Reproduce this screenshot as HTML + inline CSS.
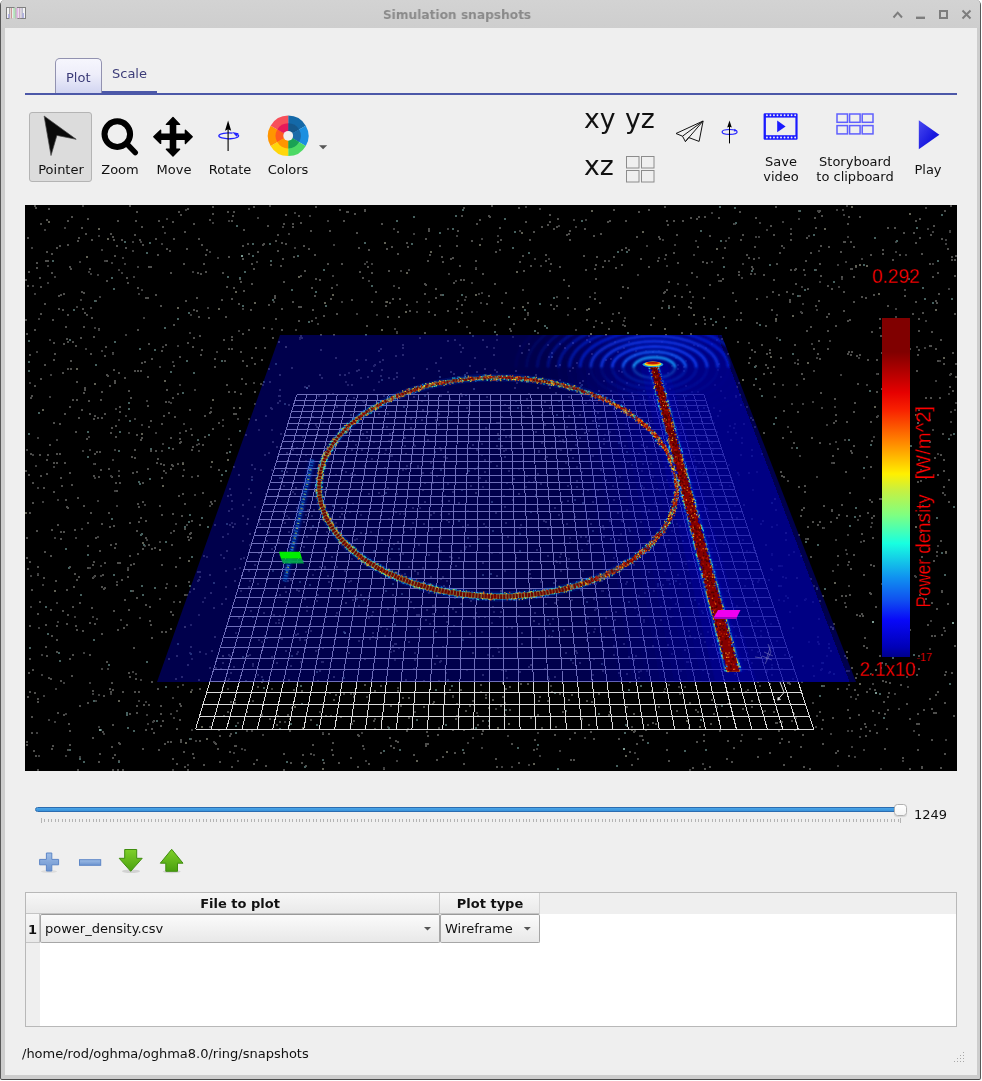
<!DOCTYPE html>
<html lang="en">
<head>
<meta charset="utf-8">
<title>Simulation snapshots</title>
<style>
html,body{margin:0;padding:0;background:#fff;}
body{width:982px;height:1081px;position:relative;overflow:hidden;font-family:"DejaVu Sans","Liberation Sans",sans-serif;font-size:13px;color:#111;}
.abs{position:absolute;}
#win{position:absolute;left:0;top:0;width:981px;height:1080px;background:#cdcdcd;border-radius:5px 5px 2px 2px;box-sizing:border-box;border:1px solid #585858;border-top:0;border-bottom-color:#4a4a4a;}
#titlebar{position:absolute;left:1px;top:0;width:979px;height:28px;background:linear-gradient(#d3d3d3,#cecece);border-radius:4px 4px 0 0;}
#title{will-change:transform;position:absolute;left:0;top:0;width:914px;text-align:center;font-weight:bold;font-size:13px;color:#8a8a8a;line-height:28px;transform:scaleX(0.9375);transform-origin:457px 0;top:1px !important;}
#content{position:absolute;left:5px;top:28px;width:972px;height:1047px;background:#efefef;}
.lbl{position:absolute;white-space:nowrap;line-height:16px;text-align:center;transform:translateX(-50%);will-change:transform;}
.tb{position:absolute;white-space:nowrap;line-height:16px;will-change:transform;}
svg{position:absolute;overflow:visible;}
</style>
</head>
<body>
<div id="win"></div>
<div id="titlebar"></div>
<div id="title">Simulation snapshots</div>
<!-- app icon -->
<svg style="left:6px;top:7px" width="21" height="13" viewBox="0 0 21 13">
<rect x="0.5" y="0.5" width="19" height="11" fill="#ececec" stroke="#808080" stroke-width="1"/>
<rect x="3.4" y="11" width="8" height="1.2" fill="#d0d0d0"/>
<rect x="8.5" y="0" width="2.5" height="1.1" fill="#c8c8c8"/>
<rect x="1.2" y="1" width="1.6" height="10" fill="#f6f6f6"/><rect x="17.2" y="1" width="1.6" height="10" fill="#f6f6f6"/>
<rect x="3" y="1" width="1.1" height="10" fill="#a8a8a8"/><rect x="2.2" y="7" width="1.3" height="4" fill="#a8a8e8"/>
<rect x="4.8" y="1" width="1.1" height="10.5" fill="#c89090"/><rect x="7.4" y="1" width="1.4" height="10" fill="#a4e0ac"/>
<rect x="9.4" y="1" width="1.1" height="10.5" fill="#9c9c9c"/><rect x="10.8" y="1" width="1.4" height="10" fill="#e8b4ea"/>
<rect x="13.2" y="1" width="1.1" height="10.5" fill="#c4a0c0"/><rect x="15.6" y="1" width="1.1" height="10" fill="#a8a8c0"/>
<rect x="16.6" y="6" width="1.2" height="5" fill="#a4a4e0"/>
</svg>
<!-- window buttons -->
<svg style="left:0;top:0" width="982" height="28" viewBox="0 0 982 28" fill="none" stroke="#7d7d7d" stroke-width="2">
<path d="M893.5 17.5 L897.7 12.7 L902 17.5" stroke-width="2"/>
<path d="M916 17.8 H925" stroke-width="2.4"/>
<rect x="940" y="11" width="7" height="7"/>
<path d="M962.5 10.5 L970.5 18.5 M970.5 10.5 L962.5 18.5"/>
</svg>
<div id="content"></div>

<!-- tabs -->
<div class="abs" style="left:25px;top:93px;width:932px;height:2px;background:#4c58a8;"></div>
<div class="abs" style="left:102px;top:91px;width:55px;height:3px;background:#4c58a8;"></div>
<div class="abs" style="left:55px;top:58px;width:47px;height:35px;box-sizing:border-box;border:1px solid #9292b0;border-bottom:0;border-radius:5px 5px 0 0;background:linear-gradient(#f6f6fd 0%,#eeeefa 45%,#d2d5f1 100%);"></div>
<div class="tb" style="left:66px;top:70px;color:#3c3c78;">Plot</div>
<div class="tb" style="left:112px;top:66px;color:#3c3c78;">Scale</div>

<!-- toolbar left -->
<div class="abs" style="left:29px;top:112px;width:63px;height:70px;box-sizing:border-box;border:1px solid #b4b4b4;border-radius:3px;background:#dcdcdc;"></div>
<div class="lbl" style="left:60.5px;top:162px;">Pointer</div>
<div class="lbl" style="left:120px;top:162px;">Zoom</div>
<div class="lbl" style="left:173.5px;top:162px;">Move</div>
<div class="lbl" style="left:229.5px;top:162px;">Rotate</div>
<div class="lbl" style="left:288.2px;top:162px;">Colors</div>
<svg style="left:0;top:100px" width="982" height="100" viewBox="0 100 982 100">
<!-- pointer -->
<defs>
<linearGradient id="pg" x1="0" y1="0" x2="1" y2="0"><stop offset="0" stop-color="#000"/><stop offset="1" stop-color="#222"/></linearGradient>
<linearGradient id="playg" x1="0" y1="0" x2="1" y2="1"><stop offset="0" stop-color="#4a4af0"/><stop offset="0.6" stop-color="#1a1ae0"/><stop offset="1" stop-color="#1010c8"/></linearGradient>
</defs>
<path d="M44.1 116 L76.2 139.3 L56.9 135.4 L51 155.6 Z" fill="#0a0a0a" stroke="#4a4a4a" stroke-width="0.7" stroke-linejoin="round"/>
<!-- zoom -->
<circle cx="117.3" cy="134.1" r="12.8" fill="none" stroke="#000" stroke-width="6"/>
<path d="M126.5 143.5 L135.3 152.6" stroke="#000" stroke-width="5.4" stroke-linecap="round"/>
<!-- move -->
<path d="M173 117.6 L179.6 124.4 H175.6 V134.2 H185.4 V130.2 L192.2 136.8 L185.4 143.4 V139.4 H175.6 V149.2 H179.6 L173 156 L166.4 149.2 H170.4 V139.4 H160.6 V143.4 L153.8 136.8 L160.6 130.2 V134.2 H170.4 V124.4 H166.4 Z" fill="#000" stroke="#000" stroke-width="1.4" stroke-linejoin="round"/>
<!-- rotate -->
<path d="M232.5 133.2 A9.9 2.9 0 1 0 237.6 134.6" fill="none" stroke="#2222ff" stroke-width="1.3"/>
<path d="M232.2 132 L238.6 133.2 L236.6 136.8 Z" fill="#2222ff"/>
<path d="M228.1 150.9 V127" stroke="#000" stroke-width="1.1"/>
<path d="M228.1 120.5 L231.2 130.8 L228.1 129.2 L225 130.8 Z" fill="#000"/>
<!-- colors -->
<g transform="translate(288.2 135.8)">
<path d="M0 0 L0 -20.3 A20.3 20.3 0 0 1 17.58 -10.15 Z" fill="#1469a8"/>
<path d="M0 0 L17.58 -10.15 A20.3 20.3 0 0 1 17.58 10.15 Z" fill="#1a8fe0"/>
<path d="M0 0 L17.58 10.15 A20.3 20.3 0 0 1 0 20.3 Z" fill="#4cd964"/>
<path d="M0 0 L0 20.3 A20.3 20.3 0 0 1 -17.58 10.15 Z" fill="#ffd60a"/>
<path d="M0 0 L-17.58 10.15 A20.3 20.3 0 0 1 -17.58 -10.15 Z" fill="#ff9500"/>
<path d="M0 0 L-17.58 -10.15 A20.3 20.3 0 0 1 0 -20.3 Z" fill="#f7505a"/>
<path d="M0 0 L0 -12.6 A12.6 12.6 0 0 1 10.91 -6.30 Z" fill="#15588c"/>
<path d="M0 0 L10.91 -6.30 A12.6 12.6 0 0 1 10.91 6.30 Z" fill="#1b6ba8"/>
<path d="M0 0 L10.91 6.30 A12.6 12.6 0 0 1 0 12.6 Z" fill="#1aa154"/>
<path d="M0 0 L0 12.6 A12.6 12.6 0 0 1 -10.91 6.30 Z" fill="#ff9500"/>
<path d="M0 0 L-10.91 6.30 A12.6 12.6 0 0 1 -10.91 -6.30 Z" fill="#ff5a1f"/>
<path d="M0 0 L-10.91 -6.30 A12.6 12.6 0 0 1 0 -12.6 Z" fill="#e6195a"/>
<circle r="4.9" fill="#efefef"/>
</g>
<path d="M319 145.2 H327.2 L323.1 149.2 Z" fill="#555"/>
<!-- paper plane -->
<g fill="none" stroke="#111" stroke-width="1" stroke-linejoin="round">
<path d="M703.1 121 L676 133.5 L682.5 136.2 Z"/>
<path d="M682.5 136.2 L685.4 141.6 L703.1 121"/>
<path d="M685.4 141.6 L688.6 137.5"/>
<path d="M688.6 137.5 L699.1 141.4 L703.1 121"/>
</g>
<!-- rotate small -->
<ellipse cx="729.6" cy="131.9" rx="7.5" ry="2.4" fill="none" stroke="#2222ff" stroke-width="1.2"/>
<path d="M734.5 128.8 L737.3 131 L733.8 131.6 Z" fill="#2222ff"/>
<path d="M729.5 143.4 V125" stroke="#000" stroke-width="1"/>
<path d="M729.5 120.4 L731.8 127.6 L729.5 126.7 L727.2 127.6 Z" fill="#000"/>
<!-- 4 squares -->
<g fill="none" stroke="#8c8c8c" stroke-width="1">
<rect x="626.5" y="156.5" width="12.5" height="11.5"/><rect x="641.5" y="156.5" width="12.5" height="11.5"/>
<rect x="626.5" y="170.5" width="12.5" height="11.5"/><rect x="641.5" y="170.5" width="12.5" height="11.5"/>
</g>
<!-- save video -->
<g>
<rect x="763.6" y="113.2" width="34" height="26.5" rx="1.2" fill="#1a1aff"/>
<rect x="765.9" y="117.6" width="29.5" height="17.6" fill="#efefef"/>
<g fill="#efefef"><circle cx="766.90" cy="115.3" r="0.95"/><circle cx="766.90" cy="137.5" r="0.95"/><circle cx="770.43" cy="115.3" r="0.95"/><circle cx="770.43" cy="137.5" r="0.95"/><circle cx="773.96" cy="115.3" r="0.95"/><circle cx="773.96" cy="137.5" r="0.95"/><circle cx="777.49" cy="115.3" r="0.95"/><circle cx="777.49" cy="137.5" r="0.95"/><circle cx="781.02" cy="115.3" r="0.95"/><circle cx="781.02" cy="137.5" r="0.95"/><circle cx="784.55" cy="115.3" r="0.95"/><circle cx="784.55" cy="137.5" r="0.95"/><circle cx="788.08" cy="115.3" r="0.95"/><circle cx="788.08" cy="137.5" r="0.95"/><circle cx="791.61" cy="115.3" r="0.95"/><circle cx="791.61" cy="137.5" r="0.95"/><circle cx="795.14" cy="115.3" r="0.95"/><circle cx="795.14" cy="137.5" r="0.95"/></g>
<path d="M777.2 120.6 L785.6 126.4 L777.2 132.2 Z" fill="#1a1aff"/>
</g>
<!-- storyboard -->
<g fill="none" stroke="#5050ff" stroke-width="1.5" opacity="0.9">
<rect x="837" y="114" width="10.5" height="8.3"/><rect x="849.6" y="114" width="10.5" height="8.3"/><rect x="862.2" y="114" width="10.8" height="8.3"/>
<rect x="837" y="125.6" width="10.5" height="8.3"/><rect x="849.6" y="125.6" width="10.5" height="8.3"/><rect x="862.2" y="125.6" width="10.8" height="8.3"/>
</g>
<!-- play -->
<path d="M918.8 120.2 L939.4 134.7 L918.8 149.3 Z" fill="url(#playg)"/>
</svg>
<div class="tb" style="left:583.5px;top:103.5px;font-size:26.67px;line-height:30px;">xy</div>
<div class="tb" style="left:625px;top:103.5px;font-size:26.67px;line-height:30px;">yz</div>
<div class="tb" style="left:583.5px;top:150.6px;font-size:26.67px;line-height:30px;">xz</div>
<div class="lbl" style="left:781px;top:154px;line-height:15px;">Save<br>video</div>
<div class="lbl" style="left:854.7px;top:154px;line-height:15px;">Storyboard<br>to clipboard</div>
<div class="lbl" style="left:928px;top:162px;">Play</div>

<!-- plot area -->
<svg style="left:25px;top:205px;overflow:hidden" width="932" height="566" viewBox="25 205 932 566">
<defs>
<linearGradient id="jet" x1="0" y1="0" x2="0" y2="1">
<stop offset="0" stop-color="#800000"/><stop offset="0.11" stop-color="#8a0000"/><stop offset="0.125" stop-color="#ff0000" stop-opacity="1"/>
</linearGradient>
</defs>
<rect x="25" y="205" width="932" height="566" fill="#000"/>
<path d="M356 360h2M429 255h2M99 754h2M121 580h2M621 265h2M544 425h2M63 294h2M469 634h2M96 452h2M117 770h2M459 266h2M871 332h2M253 269h2M615 612h2M75 432h2M72 342h2M321 635h2M172 759h2M145 521h2M598 391h2M130 398h2M406 305h2M585 270h2M602 267h2M658 416h2M533 750h2M462 527h2M501 670h2M395 512h2M279 390h2M740 455h2M108 513h2M562 712h2M921 557h2M771 665h2M319 280h2M145 730h2M453 374h2M800 556h2M180 706h2M456 246h2M709 285h2M807 527h2M373 564h2M633 714h2M618 673h2M95 301h2M301 691h2M738 272h2M87 523h2M687 662h2M316 601h2M933 561h2M48 678h2M388 378h2M650 325h2M530 266h2M248 500h2M157 459h2M432 606h2M917 714h2M107 376h2M484 617h2M587 490h2M929 346h2M863 646h2M909 769h2M310 631h2M392 595h2M261 360h2M109 386h2M179 443h2M699 444h2M37 702h2M876 392h2M294 494h2M29 355h2M454 753h2M403 532h2M153 733h2M657 261h2M492 607h2M432 614h2M428 312h2M518 616h2M88 401h2M93 419h2M476 372h2M137 554h2M640 259h2M129 206h2M605 360h2M574 309h2M397 232h2M97 418h2M653 591h2M177 464h2M380 578h2M510 331h2M143 705h2M502 697h2M520 525h2M112 353h2M129 556h2M783 477h2M515 371h2M553 229h2M235 746h2M395 356h2M731 762h2M52 746h2M330 299h2M737 473h2M555 581h2M955 377h2M389 434h2M570 760h2M822 720h2M362 434h2M652 405h2M850 451h2M862 616h2M782 438h2M229 736h2M529 570h2M773 235h2M53 492h2M508 471h2M223 558h2M482 563h2M398 288h2M250 310h2M257 687h2M226 551h2M234 700h2M664 207h2M515 558h2M843 292h2M879 328h2M422 410h2M514 388h2M469 546h2M113 611h2M499 617h2M786 292h2M767 368h2M199 336h2M53 360h2M629 682h2M850 355h2M651 691h2M698 564h2M184 767h2M586 340h2M46 220h2M843 311h2M564 348h2M469 405h2M870 422h2M53 463h2M242 505h2M538 452h2M807 539h2M290 763h2M454 340h2M87 568h2M944 675h2M703 735h2M455 719h2M158 750h2M180 742h2M547 225h2M918 656h2M820 393h2M648 210h2M819 359h2M201 350h2M509 329h2M594 269h2M358 736h2M568 700h2M828 314h2M929 264h2M279 401h2M308 249h2M815 306h2M544 669h2M600 234h2M803 270h2M478 539h2M652 723h2M645 730h2M229 489h2M488 726h2M571 695h2M544 459h2M740 741h2M922 471h2M597 413h2M885 664h2M165 632h2M149 607h2M477 529h2M99 452h2M463 280h2M242 516h2M827 331h2M943 364h2M758 580h2M171 465h2M929 346h2M503 430h2M789 302h2M432 704h2M191 435h2M190 647h2M552 619h2M372 637h2M225 571h2M351 300h2M764 580h2M44 552h2M592 675h2M476 224h2M418 545h2M554 508h2M549 271h2M140 440h2M922 313h2M111 477h2M303 246h2M952 391h2M301 338h2M864 638h2M894 470h2M440 358h2M574 733h2M609 712h2M742 540h2M116 491h2M83 393h2M460 280h2M300 223h2M674 296h2M845 472h2M110 433h2M93 476h2M908 330h2M489 217h2M372 633h2M299 338h2M69 745h2M751 450h2M137 371h2M293 257h2M210 412h2M344 518h2M568 416h2M321 662h2M537 388h2M302 561h2M847 224h2M281 243h2M40 224h2M775 723h2M589 400h2M551 692h2M276 663h2M133 648h2M697 712h2M584 608h2M543 521h2M729 426h2M260 556h2M228 349h2M439 561h2M80 338h2M39 278h2M665 467h2M466 373h2M81 292h2M706 596h2M916 724h2M711 494h2M638 454h2M734 506h2M71 676h2M214 367h2M300 662h2M28 475h2M397 542h2M585 537h2M275 241h2M928 522h2M248 571h2M212 207h2M368 596h2M110 692h2M310 720h2M696 411h2M279 722h2M819 211h2M118 476h2M861 297h2M172 615h2M625 248h2M428 229h2M331 517h2M669 444h2M111 747h2M898 364h2M698 604h2M807 539h2M762 712h2M178 496h2M766 354h2M69 731h2M667 645h2M776 723h2M167 742h2M795 722h2M607 222h2M871 441h2M112 237h2M67 342h2M677 575h2M132 591h2M880 668h2M596 257h2M667 225h2M666 750h2M722 456h2M526 476h2M28 673h2M841 277h2M791 721h2M944 754h2M119 744h2M92 691h2M283 282h2M891 477h2M265 416h2M261 677h2M530 597h2M103 696h2M725 500h2M810 253h2M656 409h2M104 356h2M364 466h2M692 517h2M661 342h2M37 699h2M87 703h2M300 307h2M733 428h2M716 707h2M322 734h2M317 681h2M502 683h2M810 327h2M940 768h2M229 525h2M112 690h2M42 502h2M494 284h2M864 724h2M485 481h2M421 420h2M240 282h2M620 298h2M170 742h2M293 574h2M160 726h2M311 321h2M745 579h2M261 715h2M944 703h2M428 231h2M187 209h2M528 667h2M440 515h2M769 350h2M451 558h2M410 529h2M148 545h2M26 538h2M793 552h2M884 613h2M147 406h2M755 218h2M948 502h2M284 587h2M91 608h2M424 284h2M394 644h2M798 487h2M899 255h2M312 310h2M77 498h2M675 358h2M280 478h2M471 729h2M348 400h2M816 588h2M828 644h2M930 235h2M856 615h2M921 768h2M233 288h2M75 626h2M486 347h2M684 499h2M522 256h2M588 336h2M199 689h2M449 557h2M313 510h2M286 472h2M440 450h2M333 700h2M595 609h2M147 377h2M683 371h2M101 418h2M537 715h2M588 431h2M488 546h2M802 666h2M462 348h2M585 403h2M274 298h2M203 556h2M594 299h2M351 450h2M402 470h2M853 412h2M933 226h2M792 628h2M417 629h2M788 742h2M240 591h2M301 552h2M795 269h2M535 490h2M613 574h2M153 721h2M566 427h2M119 483h2M943 460h2M418 615h2M686 662h2M467 525h2M894 228h2M155 239h2M460 690h2M626 707h2M25 280h2M425 746h2M900 685h2M484 460h2M826 317h2M254 364h2M180 740h2M723 317h2M870 674h2M112 770h2M820 246h2M26 334h2M263 244h2M685 517h2M156 463h2M565 653h2M740 320h2M126 278h2M332 743h2M621 402h2M422 473h2M253 207h2M35 756h2M333 677h2M310 529h2M685 454h2M511 744h2M265 766h2M277 235h2M446 520h2M81 228h2M223 716h2M931 636h2M108 469h2M258 640h2M404 438h2M529 240h2M737 552h2M760 636h2M396 611h2M227 212h2M841 505h2M781 722h2M94 416h2M532 411h2M344 404h2M261 682h2M251 477h2M803 508h2M136 713h2M649 397h2M942 434h2M521 633h2M706 263h2M634 355h2M427 261h2M243 230h2M635 351h2M450 259h2M751 267h2M213 608h2M485 527h2M775 321h2M106 375h2M362 401h2M214 743h2M789 684h2M57 525h2M705 593h2M884 588h2M364 659h2M198 317h2M27 286h2M311 288h2M384 636h2M931 332h2M599 418h2M414 571h2M812 522h2M866 648h2M114 256h2M747 690h2M225 587h2M579 663h2M222 537h2M397 691h2M56 626h2M278 620h2M66 590h2M60 681h2M89 269h2M288 405h2M790 270h2M945 553h2M396 484h2M368 250h2M293 530h2M307 510h2M28 272h2M49 445h2M134 692h2M757 682h2M819 601h2M833 463h2M465 711h2M160 714h2M212 214h2M846 516h2M867 360h2M646 447h2M360 533h2M496 576h2M827 286h2M549 408h2M426 369h2M278 623h2M91 240h2M518 763h2M358 370h2M461 313h2M98 477h2M664 292h2M238 304h2M456 716h2M751 663h2M202 445h2M161 632h2M496 446h2M790 757h2M892 330h2M823 506h2M325 492h2M605 480h2M406 466h2M780 472h2M228 655h2M278 396h2M276 447h2M182 494h2M930 398h2M359 272h2M430 463h2M276 725h2M563 442h2M690 308h2M694 681h2M62 310h2M29 692h2M929 442h2M885 665h2M407 247h2M922 506h2M263 328h2M76 400h2M639 404h2M101 587h2M549 388h2M484 472h2M818 212h2M133 564h2M247 244h2M402 554h2M169 251h2M233 467h2M64 414h2M859 217h2M863 541h2M443 586h2M214 525h2M104 414h2M57 713h2M586 701h2M89 623h2M128 610h2M704 769h2M183 752h2M118 373h2M432 483h2M444 496h2M708 520h2M452 258h2M344 571h2M449 632h2M43 578h2M684 407h2M425 620h2M233 212h2M469 366h2M458 322h2M865 298h2M440 579h2M496 372h2M158 221h2M77 770h2M170 612h2M116 585h2M779 722h2M200 355h2M381 496h2M190 739h2M200 274h2M136 598h2M527 408h2M333 335h2M882 250h2M519 528h2M79 603h2M113 370h2M680 433h2M660 620h2M654 406h2M874 690h2M212 429h2M67 615h2M555 366h2M417 573h2M151 359h2M277 403h2M67 245h2M708 537h2M145 605h2M638 672h2M588 519h2M689 636h2M340 461h2M460 604h2M699 582h2M482 721h2M473 389h2M48 209h2M658 707h2M501 446h2M482 675h2M881 389h2M854 690h2M434 315h2M93 337h2M392 646h2M399 299h2M846 658h2M541 728h2M697 247h2M66 339h2M109 527h2M821 729h2M106 261h2M795 722h2M941 592h2M693 345h2M51 273h2M653 318h2M223 340h2M931 709h2M319 375h2M727 432h2M92 565h2M650 464h2M187 537h2M943 487h2M951 673h2M172 466h2M539 697h2M238 475h2M655 724h2M268 532h2M406 243h2M228 392h2M438 371h2M676 490h2M720 541h2M941 591h2M197 476h2M142 749h2M74 574h2M918 669h2M593 739h2M618 313h2M283 754h2M669 609h2M780 586h2M296 590h2M402 355h2M393 544h2M807 289h2M477 441h2M205 255h2M328 734h2M284 523h2M679 526h2M775 207h2M790 240h2M251 358h2M322 648h2M452 730h2M397 254h2M160 706h2M257 252h2M47 261h2M27 569h2M336 314h2M560 571h2M571 435h2M448 514h2M628 342h2M234 581h2M663 692h2M187 343h2M39 455h2M749 358h2M486 304h2M90 354h2M917 482h2M436 476h2M36 263h2M685 564h2M633 660h2M641 736h2M776 710h2M279 375h2M950 206h2M70 269h2M569 231h2M440 396h2M268 369h2M84 313h2M37 770h2M697 407h2M170 629h2M229 736h2M647 725h2M688 631h2M857 384h2M545 522h2M90 513h2M665 255h2M935 695h2M757 757h2M31 590h2M889 653h2M788 682h2M107 669h2M204 437h2M132 473h2M262 245h2M151 549h2M937 475h2M753 259h2M297 652h2M727 741h2M296 508h2M682 428h2M112 725h2M40 379h2M291 447h2M886 413h2M188 540h2M221 604h2M361 450h2M413 755h2M505 689h2M884 749h2M739 212h2M903 233h2M472 445h2M609 521h2M833 423h2M425 285h2M603 381h2M173 239h2M52 320h2M134 371h2M378 351h2M742 235h2M56 248h2M166 249h2M738 275h2M779 253h2M92 578h2M229 752h2M937 273h2M925 599h2M134 458h2M235 414h2M139 240h2M60 295h2M869 500h2M513 308h2M160 306h2M835 415h2M326 532h2M369 639h2M292 227h2M384 468h2M314 255h2M757 582h2M353 721h2M512 500h2M658 237h2M832 628h2M56 652h2M556 306h2M380 686h2M746 255h2M575 427h2M756 299h2M613 500h2M199 652h2M26 742h2M231 501h2M805 261h2M29 562h2M527 303h2M528 394h2M531 561h2M876 733h2M291 368h2M315 425h2M741 443h2M535 375h2M137 288h2M527 313h2M668 540h2M389 303h2M435 610h2M938 294h2M457 231h2M405 417h2M335 475h2M463 764h2M538 381h2M413 445h2M496 335h2M569 240h2M381 540h2M559 365h2M913 667h2M702 537h2M198 680h2M474 469h2M618 442h2M154 548h2M498 449h2M544 402h2M298 514h2M797 364h2M765 365h2M278 540h2M642 740h2M381 370h2M266 541h2M218 470h2M771 310h2M193 310h2M225 599h2M179 357h2M838 515h2M775 510h2M470 486h2M225 317h2M678 315h2M312 417h2M931 603h2M500 240h2M37 614h2M899 653h2M735 433h2M537 509h2M499 228h2M170 469h2M643 620h2M30 454h2M954 646h2M742 637h2M891 440h2M708 440h2M720 391h2M681 333h2M489 648h2M345 472h2M668 306h2M941 635h2M273 615h2M755 366h2M281 639h2M519 672h2M45 625h2M555 393h2M940 541h2M821 216h2M423 707h2M954 314h2M64 463h2M581 429h2M189 410h2M556 562h2M128 673h2M579 415h2M759 693h2M549 222h2M679 584h2M559 557h2M445 673h2M240 394h2M426 732h2M806 331h2M771 570h2M677 263h2M283 486h2M416 615h2M87 219h2M101 634h2M455 566h2M619 477h2M136 435h2M335 616h2M564 430h2M845 607h2M498 423h2M193 338h2M820 276h2M854 403h2M505 437h2M859 355h2M386 629h2M504 507h2M803 767h2M690 334h2M823 686h2M388 441h2M298 591h2M728 465h2M461 396h2M518 208h2M849 493h2M391 456h2M695 515h2M353 697h2M521 644h2M663 293h2M700 577h2M181 516h2M899 600h2M83 293h2M872 538h2M827 349h2M568 559h2M673 221h2M698 217h2M239 279h2M696 506h2M281 309h2M617 352h2M899 445h2M215 668h2M379 362h2M238 618h2M835 753h2M196 298h2M709 767h2M831 510h2M227 712h2M734 424h2M568 286h2M784 655h2M712 325h2M593 327h2M295 635h2M264 348h2M509 710h2M595 265h2M520 684h2M952 353h2M742 709h2M277 716h2M193 758h2M638 212h2M189 534h2M504 715h2M706 509h2M885 682h2M408 642h2M453 283h2M209 575h2M676 235h2M46 252h2M723 544h2M853 302h2M547 701h2M521 353h2M59 424h2M760 631h2M665 335h2M371 302h2M907 580h2M374 691h2M822 744h2M592 421h2M315 651h2M375 638h2M282 259h2M871 502h2M324 569h2M872 711h2M438 547h2M540 484h2M918 724h2M378 414h2M695 710h2M835 326h2M363 402h2M349 512h2M155 295h2M828 247h2M433 621h2M583 256h2M433 513h2M136 212h2M72 400h2M866 692h2M648 267h2M832 718h2M581 591h2M656 356h2M666 290h2M242 246h2M708 674h2M665 384h2M128 391h2M915 243h2M456 309h2M696 219h2M402 348h2M830 522h2M600 470h2M908 515h2M214 637h2M60 532h2M45 647h2M604 261h2M534 740h2M65 327h2M817 637h2M614 620h2M482 274h2M39 602h2M633 365h2M511 628h2M586 310h2M109 689h2M242 361h2M666 221h2M462 210h2M34 330h2M904 296h2M248 330h2M157 689h2M43 488h2M761 454h2M486 397h2M76 580h2M817 354h2M772 292h2M325 716h2M496 466h2M78 238h2M36 268h2M40 287h2M423 524h2M344 375h2M906 704h2M648 267h2M348 582h2M613 655h2M506 376h2M173 325h2M396 373h2M669 633h2M513 600h2M821 669h2M303 547h2M324 492h2M87 546h2M915 221h2M876 360h2M640 522h2M623 644h2M934 458h2M410 602h2M726 591h2M641 445h2M851 668h2M315 207h2M354 475h2M299 638h2M186 249h2M320 350h2M856 356h2M305 766h2M726 717h2M380 753h2M112 758h2M591 702h2M841 596h2M230 445h2M341 264h2M718 610h2M501 417h2M285 215h2M835 600h2M495 759h2M114 755h2M850 569h2M815 270h2M263 613h2M618 739h2M943 471h2M931 740h2M353 694h2M543 412h2M218 423h2M221 300h2M210 502h2M396 573h2M437 735h2M902 358h2M277 251h2M530 589h2M912 314h2M405 680h2M831 289h2M184 529h2M636 237h2M378 493h2M556 227h2M121 240h2M234 703h2M625 424h2M292 492h2M461 305h2M482 340h2M285 244h2M371 411h2M210 593h2M110 234h2M77 241h2M595 584h2M916 675h2M523 271h2M908 612h2M147 298h2M288 532h2M603 444h2M681 297h2M710 724h2M427 393h2M484 369h2M404 446h2M763 433h2M201 245h2M287 566h2M85 234h2M882 254h2M289 731h2M751 701h2M82 309h2M173 531h2M798 211h2M228 511h2M628 657h2M801 313h2M507 537h2M405 469h2M424 333h2M408 698h2M413 378h2M476 450h2M851 352h2M718 218h2M504 405h2M843 242h2M185 431h2M104 588h2M935 349h2M821 663h2M124 600h2M887 228h2M668 282h2M488 553h2M355 445h2M513 324h2M668 580h2M171 545h2M251 264h2M209 668h2M591 354h2M474 358h2M297 634h2M446 458h2M184 232h2M302 509h2M367 377h2M291 708h2M136 531h2M492 700h2M141 363h2M550 264h2M671 422h2M598 694h2M880 499h2M147 469h2M797 412h2M398 648h2M292 450h2M268 305h2M424 502h2M450 372h2M83 506h2M172 222h2M477 725h2M374 729h2M168 659h2M26 745h2M318 396h2M393 651h2M66 624h2M248 489h2M610 391h2M166 390h2M559 441h2M753 385h2M226 287h2M873 295h2M935 713h2M804 486h2M204 416h2M165 402h2M621 521h2M232 216h2M92 738h2M442 262h2M555 561h2M368 494h2M887 710h2M117 221h2M444 694h2M161 478h2M279 396h2M601 581h2M62 373h2M744 586h2M613 210h2M389 738h2M481 734h2M98 329h2M390 456h2M861 534h2M822 596h2M615 268h2M323 316h2M773 712h2M482 731h2M51 749h2M848 756h2M162 227h2M274 296h2M254 392h2M196 311h2M344 462h2M593 236h2M44 304h2M740 405h2M292 224h2M882 681h2M560 450h2M744 660h2M130 565h2M915 302h2M759 389h2M71 485h2M151 682h2M530 718h2M804 492h2M137 330h2M149 621h2M930 346h2M579 438h2M906 438h2M175 679h2M789 612h2M193 224h2M675 604h2M735 636h2M636 744h2M62 611h2M78 577h2M371 616h2M271 549h2M757 652h2M888 534h2M859 616h2M892 260h2M357 735h2M175 567h2M280 638h2M704 217h2M398 317h2M568 397h2M95 538h2M468 411h2M541 227h2M255 348h2M455 612h2M820 670h2M673 253h2M853 247h2M60 478h2M719 485h2M668 761h2M850 242h2M661 308h2M281 330h2M557 219h2M469 448h2M65 500h2M140 518h2M380 376h2M148 267h2M633 732h2M948 480h2M111 683h2M629 752h2M176 656h2M151 729h2M159 506h2M441 501h2M305 455h2M778 295h2M783 765h2M319 671h2M649 432h2M690 601h2M231 767h2M752 581h2M496 767h2M335 695h2M505 523h2M56 454h2M366 432h2M218 730h2M584 598h2M624 611h2M37 567h2M191 450h2M356 539h2M528 482h2M316 427h2M327 264h2M815 228h2M187 770h2M93 562h2M475 269h2M554 603h2M879 656h2M387 317h2M558 436h2M718 364h2M451 551h2M709 566h2M168 413h2M656 489h2M865 736h2M122 692h2M300 336h2M447 311h2M29 626h2M809 769h2M624 326h2M534 613h2M610 359h2M452 492h2M918 319h2M413 669h2M734 674h2M319 567h2M324 567h2M425 744h2M593 599h2M688 535h2M31 717h2M414 660h2M332 394h2M574 517h2M847 354h2M471 592h2M620 443h2M115 544h2M356 454h2M358 415h2M461 216h2M51 254h2M287 715h2M332 755h2M817 525h2M576 653h2M554 735h2M769 646h2M423 681h2M391 247h2M633 565h2M488 216h2M717 275h2M562 440h2M126 625h2M408 718h2M435 363h2M925 398h2M456 704h2M436 656h2M810 557h2M733 748h2M789 300h2M199 577h2M350 581h2M101 524h2M549 385h2M138 507h2M731 557h2M865 727h2M934 636h2M671 366h2M561 502h2M860 729h2M237 723h2M939 398h2M447 392h2M86 315h2M386 249h2M733 627h2M35 208h2M339 210h2M336 613h2M887 306h2M625 221h2M709 236h2M226 385h2M534 478h2M917 750h2M551 353h2M613 409h2M445 330h2M173 366h2M555 727h2M134 235h2M127 283h2M199 741h2M527 684h2M652 646h2M850 269h2M690 218h2M725 536h2M172 449h2M387 488h2M198 239h2M298 307h2M904 270h2M382 402h2M485 600h2M45 261h2M250 611h2M621 250h2M475 261h2M660 450h2M280 434h2M70 369h2M626 383h2M347 212h2M945 672h2M335 634h2M642 464h2M933 713h2M94 454h2M718 605h2M716 432h2M448 522h2M433 702h2M47 455h2M114 383h2M199 572h2M413 397h2M32 503h2M430 577h2M142 549h2M571 600h2M368 618h2M691 273h2M151 638h2M870 565h2M592 456h2M421 401h2M503 496h2M377 448h2M471 241h2M310 231h2M374 365h2M272 338h2M119 407h2M301 763h2M880 336h2M593 659h2M503 451h2M188 582h2M386 427h2M764 620h2M410 419h2M329 693h2M541 415h2M257 669h2M716 340h2M748 473h2M635 656h2M626 582h2M572 458h2M438 728h2M242 334h2M918 331h2M719 731h2M118 761h2M897 482h2M778 600h2M54 354h2M343 221h2M424 294h2M736 387h2M819 443h2M353 398h2M703 317h2M94 576h2M849 718h2M801 510h2M222 273h2M760 524h2M115 437h2M320 335h2M861 614h2M314 570h2M438 681h2M818 341h2M308 386h2M55 581h2M720 565h2M943 628h2M50 679h2M279 616h2M385 306h2M211 504h2M142 483h2M648 430h2M754 247h2M439 246h2M648 371h2M466 408h2M800 516h2M184 595h2M781 246h2M590 524h2M669 389h2M603 439h2M608 715h2M758 739h2M285 651h2M711 563h2M25 320h2M879 499h2M947 249h2M921 254h2M275 319h2M63 532h2M240 559h2M792 294h2M452 609h2M790 432h2M312 745h2M117 563h2M459 659h2M373 721h2M781 669h2M545 261h2M717 416h2M463 730h2M891 336h2M526 399h2M69 473h2M203 765h2M192 447h2M581 472h2M280 266h2M197 572h2M380 627h2M119 412h2M676 524h2M165 345h2M727 704h2M711 700h2M268 453h2M31 733h2M733 661h2M161 565h2M739 512h2M161 351h2M626 452h2M366 326h2M586 640h2M803 379h2M718 364h2M638 678h2M884 621h2M876 417h2M142 502h2M37 575h2M523 417h2M69 267h2M942 493h2M336 407h2M138 522h2M483 321h2M190 538h2M480 685h2M607 577h2M321 378h2M595 279h2M71 217h2M504 703h2M110 545h2M781 476h2M136 706h2M469 706h2M219 762h2M354 214h2M392 299h2M684 498h2M667 463h2M693 457h2M105 347h2M790 234h2M50 610h2M884 354h2M328 582h2M215 744h2M891 378h2M129 523h2M785 540h2M413 394h2M687 570h2M352 441h2M402 345h2M589 584h2M882 465h2M270 265h2M67 315h2M605 618h2M951 257h2M246 712h2M458 717h2M773 367h2M331 288h2M170 438h2M192 347h2M478 617h2M116 246h2M896 656h2M515 401h2M248 587h2M27 238h2M886 729h2M460 352h2M315 279h2M702 262h2M551 637h2M936 552h2M89 655h2M34 386h2M950 374h2M412 508h2M29 659h2M848 562h2M606 406h2M505 293h2M580 537h2M554 677h2M463 753h2M955 364h2M435 289h2M855 267h2M765 545h2M648 510h2M603 637h2M402 698h2M697 346h2M331 557h2M568 234h2M893 399h2M252 664h2M732 293h2M175 586h2M593 632h2M393 748h2M271 657h2M430 473h2M141 438h2M209 413h2M586 320h2M251 465h2M690 303h2M217 749h2M711 463h2M751 707h2M257 675h2M256 760h2M611 321h2M778 731h2M627 288h2M896 623h2M720 281h2M844 656h2M162 721h2M588 725h2M756 323h2M666 733h2M129 677h2M875 607h2M582 381h2M221 692h2M818 301h2M165 588h2M819 264h2M439 448h2M73 587h2M67 221h2M743 424h2M495 513h2M148 344h2M461 295h2M661 412h2M601 323h2M770 569h2M197 581h2M788 555h2M848 217h2M870 467h2M150 451h2M406 731h2M779 743h2M390 706h2M69 567h2M127 570h2M587 541h2M847 321h2M59 454h2M285 568h2M222 663h2M46 656h2M141 227h2M524 319h2M100 470h2M214 359h2M592 502h2M919 595h2M881 353h2M627 462h2M576 481h2M479 220h2M50 556h2M179 704h2M538 701h2M919 238h2M844 242h2M101 392h2M660 607h2M888 693h2M187 665h2M427 440h2M918 735h2M102 575h2M362 746h2M246 524h2M940 340h2M628 250h2M241 379h2M863 575h2M769 684h2M364 685h2M422 568h2M346 212h2M368 701h2M366 438h2M46 460h2M495 252h2M671 355h2M769 353h2M304 599h2M304 271h2M537 474h2M390 746h2M623 348h2M740 240h2M599 303h2M918 410h2M817 642h2M673 307h2M396 494h2M837 449h2M918 350h2M722 279h2M336 555h2M782 577h2M546 457h2M383 769h2M757 621h2M367 267h2M746 551h2M712 536h2M929 699h2M540 582h2M940 455h2M853 446h2M382 360h2M163 416h2M32 670h2M439 662h2M430 515h2M197 273h2M172 514h2M762 521h2M283 770h2M699 554h2M100 400h2M622 287h2M623 389h2M336 567h2M504 571h2M818 644h2M763 275h2M883 702h2M351 385h2M307 469h2M584 229h2M801 374h2M666 480h2M267 226h2M248 254h2M434 664h2M230 495h2M909 719h2M688 307h2M226 453h2M776 264h2M157 255h2M106 281h2M853 555h2M761 345h2M30 398h2M302 755h2M682 221h2M680 536h2M53 423h2M354 540h2M913 233h2M689 703h2M440 551h2M203 264h2M909 630h2M840 252h2M114 548h2M819 712h2M637 615h2M288 680h2M919 219h2M51 530h2M602 526h2M82 631h2M653 543h2M185 301h2M44 365h2M240 352h2M567 298h2M391 576h2M458 558h2M576 363h2M698 544h2M260 470h2M857 695h2M806 238h2M819 522h2M692 768h2M748 670h2M597 490h2M395 741h2M567 486h2M160 464h2M34 693h2M127 577h2M179 439h2M435 298h2M53 343h2M150 267h2M581 719h2M234 392h2M290 580h2M780 358h2M949 387h2M916 371h2M566 235h2M384 454h2M477 716h2M243 558h2M947 604h2M496 423h2M356 233h2M135 221h2M92 617h2M715 565h2M86 439h2M602 591h2M444 590h2M697 435h2M56 463h2M46 474h2M751 650h2M272 442h2M387 414h2M358 641h2M683 491h2M330 716h2M246 366h2M513 479h2M794 345h2M867 513h2M314 296h2M364 210h2M522 461h2M190 533h2M724 669h2M242 259h2M929 420h2M896 575h2M72 655h2M211 651h2M909 349h2M329 231h2M849 320h2M180 215h2M161 515h2M179 720h2M778 566h2M124 378h2M500 612h2M117 630h2M372 612h2M928 549h2M941 239h2M624 446h2M231 221h2M63 344h2M541 443h2M613 646h2M740 313h2M770 226h2M74 530h2M91 318h2M148 705h2M164 744h2M463 208h2M208 435h2M726 759h2M176 764h2M537 321h2M567 568h2M884 714h2M104 563h2M245 435h2M773 280h2M304 387h2M40 476h2M300 276h2M69 407h2M545 255h2M442 577h2M298 216h2M358 248h2M693 670h2M582 494h2M586 544h2M731 626h2M920 481h2M433 638h2M350 758h2M454 598h2M179 602h2M804 600h2M927 625h2M848 352h2M944 211h2M269 719h2M285 592h2M271 409h2M704 324h2M113 240h2M955 256h2M440 538h2M726 659h2M587 529h2M491 206h2M509 687h2M547 556h2M631 765h2M414 446h2M869 593h2M388 271h2M427 744h2M297 535h2M98 762h2M705 434h2M652 477h2M293 690h2M903 562h2M559 694h2M609 432h2M170 273h2M800 747h2M397 742h2M234 746h2M198 580h2M269 382h2M181 677h2M206 250h2M354 596h2M395 644h2M150 625h2M182 463h2M409 311h2M398 571h2M703 741h2M558 515h2M488 296h2M306 611h2M322 662h2M736 320h2M485 695h2M773 384h2M802 735h2M178 212h2M721 339h2M400 706h2M558 449h2M662 585h2M560 554h2M845 596h2M283 224h2M594 411h2M25 471h2M84 388h2M338 763h2M306 537h2M286 453h2M296 654h2M118 743h2M676 711h2M904 296h2M231 337h2M458 503h2M657 586h2M69 659h2M409 581h2M67 508h2M442 647h2M688 468h2M385 450h2M419 338h2M658 402h2M897 587h2M89 414h2M362 278h2M106 662h2M413 608h2M563 630h2M533 232h2M135 679h2M498 652h2M449 690h2M205 272h2M475 613h2M528 344h2M549 215h2M711 443h2M783 411h2M436 760h2M66 507h2M592 544h2M812 602h2M813 676h2M145 298h2M251 284h2M609 221h2M129 714h2M115 426h2M602 671h2M81 410h2M753 549h2M519 262h2M588 633h2M888 349h2M441 257h2M917 355h2M353 548h2M219 736h2M31 396h2M576 487h2M557 474h2M113 526h2M417 467h2M704 511h2M594 610h2M548 636h2M722 258h2M339 517h2M279 595h2M846 652h2M902 758h2M288 518h2M231 340h2M78 418h2M574 588h2M500 706h2M751 350h2M399 555h2M230 673h2M748 258h2M771 527h2M33 751h2M94 624h2M603 537h2M61 486h2M249 655h2M323 411h2M752 420h2M846 671h2M440 661h2M233 414h2M84 390h2M469 333h2M75 346h2M908 279h2M858 715h2M209 220h2M763 374h2M535 432h2M715 507h2M846 422h2M572 368h2M174 417h2M553 309h2M501 303h2M231 299h2M76 630h2M254 469h2M748 659h2M727 640h2M183 264h2M737 342h2M67 369h2M881 663h2M325 444h2M920 532h2M748 363h2M341 470h2M357 767h2M886 425h2M180 442h2M425 239h2M360 595h2M184 504h2M253 764h2M735 301h2M227 681h2M177 394h2M465 547h2M720 617h2M142 245h2M873 566h2M150 421h2M696 742h2M563 280h2M322 707h2M381 224h2M793 714h2M935 301h2M230 702h2M311 516h2M637 759h2M799 296h2M231 349h2M506 483h2M811 438h2M617 513h2M58 309h2M26 558h2M224 361h2M697 513h2M76 382h2M366 564h2M485 698h2M278 543h2M785 578h2M208 318h2M831 511h2M853 277h2M766 671h2M122 770h2M140 371h2M634 608h2M497 242h2M59 246h2M550 305h2M447 341h2M450 567h2M103 589h2M770 373h2M393 379h2M703 298h2M364 211h2M887 697h2M335 358h2M292 302h2M134 450h2M144 362h2M533 482h2M573 760h2M145 538h2M504 457h2M192 754h2M68 724h2M287 581h2M227 496h2M438 414h2M155 451h2M769 753h2M538 451h2M936 303h2M40 314h2M79 706h2M835 421h2M730 440h2M114 381h2M182 476h2M56 640h2M427 736h2M137 504h2M608 329h2M111 428h2M264 455h2M634 731h2M752 269h2M866 457h2M99 551h2M125 248h2M245 384h2M859 516h2M375 292h2M855 678h2M631 393h2M36 531h2M446 622h2M58 296h2M832 456h2M176 729h2M720 377h2M179 558h2M813 349h2M233 408h2M249 545h2M750 274h2M27 697h2M63 715h2M563 543h2M954 276h2M794 270h2M228 257h2M891 580h2M830 627h2M119 563h2M621 372h2M847 710h2M713 714h2M163 471h2M873 516h2M951 260h2M787 683h2M877 374h2M470 601h2M869 731h2M331 750h2M695 324h2M94 464h2M793 443h2M270 408h2M626 674h2M600 448h2M923 710h2M613 257h2M426 610h2M837 556h2M870 594h2M440 295h2M258 553h2M704 642h2M836 518h2M29 513h2M525 222h2M138 692h2M453 626h2M644 512h2M493 355h2M368 764h2M243 291h2M387 609h2M889 683h2M659 239h2M324 549h2M115 483h2M216 658h2M442 757h2M851 453h2M148 427h2M724 248h2M409 394h2M424 483h2M365 360h2M396 377h2M254 565h2M936 609h2M340 717h2M351 724h2M834 399h2M902 372h2M425 745h2M34 206h2M898 385h2M131 457h2M490 462h2M779 566h2M717 309h2M590 732h2M707 591h2M163 465h2M707 632h2M102 732h2M663 545h2M479 478h2M327 576h2M337 590h2M559 267h2M953 716h2M530 578h2M733 224h2M83 327h2M595 592h2M483 524h2M794 730h2M937 361h2M771 675h2M60 539h2M519 346h2M32 483h2M172 398h2M626 726h2M72 607h2M202 493h2M667 453h2M323 763h2M51 636h2M586 623h2M689 292h2M849 595h2M529 574h2M732 490h2M356 371h2M878 713h2M870 255h2M837 751h2M380 349h2M230 734h2M851 269h2M191 521h2M781 739h2M199 525h2M954 260h2M626 510h2M417 574h2M735 397h2M303 522h2M937 692h2M227 534h2M473 618h2M136 472h2M395 609h2M352 600h2M837 689h2M298 321h2M233 667h2M538 624h2M677 369h2M822 528h2M70 361h2M310 754h2M506 627h2M795 284h2M306 607h2M396 611h2M567 501h2M896 330h2M290 666h2M814 218h2M67 750h2M871 518h2M387 574h2M296 455h2M932 277h2M921 767h2M123 628h2M879 319h2M339 375h2M685 386h2M765 326h2M818 619h2M428 555h2M434 607h2M536 550h2M383 396h2M754 352h2M569 739h2M448 501h2M161 424h2M371 273h2" stroke="#4e4e4c" stroke-width="2" fill="none"/>
<path d="M448 274h2M539 209h2M897 447h2M616 648h2M438 425h2M612 486h2M829 341h2M179 433h2M712 450h2M537 333h2M944 495h2M945 240h2M785 596h2M924 500h2M159 599h2M652 487h2M754 274h2M815 727h2M304 424h2M950 435h2M341 302h2M393 286h2M393 229h2M741 735h2M98 330h2M883 538h2M248 209h2M493 348h2M482 487h2M540 266h2M481 239h2M65 756h2M872 684h2M138 701h2M254 507h2M669 554h2M363 749h2M607 441h2M248 419h2M313 755h2M755 237h2M253 383h2M54 722h2M299 640h2M408 270h2M670 486h2M766 297h2M623 321h2M434 605h2M549 624h2M256 262h2M848 586h2M569 543h2M698 463h2M98 695h2M614 342h2M466 670h2M724 671h2M220 555h2M655 400h2M139 618h2M194 495h2M802 404h2M103 734h2M41 655h2M821 408h2M834 407h2M816 477h2M231 509h2M790 229h2M782 222h2M89 568h2M235 633h2M38 756h2M295 569h2M667 373h2M603 529h2M388 519h2M132 251h2M782 385h2M732 569h2M456 236h2M848 671h2M816 310h2M376 315h2M903 363h2M397 688h2M522 290h2M370 532h2M512 337h2M895 317h2M565 463h2M545 604h2M239 568h2M282 227h2M955 403h2M752 490h2M859 737h2M472 599h2M189 653h2M162 347h2M38 319h2M244 750h2M413 234h2M34 294h2M499 250h2M233 753h2M97 537h2M371 678h2M521 416h2M32 455h2M234 569h2M416 312h2M125 335h2M229 656h2M492 656h2M804 275h2M608 261h2M907 687h2M198 615h2M692 451h2M759 686h2M733 689h2M645 351h2M146 715h2M638 596h2M89 450h2M844 440h2M30 607h2M604 435h2M674 245h2M273 302h2M954 410h2M846 206h2M63 683h2M74 617h2M271 430h2M818 251h2M594 629h2M294 248h2M182 685h2M43 696h2M800 312h2M802 304h2M216 352h2M851 747h2M191 730h2M356 314h2M547 596h2M925 208h2M98 236h2M594 293h2M539 756h2M104 261h2M702 764h2M654 503h2M493 612h2M711 213h2M598 419h2M49 397h2M874 725h2M856 674h2M238 331h2M750 418h2M712 645h2M138 294h2M584 738h2M385 302h2M114 450h2M895 309h2M116 582h2M305 515h2M341 508h2M176 711h2M645 548h2M812 402h2M32 286h2M101 250h2M141 425h2M557 600h2M491 623h2M650 421h2M801 287h2M47 266h2M758 237h2M711 344h2M895 647h2M845 262h2M209 506h2M477 467h2M748 343h2M283 513h2M891 562h2M54 538h2M416 302h2M191 659h2M191 690h2M805 539h2M305 461h2M38 628h2M575 227h2M373 442h2M582 571h2M860 542h2M26 450h2M936 556h2M838 287h2M569 371h2M132 242h2M870 527h2M460 551h2M400 271h2M575 330h2M494 370h2M241 749h2M79 757h2M275 623h2M556 297h2M688 423h2M248 500h2M798 219h2M756 472h2M466 327h2M205 654h2M654 376h2M732 497h2M796 606h2M279 555h2M288 234h2M118 420h2M681 471h2M658 351h2M696 277h2M637 275h2M736 606h2M336 285h2M90 274h2M573 220h2M100 576h2M101 351h2M595 321h2M764 711h2M688 728h2M729 486h2M812 666h2M207 308h2M286 516h2M429 624h2M738 383h2M480 303h2M906 677h2M375 536h2M877 416h2M56 603h2M873 437h2M134 419h2M847 565h2M711 549h2M309 216h2M890 400h2M99 297h2M186 525h2M702 475h2M209 252h2M172 698h2M124 264h2M417 466h2M692 297h2M608 434h2M88 272h2M327 221h2M299 339h2M388 578h2M580 386h2M166 584h2M831 463h2M404 581h2M195 741h2M704 320h2M918 460h2M840 375h2M317 595h2M808 236h2M254 404h2M932 430h2M805 599h2M898 580h2M271 689h2M294 213h2M76 307h2M704 592h2M881 584h2M265 494h2M55 689h2M473 705h2M143 318h2M495 709h2M120 620h2M145 702h2M516 383h2M261 642h2M475 268h2M146 401h2M94 478h2M394 660h2M505 450h2M371 264h2M98 727h2M252 701h2M787 427h2M601 591h2M137 267h2M467 743h2M82 451h2M559 380h2M547 529h2M242 309h2M110 694h2M296 685h2M496 340h2M101 669h2M671 531h2M125 416h2M312 575h2M94 328h2M745 692h2M518 469h2M209 727h2M36 733h2M949 231h2M684 687h2M728 238h2M575 445h2M816 716h2M705 348h2M691 579h2M173 602h2M847 535h2M783 248h2M902 582h2M697 392h2M741 438h2M41 675h2M948 289h2M485 428h2M895 242h2M317 655h2M168 402h2M336 527h2M622 410h2M92 617h2M50 375h2M37 574h2M520 444h2M92 694h2M407 729h2M898 709h2M713 423h2M661 427h2M222 687h2M231 523h2M828 673h2M302 437h2M798 535h2M57 622h2M206 557h2M447 229h2M607 588h2M813 371h2M269 206h2M183 470h2M646 671h2M511 767h2M753 601h2M165 473h2M271 329h2M305 632h2M177 346h2M559 344h2M620 534h2M932 264h2M196 445h2M457 377h2M107 669h2M833 624h2M284 434h2M905 360h2M787 481h2M754 623h2M122 258h2M471 312h2M42 502h2M97 501h2M796 385h2M916 347h2M455 281h2M567 591h2M894 513h2M851 731h2M622 325h2M481 455h2M536 749h2M625 584h2M945 740h2M596 403h2M471 283h2M631 465h2M609 597h2M210 467h2M683 448h2M446 581h2M561 469h2M718 281h2M742 264h2M664 689h2M242 541h2M843 215h2M480 692h2M373 390h2M501 538h2M829 444h2M465 297h2M237 761h2M443 616h2M162 444h2M404 574h2M414 712h2M810 579h2M155 433h2M680 426h2M925 478h2M140 242h2M547 345h2M930 621h2M655 636h2M686 285h2M505 671h2M365 761h2M389 559h2M746 653h2M347 385h2M855 699h2M734 224h2M717 370h2M428 584h2M144 505h2M880 769h2M682 414h2M674 460h2M746 407h2M403 514h2M689 467h2M192 272h2M640 671h2M895 252h2M228 221h2M634 753h2M447 484h2M54 277h2M842 210h2M882 383h2M112 460h2M29 383h2M260 384h2M296 448h2M44 230h2M141 290h2M115 409h2M177 687h2M368 281h2M559 563h2M352 504h2M452 696h2M920 470h2M366 262h2M110 476h2M191 477h2M118 270h2M664 259h2M738 475h2M159 542h2M374 719h2M528 350h2M217 258h2M794 363h2M884 638h2M419 508h2M759 223h2M259 524h2M841 279h2M846 689h2M121 273h2M625 361h2M220 669h2M848 685h2M835 442h2M662 301h2M869 689h2M603 651h2M166 219h2M222 426h2M135 674h2M271 470h2M538 639h2M559 751h2M364 264h2M56 440h2M766 230h2M251 731h2M322 422h2M680 671h2M654 402h2M948 394h2M234 524h2M703 473h2M159 367h2M88 437h2M499 553h2M871 523h2M431 529h2M560 519h2M81 529h2M116 506h2M75 538h2M551 448h2M179 385h2M669 457h2M497 236h2M227 534h2M147 724h2M760 739h2M915 577h2M727 693h2M566 524h2M819 282h2M133 277h2M663 602h2M472 701h2M93 464h2M847 731h2M252 666h2M350 694h2M754 634h2M813 586h2M572 663h2M823 528h2M658 258h2M132 672h2M114 491h2M161 244h2M903 338h2M89 683h2M725 241h2M332 276h2M897 554h2M472 738h2M112 354h2M428 302h2M758 258h2M57 500h2M811 344h2M567 315h2M741 278h2M348 373h2M863 750h2M643 622h2M198 451h2M202 602h2M808 642h2M749 552h2M396 332h2M937 454h2M494 325h2M118 471h2M783 601h2M509 437h2M214 501h2M801 682h2M427 412h2M776 338h2M791 404h2M527 315h2M913 731h2M371 459h2M53 467h2M550 686h2M858 358h2M900 534h2M345 382h2M771 555h2M724 398h2M700 634h2M82 206h2M908 443h2M613 558h2M35 466h2M646 246h2M945 244h2M359 439h2M893 531h2M863 478h2M399 514h2M408 567h2M428 593h2M315 318h2M257 218h2M717 626h2M799 456h2M861 259h2M935 381h2M797 360h2M857 520h2M284 722h2M696 539h2M414 653h2M884 520h2M161 451h2M577 550h2M711 262h2M378 382h2M893 533h2M924 348h2M902 761h2M693 255h2M837 766h2M491 553h2M506 678h2M826 425h2M771 554h2M394 461h2M90 308h2M146 540h2M932 232h2M949 232h2M257 584h2M97 275h2M534 259h2M228 679h2M680 617h2M343 694h2M412 523h2M678 687h2M351 559h2M776 525h2M781 566h2M612 314h2M639 736h2M95 701h2M481 632h2M37 438h2M237 419h2M396 761h2M396 333h2M695 241h2M497 648h2M49 340h2M464 300h2M213 742h2M322 733h2M832 571h2M128 433h2M837 265h2M249 581h2M929 649h2M186 595h2M677 284h2M451 412h2M360 515h2M361 733h2M774 397h2M528 765h2M795 718h2M36 352h2M644 593h2M876 374h2M212 223h2M689 770h2M925 321h2M914 576h2M79 262h2M237 723h2M48 720h2M896 426h2M548 679h2M183 424h2M172 362h2M671 654h2M847 237h2M459 345h2M641 471h2M643 488h2M264 636h2M246 731h2M668 685h2M80 300h2M817 211h2M846 554h2M949 375h2M791 448h2M576 467h2M262 735h2M866 385h2M262 385h2M950 412h2M624 318h2M792 679h2M754 427h2M304 640h2M548 259h2M525 207h2M478 294h2M914 277h2M944 631h2M170 533h2M496 381h2M679 427h2M581 550h2M443 457h2M228 439h2M190 625h2M390 652h2M335 523h2M190 429h2M481 293h2M170 403h2M628 529h2M152 722h2M328 394h2M452 697h2M885 656h2M812 703h2M509 489h2M507 736h2M227 689h2M631 727h2M173 718h2M198 444h2M100 566h2M743 598h2M96 619h2M127 568h2M776 641h2M368 566h2M746 607h2M685 361h2M501 767h2M31 248h2M894 694h2M387 727h2M670 617h2M467 511h2M185 210h2M727 354h2M666 580h2M719 614h2M835 540h2M629 430h2M373 366h2M587 618h2M691 392h2M317 324h2M164 233h2M656 536h2M850 697h2M476 713h2M306 578h2M558 226h2M383 768h2M569 538h2M679 694h2M144 546h2M285 602h2M649 472h2M42 585h2M844 603h2M93 577h2M854 757h2M37 488h2M937 546h2M319 712h2M189 592h2M47 283h2M222 420h2M85 349h2M175 524h2M258 430h2M83 653h2M295 330h2M776 315h2M172 770h2M589 297h2M816 358h2M469 403h2M65 714h2M904 601h2M457 301h2M669 389h2M636 335h2M333 245h2M111 263h2M189 333h2M64 228h2M360 378h2M140 680h2M190 315h2M210 408h2M648 572h2M713 408h2M394 329h2M902 650h2M358 606h2M443 465h2M481 444h2M519 231h2M714 385h2M194 390h2M939 361h2M837 565h2M666 266h2M481 748h2M662 240h2M826 656h2M585 220h2M487 655h2M927 229h2M640 551h2M701 611h2M548 357h2M905 255h2M830 734h2M170 714h2M204 598h2M185 210h2M537 733h2M30 576h2M449 399h2M608 595h2M770 624h2M366 697h2M618 371h2M348 591h2M220 481h2M950 422h2M836 210h2M618 540h2M350 474h2M845 550h2M187 765h2M525 487h2M904 290h2" stroke="#404040" stroke-width="2" fill="none"/>
<path d="M528 253h2M177 644h2M804 290h2M612 630h2M953 507h2M625 725h2M462 210h2M114 342h2M130 591h2M308 322h2M645 651h2M477 468h2M108 665h2M689 583h2M124 242h2M530 512h2M244 272h2M695 470h2M309 585h2M235 726h2M537 745h2M461 490h2M492 531h2M435 690h2M146 253h2M792 354h2M855 508h2M79 759h2M779 340h2M385 591h2M903 461h2M290 724h2M59 661h2M514 232h2M113 289h2M896 241h2M245 681h2M640 686h2M922 288h2M771 503h2M376 395h2M164 328h2M685 396h2M883 718h2M291 550h2M193 373h2M953 434h2M510 435h2M281 471h2M87 432h2M189 515h2M814 270h2M670 598h2M570 660h2M242 306h2M451 686h2M849 526h2M723 267h2M787 598h2M262 680h2M517 748h2M225 471h2M189 739h2M725 328h2M592 531h2M439 377h2M165 687h2M505 710h2M299 582h2M126 715h2M805 542h2M191 557h2M932 303h2M401 594h2M139 349h2M535 495h2M363 600h2M616 766h2M207 527h2M813 235h2M350 415h2M494 332h2M316 672h2M669 584h2M601 577h2M517 408h2M581 385h2M393 398h2M644 400h2M332 506h2M751 456h2M751 271h2M455 216h2M239 278h2M235 733h2M544 326h2M796 448h2M710 319h2M725 499h2M128 403h2M719 207h2M297 256h2M461 295h2M312 526h2M941 215h2M552 631h2M383 751h2M869 391h2M38 413h2M208 435h2M129 421h2M149 479h2M624 733h2M356 599h2M439 233h2M93 640h2M138 482h2M551 357h2M463 578h2M916 228h2M52 261h2M462 750h2M694 600h2M189 586h2M768 580h2M589 342h2M392 584h2M286 762h2M170 372h2M186 361h2M177 319h2M627 333h2M188 522h2M539 304h2M598 714h2M447 680h2M581 221h2M769 265h2M266 638h2M168 448h2M799 211h2M272 571h2M272 300h2M879 694h2M628 602h2M464 549h2M512 248h2M252 256h2M488 721h2M269 244h2M643 391h2M227 277h2M291 290h2M817 545h2M797 296h2M371 286h2M458 521h2M100 730h2M822 663h2M275 364h2M201 518h2M467 538h2M133 731h2M464 375h2M626 252h2M534 331h2M892 366h2M863 265h2M316 725h2M65 549h2M73 310h2M558 401h2M547 620h2M197 440h2M710 420h2M468 471h2M702 670h2M118 451h2M949 684h2M28 434h2M702 613h2M128 409h2M442 295h2M574 500h2M398 549h2M279 478h2M702 544h2M252 244h2M435 632h2M729 647h2M95 365h2M111 278h2M83 762h2M221 475h2M668 308h2M416 720h2M721 706h2M284 404h2M126 713h2M601 664h2M323 270h2M628 690h2M154 350h2M93 701h2M472 336h2M700 231h2M739 395h2M617 252h2M833 282h2M140 535h2M270 261h2M251 480h2M381 380h2M737 581h2M441 489h2M190 654h2M473 389h2M28 341h2M118 762h2M768 647h2M910 446h2M677 365h2M699 472h2M759 325h2M142 595h2M119 432h2M28 362h2M68 568h2M111 519h2M629 531h2M892 658h2M684 751h2M226 524h2M556 415h2M519 551h2M154 588h2M388 728h2M597 433h2M659 490h2M700 720h2M156 721h2M47 634h2M465 395h2M69 750h2M325 488h2M146 662h2M824 589h2M554 693h2M279 729h2M580 590h2M582 503h2M325 617h2M874 238h2M863 468h2M519 534h2M773 424h2M771 668h2M907 572h2M751 519h2M490 574h2M113 575h2M775 418h2M870 445h2M828 648h2M695 467h2M675 581h2M735 223h2M304 767h2M87 555h2M394 625h2M58 653h2M647 743h2M936 518h2M848 440h2M373 551h2M508 317h2M761 396h2M524 310h2M403 407h2M301 704h2M69 340h2M941 553h2M894 636h2M913 655h2M320 637h2M184 527h2M182 393h2M754 367h2M385 493h2M87 457h2M364 243h2M897 383h2M937 261h2M462 640h2M221 361h2M816 589h2M546 328h2M139 484h2M475 728h2M432 467h2M45 607h2M424 396h2M413 217h2M778 586h2M141 534h2M365 335h2M720 241h2M664 398h2M236 226h2M618 443h2M325 306h2M229 452h2M263 688h2M625 535h2M149 243h2M610 539h2M553 298h2M547 677h2M150 449h2M242 657h2M343 632h2M396 221h2M948 439h2M143 545h2M434 452h2M694 638h2M274 547h2M626 452h2M411 244h2M557 769h2M854 517h2M300 686h2M819 696h2M504 219h2M80 595h2M498 439h2M638 385h2M821 686h2M586 602h2M188 313h2M291 656h2M924 299h2M343 678h2M917 423h2M734 208h2M94 301h2M951 299h2M213 583h2M29 648h2M445 725h2M491 502h2M743 562h2M553 583h2M755 379h2M127 728h2M565 711h2M141 586h2M322 760h2M239 431h2M923 602h2M391 549h2M641 486h2M315 292h2M657 584h2M888 323h2M399 750h2M682 541h2M165 542h2M715 322h2M371 371h2M452 229h2M944 575h2M252 617h2M28 371h2M703 408h2M705 750h2M482 575h2M440 470h2M263 382h2M833 674h2" stroke="#46605e" stroke-width="2" fill="none"/>
<path d="M193 589h2M859 265h2M54 591h2M249 534h2M723 617h2M716 249h2M533 764h2M508 408h2M579 383h2M94 384h2M735 396h2M289 719h2M164 381h2M699 727h2M915 527h2M322 769h2M572 343h2M758 700h2M775 319h2M162 486h2M341 514h2M719 411h2M584 433h2M712 659h2M785 533h2M605 335h2M796 578h2M530 665h2M588 374h2M866 266h2M693 315h2M107 239h2M631 730h2M770 357h2M298 277h2M206 739h2M48 222h2M658 441h2M475 295h2M875 670h2M570 450h2M908 392h2M232 527h2M945 552h2M642 232h2M159 550h2M406 273h2M98 229h2M664 329h2M76 369h2M743 505h2M712 491h2M332 295h2M915 415h2M475 493h2M591 211h2M855 266h2M774 499h2M258 521h2M118 701h2M652 352h2M416 761h2M500 591h2M829 672h2M874 407h2M250 493h2M302 728h2M278 342h2M736 518h2M430 252h2M254 303h2M247 656h2M834 583h2M497 728h2M381 719h2M521 233h2M664 571h2M435 420h2M188 561h2M533 621h2M185 743h2M807 363h2M460 394h2M508 724h2M239 408h2M694 460h2M386 302h2M295 488h2M381 330h2M518 494h2M410 428h2M348 653h2M851 207h2M918 515h2M285 347h2M590 334h2M742 380h2M324 303h2M830 651h2M859 684h2M472 653h2M218 309h2M184 627h2M201 727h2M943 358h2M350 432h2M684 650h2M422 490h2M177 308h2M212 400h2M190 692h2M625 756h2M222 656h2M686 721h2M522 307h2M42 410h2M479 245h2M935 310h2M575 651h2M247 519h2M670 439h2M611 382h2M688 561h2M405 312h2M516 272h2M683 367h2M732 520h2M182 464h2M588 309h2M86 257h2M227 460h2M235 292h2M286 464h2M878 294h2M294 707h2M211 462h2M25 513h2M497 434h2M405 454h2M832 629h2M141 434h2M909 214h2M142 543h2M792 316h2M488 708h2M824 229h2M255 420h2M384 243h2M345 603h2M446 752h2" stroke="#606054" stroke-width="2" fill="none"/>
<path d="M426 435h2M344 633h2M99 730h2M791 657h2M718 653h2M623 749h2M875 693h2M306 388h2M872 622h2M952 623h2M241 256h2M598 426h2" stroke="#7a9890" stroke-width="2" fill="none"/>
<path d="M296.7 394.6L195.5 729.4M296.7 394.6L703.8 394.6M306.9 394.6L211 729.4M295 400.2L705.6 400.2M317.1 394.6L226.4 729.4M293.3 405.8L707.5 405.8M327.2 394.6L241.9 729.4M291.6 411.6L709.4 411.6M337.4 394.6L257.3 729.4M289.8 417.4L711.3 417.4M347.6 394.6L272.8 729.4M288 423.4L713.3 423.4M357.8 394.6L288.2 729.4M286.2 429.5L715.3 429.5M367.9 394.6L303.7 729.4M284.3 435.6L717.3 435.6M378.1 394.6L319.2 729.4M282.4 441.9L719.3 441.9M388.3 394.6L334.6 729.4M280.5 448.3L721.5 448.3M398.5 394.6L350.1 729.4M278.5 454.9L723.6 454.9M408.7 394.6L365.5 729.4M276.5 461.5L725.8 461.5M418.8 394.6L381 729.4M274.4 468.3L728 468.3M429 394.6L396.4 729.4M272.3 475.2L730.3 475.2M439.2 394.6L411.9 729.4M270.2 482.2L732.6 482.2M449.4 394.6L427.4 729.4M268 489.4L734.9 489.4M459.5 394.6L442.8 729.4M265.8 496.7L737.4 496.7M469.7 394.6L458.3 729.4M263.6 504.2L739.8 504.2M479.9 394.6L473.7 729.4M261.3 511.8L742.3 511.8M490.1 394.6L489.2 729.4M258.9 519.6L744.9 519.6M500.2 394.6L504.6 729.4M256.5 527.5L747.5 527.5M510.4 394.6L520.1 729.4M254.1 535.6L750.1 535.6M520.6 394.6L535.6 729.4M251.6 543.9L752.8 543.9M530.8 394.6L551 729.4M249 552.3L755.6 552.3M541 394.6L566.5 729.4M246.4 561L758.5 561M551.1 394.6L581.9 729.4M243.8 569.8L761.4 569.8M561.3 394.6L597.4 729.4M241 578.8L764.3 578.8M571.5 394.6L612.9 729.4M238.2 588L767.3 588M581.7 394.6L628.3 729.4M235.4 597.4L770.4 597.4M591.8 394.6L643.8 729.4M232.5 607L773.6 607M602 394.6L659.2 729.4M229.5 616.9L776.8 616.9M612.2 394.6L674.7 729.4M226.5 626.9L780.1 626.9M622.4 394.6L690.1 729.4M223.4 637.3L783.5 637.3M632.6 394.6L705.6 729.4M220.2 647.8L787 647.8M642.7 394.6L721.1 729.4M216.9 658.6L790.5 658.6M652.9 394.6L736.5 729.4M213.5 669.7L794.2 669.7M663.1 394.6L752 729.4M210.1 681.1L797.9 681.1M673.3 394.6L767.4 729.4M206.6 692.7L801.7 692.7M683.4 394.6L782.9 729.4M203 704.6L805.7 704.6M693.6 394.6L798.3 729.4M199.3 716.9L809.7 716.9M703.8 394.6L813.8 729.4M195.5 729.4L813.8 729.4" stroke="#dcdcdc" stroke-width="1" fill="none" shape-rendering="crispEdges"/>
<clipPath id="pc"><polygon points="280,335 721.5,335 856,682 157,682"/></clipPath>
<filter id="bl1" x="-20%" y="-20%" width="140%" height="140%"><feGaussianBlur stdDeviation="0.9"/></filter>
<filter id="bl2" x="-20%" y="-20%" width="140%" height="140%"><feGaussianBlur stdDeviation="0.5"/></filter>
<polygon points="280,335 721.5,335 856,682 157,682" fill="#000098" fill-opacity="0.5"/>
<g clip-path="url(#pc)">
<g shape-rendering="crispEdges" fill="#0000a8"><path d="M544.9 335L553.7 335L590.4 682L576.4 682Z" fill-opacity="0.031"/><path d="M553.7 335L562.6 335L604.4 682L590.4 682Z" fill-opacity="0.066"/><path d="M562.6 335L571.4 335L618.3 682L604.4 682Z" fill-opacity="0.112"/><path d="M571.4 335L580.2 335L632.3 682L618.3 682Z" fill-opacity="0.165"/><path d="M580.2 335L589 335L646.3 682L632.3 682Z" fill-opacity="0.223"/><path d="M589 335L597.9 335L660.3 682L646.3 682Z" fill-opacity="0.284"/><path d="M597.9 335L606.7 335L674.3 682L660.3 682Z" fill-opacity="0.346"/><path d="M606.7 335L615.5 335L688.2 682L674.3 682Z" fill-opacity="0.407"/><path d="M615.5 335L624.4 335L702.2 682L688.2 682Z" fill-opacity="0.463"/><path d="M624.4 335L633.2 335L716.2 682L702.2 682Z" fill-opacity="0.512"/><path d="M633.2 335L642 335L730.2 682L716.2 682Z" fill-opacity="0.553"/><path d="M642 335L650.9 335L744.2 682L730.2 682Z" fill-opacity="0.582"/><path d="M650.9 335L659.7 335L758.1 682L744.2 682Z" fill-opacity="0.598"/><path d="M659.7 335L668.5 335L772.1 682L758.1 682Z" fill-opacity="0.600"/><path d="M668.5 335L677.4 335L786.1 682L772.1 682Z" fill-opacity="0.600"/><path d="M677.4 335L686.2 335L800.1 682L786.1 682Z" fill-opacity="0.600"/><path d="M686.2 335L695 335L814.1 682L800.1 682Z" fill-opacity="0.600"/><path d="M695 335L703.8 335L828 682L814.1 682Z" fill-opacity="0.600"/><path d="M703.8 335L712.7 335L842 682L828 682Z" fill-opacity="0.600"/><path d="M712.7 335L717.5 335L849.7 682L842 682Z" fill-opacity="0.600"/></g>
<g filter="url(#bl1)" fill="none"><path d="M633.6 367.6A20.7 10.3 0 0 1 675 367.6" stroke="#189cff" stroke-opacity="1.00" stroke-width="2.6"/><path d="M633.6 367.6A20.7 10.3 0 0 0 675 367.6" stroke="#189cff" stroke-opacity="0.34" stroke-width="2.6"/><path d="M622.9 367.6A31.4 15.7 0 0 1 685.7 367.6" stroke="#1060ff" stroke-opacity="0.91" stroke-width="2.6"/><path d="M622.9 367.6A31.4 15.7 0 0 0 685.7 367.6" stroke="#1060ff" stroke-opacity="0.26" stroke-width="2.6"/><path d="M612.2 367.6A42.1 21 0 0 1 696.4 367.6" stroke="#0c44ff" stroke-opacity="0.82" stroke-width="3.0"/><path d="M612.2 367.6A42.1 21 0 0 0 696.4 367.6" stroke="#0c44ff" stroke-opacity="0.19" stroke-width="3.0"/><path d="M601.5 367.6A52.8 26.4 0 0 1 707.1 367.6" stroke="#0c44ff" stroke-opacity="0.74" stroke-width="3.0"/><path d="M601.5 367.6A52.8 26.4 0 0 0 707.1 367.6" stroke="#0c44ff" stroke-opacity="0.13" stroke-width="3.0"/><path d="M590.8 367.6A63.5 31.7 0 0 1 717.8 367.6" stroke="#0c44ff" stroke-opacity="0.65" stroke-width="3.0"/><path d="M590.8 367.6A63.5 31.7 0 0 0 717.8 367.6" stroke="#0c44ff" stroke-opacity="0.07" stroke-width="3.0"/><path d="M580.1 367.6A74.2 37.1 0 0 1 728.5 367.6" stroke="#0830ff" stroke-opacity="0.56" stroke-width="3.0"/><path d="M580.1 367.6A74.2 37.1 0 0 0 728.5 367.6" stroke="#0830ff" stroke-opacity="0.03" stroke-width="3.0"/><path d="M569.4 367.6A84.9 42.4 0 0 1 739.2 367.6" stroke="#0830ff" stroke-opacity="0.47" stroke-width="3.0"/><path d="M569.4 367.6A84.9 42.4 0 0 0 739.2 367.6" stroke="#0830ff" stroke-opacity="0.02" stroke-width="3.0"/><path d="M558.7 367.6A95.6 47.8 0 0 1 749.9 367.6" stroke="#0830ff" stroke-opacity="0.38" stroke-width="3.0"/><path d="M558.7 367.6A95.6 47.8 0 0 0 749.9 367.6" stroke="#0830ff" stroke-opacity="0.02" stroke-width="3.0"/><path d="M548 367.6A106.3 53.1 0 0 1 760.6 367.6" stroke="#0830ff" stroke-opacity="0.30" stroke-width="3.0"/><path d="M548 367.6A106.3 53.1 0 0 0 760.6 367.6" stroke="#0830ff" stroke-opacity="0.01" stroke-width="3.0"/><path d="M537.3 367.6A117 58.5 0 0 1 771.3 367.6" stroke="#0830ff" stroke-opacity="0.21" stroke-width="3.0"/><path d="M537.3 367.6A117 58.5 0 0 0 771.3 367.6" stroke="#0830ff" stroke-opacity="0.01" stroke-width="3.0"/><path d="M526.6 367.6A127.7 63.8 0 0 1 782 367.6" stroke="#0830ff" stroke-opacity="0.12" stroke-width="3.0"/><path d="M526.6 367.6A127.7 63.8 0 0 0 782 367.6" stroke="#0830ff" stroke-opacity="0.00" stroke-width="3.0"/><path d="M515.9 367.6A138.4 69.2 0 0 1 792.7 367.6" stroke="#0830ff" stroke-opacity="0.06" stroke-width="3.0"/><path d="M515.9 367.6A138.4 69.2 0 0 0 792.7 367.6" stroke="#0830ff" stroke-opacity="0.00" stroke-width="3.0"/></g>
<path d="M639.1 362.8L666.8 362.8L757 682L715 682Z" fill="#0000ff" fill-opacity="0.07"/>
<path d="M645.5 362.8L660.3 362.8L744.4 671.7L722.2 671.7Z" fill="#0020ff" fill-opacity="0.16" filter="url(#bl1)"/>
</g>
<g fill="#0048f0" filter="url(#bl2)"><path d="M678.7 470L679.4 473L679.9 476L671.7 477.3L671.2 474.7L670.6 472Z" fill-opacity="0.08"/><path d="M680 476L680.4 479L680.7 482L672.3 482.7L672 480L671.7 477.3Z" fill-opacity="0.08"/><path d="M680.7 482L680.9 485.1L680.9 488.2L672.5 488.1L672.4 485.4L672.3 482.7Z" fill-opacity="0.08"/><path d="M681 488.2L680.9 491.3L680.6 494.4L672.2 493.6L672.4 490.8L672.5 488.1Z" fill-opacity="0.08"/><path d="M680.7 494.4L680.3 497.5L679.8 500.6L671.4 499.1L671.8 496.3L672.2 493.6Z" fill-opacity="0.08"/><path d="M679.8 500.6L679.2 503.7L678.4 506.8L670.1 504.5L670.8 501.8L671.4 499Z" fill-opacity="0.08"/><path d="M678.4 506.8L677.5 509.9L676.5 513L668.4 510L669.3 507.3L670.1 504.5Z" fill-opacity="0.08"/><path d="M676.5 513L675.3 516.1L673.9 519.1L666.1 515.5L667.3 512.8L668.3 510Z" fill-opacity="0.08"/><path d="M674 519.2L672.5 522.2L670.9 525.2L663.3 521L664.7 518.2L666 515.5Z" fill-opacity="0.08"/><path d="M670.9 525.2L669.1 528.2L667.2 531.2L659.9 526.4L661.6 523.7L663.2 520.9Z" fill-opacity="0.08"/><path d="M667.2 531.2L665.2 534.2L663 537.1L656.1 531.7L658 529L659.9 526.3Z" fill-opacity="0.08"/><path d="M663 537.1L660.7 540L658.3 542.8L651.7 536.9L653.9 534.3L656 531.7Z" fill-opacity="0.08"/><path d="M658.3 542.9L655.7 545.7L653 548.4L646.7 542.1L649.2 539.5L651.6 536.9Z" fill-opacity="0.08"/><path d="M653 548.5L650.1 551.2L647.2 553.9L641.3 547.1L644 544.6L646.7 542Z" fill-opacity="0.09"/><path d="M647.2 553.9L644.1 556.5L640.8 559.1L635.3 551.9L638.3 549.5L641.2 547Z" fill-opacity="0.09"/><path d="M640.8 559.1L637.5 561.6L634 564.1L628.8 556.5L632.1 554.2L635.3 551.9Z" fill-opacity="0.10"/><path d="M634 564.1L630.4 566.5L626.6 568.9L621.8 561L625.4 558.8L628.8 556.5Z" fill-opacity="0.11"/><path d="M626.6 568.9L622.8 571.2L618.8 573.4L614.4 565.2L618.2 563.1L621.8 561Z" fill-opacity="0.12"/><path d="M618.8 573.4L614.7 575.6L610.5 577.6L606.5 569.2L610.5 567.2L614.4 565.2Z" fill-opacity="0.13"/><path d="M610.6 577.7L606.2 579.7L601.8 581.6L598.2 572.9L602.4 571L606.5 569.1Z" fill-opacity="0.14"/><path d="M601.9 581.6L597.4 583.5L592.8 585.2L589.4 576.3L593.8 574.6L598.1 572.8Z" fill-opacity="0.15"/><path d="M592.8 585.3L588.1 587L583.3 588.5L580.4 579.4L584.9 577.8L589.4 576.2Z" fill-opacity="0.16"/><path d="M583.3 588.6L578.5 590.1L573.5 591.5L570.9 582.1L575.7 580.8L580.3 579.3Z" fill-opacity="0.17"/><path d="M573.5 591.5L568.5 592.9L563.4 594.1L561.2 584.6L566.1 583.4L570.9 582.1Z" fill-opacity="0.18"/><path d="M563.4 594.2L558.3 595.3L553.1 596.3L551.2 586.7L556.2 585.7L561.2 584.5Z" fill-opacity="0.18"/><path d="M553.1 596.4L547.8 597.3L542.5 598.2L541 588.4L546.1 587.6L551.2 586.6Z" fill-opacity="0.19"/><path d="M542.5 598.2L537.2 599L531.8 599.6L530.6 589.7L535.9 589.1L541 588.4Z" fill-opacity="0.20"/><path d="M531.8 599.6L526.3 600.2L520.9 600.7L520.1 590.7L525.4 590.3L530.6 589.7Z" fill-opacity="0.20"/><path d="M520.9 600.7L515.4 601L509.9 601.3L509.5 591.3L514.8 591L520.1 590.7Z" fill-opacity="0.20"/><path d="M509.9 601.3L504.4 601.4L498.9 601.5L498.9 591.5L504.2 591.4L509.5 591.3Z" fill-opacity="0.20"/><path d="M498.9 601.5L493.3 601.4L487.8 601.3L488.2 591.3L493.5 591.4L498.9 591.5Z" fill-opacity="0.20"/><path d="M487.8 601.3L482.3 601L476.8 600.7L477.6 590.7L482.9 591L488.2 591.3Z" fill-opacity="0.20"/><path d="M476.8 600.7L471.4 600.2L465.9 599.6L467 589.7L472.3 590.3L477.6 590.7Z" fill-opacity="0.20"/><path d="M465.9 599.6L460.5 599L455.1 598.2L456.6 588.4L461.8 589.1L467 589.7Z" fill-opacity="0.20"/><path d="M455.1 598.2L449.8 597.4L444.5 596.4L446.4 586.6L451.5 587.5L456.6 588.4Z" fill-opacity="0.20"/><path d="M444.5 596.4L439.3 595.3L434.1 594.2L436.4 584.5L441.4 585.6L446.4 586.6Z" fill-opacity="0.20"/><path d="M434.1 594.2L429 592.9L424 591.6L426.6 582L431.5 583.3L436.4 584.5Z" fill-opacity="0.20"/><path d="M424 591.6L419 590.2L414.1 588.7L417.2 579.2L421.9 580.7L426.6 582.1Z" fill-opacity="0.20"/><path d="M414.1 588.7L409.3 587.1L404.6 585.4L408 576.1L412.5 577.7L417.2 579.3Z" fill-opacity="0.20"/><path d="M404.6 585.4L400 583.6L395.4 581.8L399.3 572.7L403.6 574.4L408 576.1Z" fill-opacity="0.20"/><path d="M395.5 581.8L391 579.8L386.7 577.8L390.9 569L395 570.9L399.2 572.7Z" fill-opacity="0.20"/><path d="M386.7 577.8L382.4 575.8L378.3 573.6L382.9 565L386.8 567L390.9 569Z" fill-opacity="0.20"/><path d="M378.3 573.6L374.3 571.4L370.4 569.1L375.4 560.8L379.1 562.9L382.9 565Z" fill-opacity="0.20"/><path d="M370.4 569.1L366.6 566.7L362.9 564.3L368.4 556.3L371.8 558.6L375.4 560.8Z" fill-opacity="0.20"/><path d="M363 564.3L359.4 561.9L356 559.3L361.8 551.6L365 554L368.4 556.3Z" fill-opacity="0.20"/><path d="M356 559.3L352.7 556.7L349.5 554.1L355.8 546.8L358.7 549.2L361.8 551.7Z" fill-opacity="0.20"/><path d="M349.5 554.1L346.5 551.4L343.6 548.7L350.2 541.8L352.9 544.3L355.8 546.8Z" fill-opacity="0.20"/><path d="M343.6 548.7L340.8 545.9L338.2 543.1L345.2 536.7L347.6 539.3L350.2 541.8Z" fill-opacity="0.20"/><path d="M338.2 543.1L335.7 540.2L333.3 537.3L340.7 531.4L342.9 534.1L345.2 536.7Z" fill-opacity="0.20"/><path d="M333.3 537.3L331.1 534.4L329 531.5L336.8 526.1L338.7 528.8L340.7 531.5Z" fill-opacity="0.20"/><path d="M329 531.4L327 528.5L325.2 525.4L333.3 520.7L335 523.4L336.8 526.1Z" fill-opacity="0.20"/><path d="M325.2 525.4L323.6 522.4L322 519.3L330.4 515.3L331.8 518L333.3 520.8Z" fill-opacity="0.20"/><path d="M322 519.3L320.6 516.3L319.4 513.2L328.1 509.8L329.2 512.6L330.4 515.3Z" fill-opacity="0.20"/><path d="M319.4 513.2L318.3 510.1L317.3 507L326.2 504.4L327 507.1L328 509.9Z" fill-opacity="0.20"/><path d="M317.3 507L316.5 503.8L315.8 500.7L324.8 498.9L325.4 501.6L326.2 504.4Z" fill-opacity="0.20"/><path d="M315.8 500.7L315.3 497.6L314.9 494.5L323.9 493.5L324.3 496.2L324.8 498.9Z" fill-opacity="0.20"/><path d="M314.9 494.5L314.6 491.4L314.4 488.3L323.5 488L323.7 490.7L323.9 493.5Z" fill-opacity="0.20"/><path d="M314.5 488.3L314.5 485.2L314.6 482.1L323.6 482.7L323.5 485.3L323.5 488Z" fill-opacity="0.20"/><path d="M314.6 482.1L314.9 479L315.2 476L324.1 477.3L323.8 480L323.6 482.7Z" fill-opacity="0.20"/><path d="M315.3 476L315.8 473L316.4 470L325.1 472L324.5 474.7L324.1 477.3Z" fill-opacity="0.20"/><path d="M316.4 470L317.2 467L318.1 464.1L326.5 466.8L325.7 469.4L325.1 472Z" fill-opacity="0.20"/><path d="M318.1 464.1L319.1 461.2L320.2 458.3L328.4 461.7L327.4 464.2L326.5 466.8Z" fill-opacity="0.20"/><path d="M320.2 458.3L321.4 455.5L322.8 452.7L330.6 456.6L329.4 459.1L328.3 461.6Z" fill-opacity="0.20"/><path d="M322.8 452.7L324.2 449.9L325.8 447.2L333.3 451.6L331.9 454.1L330.6 456.6Z" fill-opacity="0.20"/><path d="M325.8 447.2L327.4 444.5L329.2 441.9L336.4 446.8L334.8 449.2L333.3 451.6Z" fill-opacity="0.20"/><path d="M329.2 441.9L331 439.3L333 436.7L339.8 442L338 444.4L336.3 446.8Z" fill-opacity="0.20"/><path d="M333 436.7L335 434.2L337.2 431.7L343.6 437.4L341.7 439.7L339.8 442Z" fill-opacity="0.20"/><path d="M337.2 431.7L339.4 429.3L341.7 426.9L347.8 432.9L345.7 435.1L343.6 437.4Z" fill-opacity="0.20"/><path d="M341.7 426.9L344.1 424.6L346.6 422.3L352.3 428.6L350 430.7L347.8 432.9Z" fill-opacity="0.20"/><path d="M346.6 422.3L349.1 420L351.8 417.8L357.1 424.4L354.7 426.5L352.3 428.6Z" fill-opacity="0.19"/><path d="M351.8 417.9L354.5 415.7L357.3 413.6L362.3 420.4L359.6 422.4L357.1 424.4Z" fill-opacity="0.19"/><path d="M357.3 413.6L360.1 411.6L363 409.6L367.7 416.5L364.9 418.4L362.2 420.4Z" fill-opacity="0.18"/><path d="M363 409.6L366 407.7L369.1 405.8L373.4 412.9L370.5 414.7L367.7 416.5Z" fill-opacity="0.18"/><path d="M369.1 405.8L372.2 403.9L375.3 402.1L379.3 409.4L376.3 411.1L373.4 412.8Z" fill-opacity="0.18"/><path d="M375.3 402.2L378.6 400.4L381.8 398.7L385.5 406.1L382.4 407.7L379.3 409.3Z" fill-opacity="0.17"/><path d="M381.8 398.7L385.2 397.1L388.5 395.5L391.9 403L388.7 404.5L385.5 406Z" fill-opacity="0.17"/><path d="M388.6 395.5L392 394L395.5 392.5L398.6 400.1L395.2 401.5L391.9 402.9Z" fill-opacity="0.17"/><path d="M395.5 392.5L399 391.1L402.6 389.8L405.4 397.4L402 398.7L398.6 400Z" fill-opacity="0.16"/><path d="M402.6 389.8L406.2 388.5L409.8 387.2L412.4 394.9L408.9 396.1L405.4 397.3Z" fill-opacity="0.16"/><path d="M409.8 387.2L413.5 386L417.3 384.9L419.6 392.6L416 393.7L412.4 394.8Z" fill-opacity="0.16"/><path d="M417.3 384.9L421 383.8L424.8 382.7L426.9 390.5L423.2 391.5L419.6 392.6Z" fill-opacity="0.16"/><path d="M424.8 382.7L428.6 381.8L432.5 380.8L434.3 388.6L430.6 389.5L426.9 390.5Z" fill-opacity="0.16"/><path d="M432.5 380.8L436.4 380L440.3 379.1L441.9 387L438.1 387.8L434.3 388.6Z" fill-opacity="0.16"/><path d="M440.3 379.1L444.2 378.4L448.2 377.7L449.5 385.6L445.7 386.2L441.9 387Z" fill-opacity="0.16"/><path d="M448.2 377.7L452.2 377L456.2 376.4L457.3 384.3L453.4 384.9L449.5 385.6Z" fill-opacity="0.16"/><path d="M456.2 376.4L460.2 375.9L464.2 375.4L465.1 383.4L461.2 383.8L457.3 384.3Z" fill-opacity="0.16"/><path d="M464.2 375.4L468.3 375L472.3 374.6L473 382.6L469 382.9L465.1 383.3Z" fill-opacity="0.16"/><path d="M472.3 374.6L476.4 374.3L480.5 374.1L480.9 382L476.9 382.3L473 382.6Z" fill-opacity="0.16"/><path d="M480.5 374.1L484.5 373.9L488.6 373.7L488.9 381.7L484.9 381.8L480.9 382Z" fill-opacity="0.16"/><path d="M488.6 373.7L492.7 373.7L496.8 373.6L496.8 381.6L492.8 381.6L488.9 381.7Z" fill-opacity="0.16"/><path d="M496.8 373.6L500.9 373.7L505 373.7L504.8 381.7L500.8 381.6L496.8 381.6Z" fill-opacity="0.16"/><path d="M505 373.7L509.1 373.9L513.2 374.1L512.7 382L508.8 381.8L504.8 381.7Z" fill-opacity="0.16"/><path d="M513.2 374.1L517.3 374.3L521.3 374.6L520.7 382.6L516.7 382.3L512.7 382Z" fill-opacity="0.16"/><path d="M521.3 374.6L525.4 375L529.5 375.4L528.6 383.3L524.6 382.9L520.7 382.6Z" fill-opacity="0.16"/><path d="M529.5 375.4L533.5 375.9L537.5 376.4L536.4 384.3L532.5 383.8L528.6 383.4Z" fill-opacity="0.16"/><path d="M537.5 376.4L541.5 377L545.5 377.7L544.2 385.6L540.3 384.9L536.4 384.3Z" fill-opacity="0.16"/><path d="M545.5 377.7L549.5 378.4L553.4 379.1L551.9 387L548 386.2L544.2 385.6Z" fill-opacity="0.16"/><path d="M553.4 379.1L557.4 380L561.3 380.8L559.5 388.6L555.7 387.8L551.9 387Z" fill-opacity="0.16"/><path d="M561.3 380.8L565.1 381.8L569 382.7L566.9 390.5L563.2 389.5L559.5 388.6Z" fill-opacity="0.16"/><path d="M569 382.8L572.8 383.8L576.6 384.9L574.3 392.5L570.6 391.5L566.9 390.5Z" fill-opacity="0.15"/><path d="M576.6 384.9L580.3 386L584 387.2L581.5 394.8L577.9 393.6L574.3 392.5Z" fill-opacity="0.14"/><path d="M584 387.3L587.7 388.5L591.3 389.8L588.6 397.3L585.1 396L581.5 394.8Z" fill-opacity="0.13"/><path d="M591.3 389.8L594.9 391.2L598.5 392.6L595.5 400L592 398.6L588.6 397.3Z" fill-opacity="0.12"/><path d="M598.5 392.6L602 394.1L605.4 395.6L602.2 402.8L598.8 401.4L595.5 400Z" fill-opacity="0.11"/><path d="M605.4 395.6L608.8 397.2L612.2 398.9L608.7 405.9L605.4 404.4L602.2 402.8Z" fill-opacity="0.10"/><path d="M612.2 398.9L615.5 400.5L618.7 402.3L614.9 409.2L611.8 407.6L608.7 405.9Z" fill-opacity="0.09"/><path d="M618.7 402.3L621.9 404.1L625.1 405.9L621 412.7L618 410.9L614.9 409.2Z" fill-opacity="0.09"/><path d="M625.1 405.9L628.1 407.8L631.1 409.8L626.8 416.4L623.9 414.5L621 412.7Z" fill-opacity="0.08"/><path d="M631.1 409.7L634.1 411.7L637 413.8L632.3 420.2L629.5 418.3L626.8 416.4Z" fill-opacity="0.08"/><path d="M637 413.8L639.8 415.9L642.5 418L637.5 424.2L634.9 422.2L632.3 420.2Z" fill-opacity="0.08"/><path d="M642.5 418L645.2 420.2L647.7 422.4L642.4 428.4L640 426.3L637.5 424.2Z" fill-opacity="0.08"/><path d="M647.8 422.4L650.3 424.7L652.7 427.1L647 432.8L644.8 430.6L642.4 428.4Z" fill-opacity="0.08"/><path d="M652.7 427L655 429.4L657.3 431.8L651.3 437.2L649.2 435L647 432.8Z" fill-opacity="0.08"/><path d="M657.3 431.8L659.5 434.3L661.5 436.8L655.2 441.9L653.3 439.6L651.3 437.3Z" fill-opacity="0.08"/><path d="M661.6 436.8L663.5 439.4L665.4 442L658.8 446.6L657 444.3L655.2 441.9Z" fill-opacity="0.08"/><path d="M665.4 442L667.2 444.6L668.9 447.3L662 451.5L660.4 449.1L658.8 446.7Z" fill-opacity="0.08"/><path d="M669 447.3L670.5 450L672 452.8L664.7 456.5L663.4 454L661.9 451.5Z" fill-opacity="0.08"/><path d="M672 452.7L673.4 455.5L674.7 458.4L667.1 461.6L666 459.1L664.7 456.5Z" fill-opacity="0.08"/><path d="M674.7 458.4L675.9 461.2L676.9 464.1L669.1 466.8L668.1 464.2L667.1 461.6Z" fill-opacity="0.08"/><path d="M676.9 464.1L677.9 467L678.7 470L670.6 472L669.9 469.4L669 466.8Z" fill-opacity="0.08"/></g>
<g shape-rendering="crispEdges" fill="#30d0d0"><path d="M677.2 470.4L677.9 473.3L678.5 476.2L673.2 477.1L672.6 474.4L672 471.7Z" fill-opacity="0.02"/><path d="M678.5 476.2L678.9 479.2L679.2 482.2L673.8 482.6L673.5 479.8L673.1 477.1Z" fill-opacity="0.02"/><path d="M679.2 482.2L679.4 485.2L679.4 488.2L674 488.1L673.9 485.4L673.8 482.6Z" fill-opacity="0.02"/><path d="M679.5 488.2L679.4 491.2L679.2 494.2L673.7 493.7L673.9 490.9L674 488.1Z" fill-opacity="0.02"/><path d="M679.2 494.2L678.8 497.3L678.3 500.3L672.9 499.3L673.3 496.5L673.7 493.7Z" fill-opacity="0.02"/><path d="M678.4 500.3L677.7 503.4L677 506.4L671.6 504.9L672.3 502.1L672.9 499.3Z" fill-opacity="0.02"/><path d="M677 506.4L676.1 509.5L675.1 512.5L669.8 510.5L670.7 507.7L671.6 504.9Z" fill-opacity="0.02"/><path d="M675.1 512.5L673.9 515.5L672.6 518.5L667.4 516.1L668.6 513.3L669.7 510.5Z" fill-opacity="0.02"/><path d="M672.6 518.5L671.2 521.5L669.6 524.5L664.6 521.7L666.1 518.9L667.4 516.1Z" fill-opacity="0.02"/><path d="M669.6 524.5L667.8 527.5L666 530.4L661.2 527.2L662.9 524.4L664.5 521.7Z" fill-opacity="0.02"/><path d="M666 530.4L664 533.3L661.8 536.2L657.2 532.6L659.3 529.9L661.1 527.2Z" fill-opacity="0.02"/><path d="M661.9 536.2L659.6 539L657.2 541.8L652.8 537.9L655.1 535.3L657.2 532.6Z" fill-opacity="0.02"/><path d="M657.2 541.9L654.6 544.6L651.9 547.4L647.8 543.1L650.3 540.5L652.7 537.9Z" fill-opacity="0.03"/><path d="M652 547.4L649.1 550.1L646.2 552.7L642.2 548.2L645.1 545.7L647.7 543.1Z" fill-opacity="0.03"/><path d="M646.2 552.7L643.1 555.3L639.9 557.9L636.2 553.1L639.3 550.6L642.2 548.2Z" fill-opacity="0.04"/><path d="M639.9 557.9L636.6 560.4L633.1 562.9L629.6 557.8L633 555.4L636.2 553.1Z" fill-opacity="0.05"/><path d="M633.1 562.9L629.5 565.3L625.8 567.6L622.6 562.3L626.2 560L629.6 557.8Z" fill-opacity="0.06"/><path d="M625.9 567.6L622 569.9L618.1 572.1L615.1 566.5L618.9 564.4L622.6 562.2Z" fill-opacity="0.07"/><path d="M618.1 572.1L614 574.2L609.9 576.3L607.1 570.5L611.2 568.5L615.1 566.5Z" fill-opacity="0.09"/><path d="M609.9 576.3L605.6 578.3L601.3 580.2L598.7 574.3L603 572.4L607.1 570.5Z" fill-opacity="0.12"/><path d="M601.3 580.2L596.8 582.1L592.2 583.8L590 577.7L594.4 576L598.7 574.2Z" fill-opacity="0.15"/><path d="M592.3 583.9L587.6 585.5L582.8 587.1L580.8 580.8L585.4 579.3L589.9 577.6Z" fill-opacity="0.18"/><path d="M582.9 587.2L578 588.7L573.1 590.1L571.3 583.6L576.1 582.2L580.8 580.8Z" fill-opacity="0.22"/><path d="M573.1 590.1L568.1 591.4L563.1 592.7L561.5 586L566.5 584.8L571.3 583.6Z" fill-opacity="0.26"/><path d="M563.1 592.7L558 593.8L552.8 594.9L551.5 588.1L556.6 587.1L561.5 586Z" fill-opacity="0.30"/><path d="M552.8 594.9L547.6 595.8L542.3 596.7L541.2 589.9L546.4 589L551.5 588.1Z" fill-opacity="0.33"/><path d="M542.3 596.7L537 597.5L531.6 598.1L530.8 591.2L536 590.6L541.2 589.8Z" fill-opacity="0.36"/><path d="M531.6 598.1L526.2 598.7L520.8 599.2L520.2 592.2L525.5 591.8L530.8 591.2Z" fill-opacity="0.38"/><path d="M520.8 599.2L515.3 599.5L509.8 599.8L509.6 592.8L514.9 592.5L520.2 592.2Z" fill-opacity="0.38"/><path d="M509.8 599.8L504.3 599.9L498.9 600L498.9 593L504.2 592.9L509.6 592.8Z" fill-opacity="0.38"/><path d="M498.9 600L493.4 599.9L487.9 599.8L488.1 592.8L493.5 592.9L498.9 593Z" fill-opacity="0.38"/><path d="M487.9 599.8L482.4 599.5L476.9 599.2L477.5 592.2L482.8 592.5L488.1 592.8Z" fill-opacity="0.38"/><path d="M476.9 599.2L471.5 598.7L466.1 598.2L466.9 591.2L472.1 591.7L477.5 592.2Z" fill-opacity="0.38"/><path d="M466.1 598.1L460.7 597.5L455.4 596.7L456.4 589.8L461.6 590.6L466.9 591.2Z" fill-opacity="0.38"/><path d="M455.4 596.7L450.1 595.9L444.8 594.9L446.1 588.1L451.2 589L456.4 589.8Z" fill-opacity="0.38"/><path d="M444.8 594.9L439.6 593.9L434.5 592.7L436 586L441 587.1L446.1 588.1Z" fill-opacity="0.38"/><path d="M434.5 592.7L429.4 591.5L424.4 590.2L426.2 583.5L431.1 584.8L436 586Z" fill-opacity="0.38"/><path d="M424.4 590.2L419.5 588.7L414.6 587.2L416.7 580.7L421.4 582.1L426.2 583.5Z" fill-opacity="0.38"/><path d="M414.6 587.2L409.8 585.7L405.1 584L407.5 577.5L412.1 579.1L416.7 580.7Z" fill-opacity="0.38"/><path d="M405.1 584L400.5 582.2L396 580.4L398.7 574.1L403 575.8L407.5 577.5Z" fill-opacity="0.38"/><path d="M396 580.4L391.6 578.5L387.3 576.5L390.2 570.3L394.4 572.2L398.7 574.1Z" fill-opacity="0.38"/><path d="M387.3 576.5L383.1 574.4L379 572.3L382.2 566.3L386.2 568.4L390.2 570.3Z" fill-opacity="0.38"/><path d="M379 572.3L375 570.1L371.2 567.8L374.6 562L378.4 564.2L382.2 566.3Z" fill-opacity="0.38"/><path d="M371.2 567.8L367.4 565.5L363.8 563.1L367.5 557.5L371 559.8L374.6 562.1Z" fill-opacity="0.38"/><path d="M363.8 563.1L360.3 560.6L356.9 558.1L360.9 552.8L364.2 555.2L367.5 557.6Z" fill-opacity="0.38"/><path d="M356.9 558.1L353.6 555.6L350.5 553L354.8 547.9L357.8 550.4L360.9 552.8Z" fill-opacity="0.38"/><path d="M350.5 553L347.5 550.3L344.6 547.6L349.2 542.9L351.9 545.4L354.8 548Z" fill-opacity="0.38"/><path d="M344.6 547.6L341.9 544.9L339.3 542.1L344.1 537.7L346.6 540.3L349.2 542.9Z" fill-opacity="0.38"/><path d="M339.3 542.1L336.8 539.3L334.5 536.4L339.6 532.4L341.8 535.1L344.1 537.7Z" fill-opacity="0.38"/><path d="M334.5 536.4L332.3 533.5L330.2 530.6L335.5 527L337.5 529.7L339.5 532.4Z" fill-opacity="0.38"/><path d="M330.2 530.6L328.3 527.7L326.5 524.7L332 521.5L333.7 524.2L335.5 527Z" fill-opacity="0.38"/><path d="M326.5 524.7L324.9 521.7L323.4 518.7L329.1 516L330.5 518.7L332 521.5Z" fill-opacity="0.38"/><path d="M323.4 518.7L322 515.7L320.8 512.6L326.7 510.4L327.8 513.2L329.1 516Z" fill-opacity="0.38"/><path d="M320.8 512.6L319.7 509.6L318.8 506.5L324.7 504.8L325.6 507.6L326.6 510.4Z" fill-opacity="0.38"/><path d="M318.8 506.5L318 503.5L317.3 500.4L323.3 499.2L324 502L324.7 504.8Z" fill-opacity="0.38"/><path d="M317.3 500.4L316.8 497.4L316.3 494.3L322.4 493.6L322.8 496.4L323.3 499.2Z" fill-opacity="0.38"/><path d="M316.4 494.3L316.1 491.3L315.9 488.2L322 488.1L322.2 490.9L322.4 493.6Z" fill-opacity="0.38"/><path d="M316 488.2L316 485.2L316.1 482.2L322.1 482.6L322 485.3L322 488.1Z" fill-opacity="0.38"/><path d="M316.1 482.2L316.3 479.2L316.7 476.2L322.6 477.1L322.3 479.8L322.1 482.6Z" fill-opacity="0.38"/><path d="M316.7 476.2L317.2 473.3L317.9 470.3L323.6 471.7L323.1 474.4L322.6 477.1Z" fill-opacity="0.38"/><path d="M317.9 470.3L318.6 467.4L319.5 464.6L325.1 466.3L324.3 469L323.6 471.7Z" fill-opacity="0.38"/><path d="M319.5 464.6L320.5 461.7L321.6 458.9L327 461.1L326 463.7L325.1 466.3Z" fill-opacity="0.38"/><path d="M321.6 458.9L322.8 456.1L324.1 453.3L329.3 455.9L328.1 458.5L326.9 461.1Z" fill-opacity="0.38"/><path d="M324.1 453.4L325.5 450.6L327.1 447.9L332 450.9L330.6 453.4L329.3 455.9Z" fill-opacity="0.38"/><path d="M327.1 448L328.7 445.3L330.4 442.7L335.1 445.9L333.5 448.4L332 450.9Z" fill-opacity="0.38"/><path d="M330.4 442.7L332.3 440.1L334.2 437.6L338.6 441.1L336.8 443.5L335.1 445.9Z" fill-opacity="0.38"/><path d="M334.2 437.6L336.2 435.1L338.3 432.7L342.5 436.4L340.5 438.7L338.6 441.1Z" fill-opacity="0.38"/><path d="M338.3 432.7L340.5 430.3L342.8 427.9L346.7 431.9L344.6 434.1L342.5 436.4Z" fill-opacity="0.37"/><path d="M342.8 428L345.2 425.6L347.6 423.4L351.3 427.5L349 429.6L346.7 431.8Z" fill-opacity="0.35"/><path d="M347.6 423.4L350.1 421.2L352.7 419L356.2 423.2L353.7 425.3L351.3 427.4Z" fill-opacity="0.33"/><path d="M352.7 419L355.4 416.9L358.1 414.8L361.4 419.2L358.7 421.2L356.2 423.2Z" fill-opacity="0.31"/><path d="M358.2 414.8L361 412.8L363.9 410.8L366.8 415.3L364.1 417.2L361.3 419.1Z" fill-opacity="0.29"/><path d="M363.9 410.9L366.8 408.9L369.8 407L372.6 411.6L369.7 413.4L366.8 415.3Z" fill-opacity="0.27"/><path d="M369.8 407.1L372.9 405.2L376.1 403.5L378.6 408.1L375.6 409.8L372.6 411.6Z" fill-opacity="0.26"/><path d="M376.1 403.5L379.3 401.7L382.5 400.1L384.9 404.7L381.7 406.4L378.6 408Z" fill-opacity="0.24"/><path d="M382.5 400.1L385.8 398.5L389.2 396.9L391.3 401.6L388.1 403.1L384.8 404.7Z" fill-opacity="0.23"/><path d="M389.2 396.9L392.6 395.4L396 393.9L398 398.7L394.6 400.1L391.3 401.6Z" fill-opacity="0.22"/><path d="M396 393.9L399.5 392.5L403.1 391.2L404.9 395.9L401.4 397.3L398 398.7Z" fill-opacity="0.21"/><path d="M403.1 391.2L406.7 389.9L410.3 388.6L411.9 393.4L408.4 394.7L404.9 395.9Z" fill-opacity="0.20"/><path d="M410.3 388.6L414 387.4L417.7 386.3L419.1 391.1L415.5 392.3L411.9 393.4Z" fill-opacity="0.20"/><path d="M417.7 386.3L421.4 385.2L425.2 384.2L426.5 389L422.8 390.1L419.1 391.1Z" fill-opacity="0.20"/><path d="M425.2 384.2L429 383.2L432.8 382.3L434 387.2L430.2 388.1L426.5 389Z" fill-opacity="0.19"/><path d="M432.8 382.3L436.7 381.4L440.6 380.6L441.6 385.5L437.8 386.3L434 387.2Z" fill-opacity="0.19"/><path d="M440.6 380.6L444.5 379.9L448.4 379.2L449.3 384.1L445.4 384.8L441.6 385.5Z" fill-opacity="0.19"/><path d="M448.4 379.2L452.4 378.5L456.4 377.9L457.1 382.9L453.2 383.4L449.3 384.1Z" fill-opacity="0.19"/><path d="M456.4 377.9L460.4 377.4L464.4 376.9L464.9 381.9L461 382.3L457.1 382.9Z" fill-opacity="0.19"/><path d="M464.4 376.9L468.4 376.5L472.4 376.1L472.9 381.1L468.9 381.4L464.9 381.9Z" fill-opacity="0.19"/><path d="M472.4 376.1L476.5 375.8L480.5 375.6L480.8 380.5L476.8 380.8L472.9 381.1Z" fill-opacity="0.19"/><path d="M480.5 375.6L484.6 375.4L488.7 375.2L488.8 380.2L484.8 380.3L480.8 380.5Z" fill-opacity="0.19"/><path d="M488.7 375.2L492.7 375.2L496.8 375.1L496.8 380.1L492.8 380.1L488.8 380.2Z" fill-opacity="0.19"/><path d="M496.8 375.1L500.9 375.2L505 375.2L504.8 380.2L500.8 380.1L496.8 380.1Z" fill-opacity="0.19"/><path d="M505 375.2L509 375.4L513.1 375.6L512.8 380.5L508.8 380.3L504.8 380.2Z" fill-opacity="0.19"/><path d="M513.1 375.6L517.2 375.8L521.2 376.1L520.8 381.1L516.8 380.8L512.8 380.5Z" fill-opacity="0.19"/><path d="M521.2 376.1L525.3 376.5L529.3 376.9L528.7 381.9L524.8 381.4L520.8 381.1Z" fill-opacity="0.19"/><path d="M529.3 376.9L533.3 377.4L537.3 377.9L536.6 382.9L532.7 382.3L528.7 381.9Z" fill-opacity="0.19"/><path d="M537.3 377.9L541.3 378.5L545.3 379.2L544.4 384.1L540.5 383.4L536.6 382.9Z" fill-opacity="0.19"/><path d="M545.3 379.2L549.2 379.9L553.1 380.6L552.2 385.5L548.3 384.8L544.4 384.1Z" fill-opacity="0.19"/><path d="M553.1 380.6L557 381.4L560.9 382.3L559.8 387.2L556 386.3L552.2 385.5Z" fill-opacity="0.19"/><path d="M560.9 382.3L564.8 383.2L568.6 384.2L567.3 389L563.6 388.1L559.8 387.2Z" fill-opacity="0.18"/><path d="M568.6 384.2L572.4 385.2L576.1 386.3L574.7 391.1L571 390L567.3 389Z" fill-opacity="0.15"/><path d="M576.1 386.3L579.9 387.5L583.6 388.7L582 393.4L578.4 392.2L574.7 391.1Z" fill-opacity="0.12"/><path d="M583.5 388.7L587.2 389.9L590.8 391.2L589.1 395.9L585.6 394.6L582 393.4Z" fill-opacity="0.09"/><path d="M590.8 391.2L594.4 392.6L597.9 394L596 398.6L592.6 397.2L589.1 395.9Z" fill-opacity="0.07"/><path d="M597.9 394L601.4 395.5L604.8 397L602.8 401.5L599.4 400L596 398.6Z" fill-opacity="0.06"/><path d="M604.8 397L608.2 398.6L611.5 400.2L609.3 404.6L606.1 403L602.8 401.5Z" fill-opacity="0.05"/><path d="M611.5 400.2L614.8 401.9L618 403.6L615.7 407.9L612.5 406.2L609.3 404.6Z" fill-opacity="0.04"/><path d="M618 403.6L621.2 405.4L624.3 407.2L621.7 411.4L618.7 409.6L615.7 407.9Z" fill-opacity="0.03"/><path d="M624.3 407.2L627.3 409.1L630.3 411L627.6 415.1L624.7 413.2L621.7 411.4Z" fill-opacity="0.03"/><path d="M630.3 411L633.2 413L636.1 415L633.2 419L630.4 417L627.6 415.1Z" fill-opacity="0.02"/><path d="M636.1 415L638.9 417.1L641.6 419.2L638.4 423.1L635.8 421L633.2 419Z" fill-opacity="0.02"/><path d="M641.6 419.2L644.2 421.3L646.7 423.6L643.4 427.3L641 425.2L638.4 423.1Z" fill-opacity="0.02"/><path d="M646.8 423.5L649.2 425.8L651.6 428.1L648.1 431.7L645.8 429.5L643.4 427.3Z" fill-opacity="0.02"/><path d="M651.6 428.1L653.9 430.5L656.2 432.9L652.4 436.2L650.3 434L648.1 431.7Z" fill-opacity="0.02"/><path d="M656.2 432.8L658.3 435.3L660.4 437.8L656.4 440.9L654.4 438.6L652.4 436.3Z" fill-opacity="0.02"/><path d="M660.4 437.7L662.3 440.3L664.2 442.8L660 445.8L658.2 443.4L656.4 441Z" fill-opacity="0.02"/><path d="M664.2 442.8L666 445.4L667.7 448.1L663.2 450.7L661.7 448.3L660 445.8Z" fill-opacity="0.02"/><path d="M667.7 448.1L669.2 450.7L670.7 453.4L666.1 455.8L664.7 453.3L663.2 450.8Z" fill-opacity="0.02"/><path d="M670.7 453.4L672.1 456.2L673.3 459L668.5 461L667.3 458.4L666.1 455.8Z" fill-opacity="0.02"/><path d="M673.3 458.9L674.5 461.8L675.5 464.6L670.5 466.3L669.5 463.6L668.5 461Z" fill-opacity="0.02"/><path d="M675.5 464.6L676.4 467.5L677.2 470.4L672 471.7L671.3 469L670.5 466.3Z" fill-opacity="0.02"/></g>
<g shape-rendering="crispEdges" fill="#c89414"><path d="M676.4 470.6L677 473.5L677.6 476.4L674 476.9L673.5 474.2L672.9 471.4Z" fill-opacity="0.15"/><path d="M677.6 476.4L678 479.3L678.3 482.2L674.7 482.5L674.4 479.7L674 477Z" fill-opacity="0.15"/><path d="M678.3 482.2L678.5 485.2L678.5 488.2L674.9 488.1L674.8 485.3L674.7 482.5Z" fill-opacity="0.15"/><path d="M678.6 488.2L678.5 491.2L678.3 494.1L674.6 493.8L674.8 491L674.9 488.1Z" fill-opacity="0.15"/><path d="M678.3 494.2L677.9 497.2L677.4 500.2L673.8 499.5L674.2 496.6L674.5 493.8Z" fill-opacity="0.15"/><path d="M677.5 500.2L676.9 503.2L676.1 506.2L672.4 505.2L673.2 502.3L673.7 499.5Z" fill-opacity="0.15"/><path d="M676.1 506.2L675.2 509.2L674.2 512.2L670.6 510.9L671.6 508L672.4 505.2Z" fill-opacity="0.15"/><path d="M674.2 512.2L673.1 515.2L671.8 518.1L668.2 516.5L669.5 513.7L670.6 510.8Z" fill-opacity="0.15"/><path d="M671.8 518.2L670.3 521.1L668.8 524.1L665.3 522.1L666.9 519.3L668.2 516.5Z" fill-opacity="0.15"/><path d="M668.8 524.1L667.1 527L665.2 529.9L661.9 527.7L663.7 524.9L665.3 522.1Z" fill-opacity="0.16"/><path d="M665.2 529.9L663.3 532.8L661.1 535.6L657.9 533.2L660 530.4L661.9 527.7Z" fill-opacity="0.16"/><path d="M661.2 535.6L658.9 538.5L656.5 541.2L653.4 538.5L655.8 535.9L657.9 533.1Z" fill-opacity="0.17"/><path d="M656.5 541.3L654 544L651.3 546.7L648.4 543.8L651 541.2L653.4 538.5Z" fill-opacity="0.18"/><path d="M651.3 546.7L648.5 549.4L645.6 552L642.8 548.9L645.7 546.3L648.4 543.8Z" fill-opacity="0.20"/><path d="M645.6 552.1L642.5 554.6L639.3 557.2L636.7 553.8L639.8 551.3L642.8 548.8Z" fill-opacity="0.22"/><path d="M639.4 557.2L636 559.7L632.6 562.1L630.2 558.5L633.5 556.2L636.7 553.8Z" fill-opacity="0.24"/><path d="M632.6 562.1L629.1 564.5L625.4 566.8L623.1 563L626.7 560.8L630.1 558.5Z" fill-opacity="0.27"/><path d="M625.4 566.9L621.6 569.1L617.7 571.3L615.5 567.3L619.3 565.2L623.1 563Z" fill-opacity="0.30"/><path d="M617.7 571.3L613.6 573.4L609.5 575.5L607.5 571.3L611.6 569.3L615.5 567.3Z" fill-opacity="0.33"/><path d="M609.5 575.5L605.3 577.5L600.9 579.4L599.1 575.1L603.4 573.2L607.5 571.3Z" fill-opacity="0.37"/><path d="M600.9 579.4L596.5 581.2L591.9 583L590.3 578.5L594.7 576.8L599.1 575Z" fill-opacity="0.40"/><path d="M591.9 583L587.3 584.7L582.6 586.3L581.1 581.7L585.7 580.1L590.3 578.5Z" fill-opacity="0.44"/><path d="M582.6 586.3L577.8 587.8L572.9 589.2L571.6 584.5L576.4 583.1L581.1 581.6Z" fill-opacity="0.48"/><path d="M572.9 589.2L567.9 590.6L562.9 591.8L561.8 586.9L566.7 585.7L571.6 584.4Z" fill-opacity="0.51"/><path d="M562.9 591.8L557.8 592.9L552.6 594L551.7 589L556.7 588L561.7 586.9Z" fill-opacity="0.54"/><path d="M552.6 594L547.4 595L542.1 595.8L541.4 590.8L546.6 589.9L551.7 589Z" fill-opacity="0.57"/><path d="M542.2 595.8L536.8 596.6L531.5 597.2L530.9 592.1L536.2 591.5L541.4 590.7Z" fill-opacity="0.59"/><path d="M531.5 597.3L526.1 597.8L520.7 598.3L520.3 593.1L525.6 592.6L530.9 592.1Z" fill-opacity="0.60"/><path d="M520.7 598.3L515.3 598.6L509.8 598.9L509.6 593.7L515 593.4L520.3 593.1Z" fill-opacity="0.60"/><path d="M509.8 598.9L504.3 599L498.9 599.1L498.9 593.9L504.2 593.8L509.6 593.7Z" fill-opacity="0.60"/><path d="M498.9 599.1L493.4 599L487.9 598.9L488.1 593.7L493.5 593.8L498.9 593.9Z" fill-opacity="0.60"/><path d="M487.9 598.9L482.4 598.6L477 598.3L477.4 593.1L482.7 593.4L488.1 593.7Z" fill-opacity="0.60"/><path d="M477 598.3L471.6 597.8L466.2 597.3L466.8 592.1L472.1 592.6L477.4 593.1Z" fill-opacity="0.60"/><path d="M466.2 597.3L460.8 596.6L455.5 595.8L456.3 590.7L461.5 591.5L466.8 592.1Z" fill-opacity="0.60"/><path d="M455.5 595.8L450.2 595L445 594L445.9 589L451.1 589.9L456.3 590.7Z" fill-opacity="0.60"/><path d="M445 594L439.8 593L434.7 591.9L435.8 586.8L440.9 588L445.9 589Z" fill-opacity="0.60"/><path d="M434.7 591.8L429.6 590.6L424.6 589.3L426 584.4L430.9 585.6L435.8 586.9Z" fill-opacity="0.60"/><path d="M424.6 589.3L419.7 587.9L414.9 586.4L416.4 581.5L421.2 583L426 584.4Z" fill-opacity="0.60"/><path d="M414.9 586.4L410.1 584.8L405.4 583.1L407.2 578.4L411.8 580L416.4 581.5Z" fill-opacity="0.60"/><path d="M405.4 583.1L400.9 581.4L396.4 579.6L398.3 574.9L402.7 576.7L407.2 578.4Z" fill-opacity="0.60"/><path d="M396.4 579.5L392 577.6L387.7 575.7L389.8 571.1L394 573.1L398.3 574.9Z" fill-opacity="0.60"/><path d="M387.7 575.7L383.5 573.6L379.4 571.5L381.8 567.1L385.8 569.2L389.8 571.2Z" fill-opacity="0.60"/><path d="M379.4 571.5L375.5 569.3L371.6 567L374.2 562.8L377.9 565L381.8 567.1Z" fill-opacity="0.60"/><path d="M371.6 567L367.9 564.7L364.3 562.4L367 558.3L370.5 560.6L374.2 562.8Z" fill-opacity="0.60"/><path d="M364.3 562.3L360.8 559.9L357.4 557.4L360.4 553.5L363.6 555.9L367 558.3Z" fill-opacity="0.60"/><path d="M357.4 557.4L354.2 554.9L351.1 552.3L354.2 548.6L357.2 551.1L360.4 553.6Z" fill-opacity="0.60"/><path d="M351.1 552.3L348.1 549.6L345.2 547L348.6 543.5L351.3 546.1L354.2 548.6Z" fill-opacity="0.60"/><path d="M345.3 547L342.5 544.2L339.9 541.5L343.4 538.3L345.9 540.9L348.5 543.5Z" fill-opacity="0.60"/><path d="M340 541.5L337.5 538.7L335.2 535.9L338.8 532.9L341.1 535.6L343.4 538.3Z" fill-opacity="0.60"/><path d="M335.2 535.8L333 533L331 530.1L334.8 527.5L336.7 530.2L338.8 533Z" fill-opacity="0.60"/><path d="M331 530.1L329.1 527.2L327.3 524.2L331.3 521.9L333 524.7L334.8 527.5Z" fill-opacity="0.60"/><path d="M327.3 524.2L325.7 521.3L324.2 518.3L328.3 516.3L329.7 519.2L331.2 522Z" fill-opacity="0.60"/><path d="M324.2 518.3L322.9 515.3L321.6 512.3L325.8 510.7L327 513.5L328.3 516.4Z" fill-opacity="0.60"/><path d="M321.7 512.3L320.6 509.3L319.6 506.3L323.9 505.1L324.8 507.9L325.8 510.7Z" fill-opacity="0.60"/><path d="M319.6 506.3L318.8 503.3L318.2 500.3L322.5 499.4L323.1 502.2L323.9 505.1Z" fill-opacity="0.60"/><path d="M318.2 500.2L317.6 497.2L317.2 494.2L321.5 493.7L321.9 496.6L322.4 499.4Z" fill-opacity="0.60"/><path d="M317.3 494.2L317 491.2L316.8 488.2L321.1 488.1L321.3 490.9L321.5 493.7Z" fill-opacity="0.60"/><path d="M316.9 488.2L316.9 485.2L317 482.3L321.2 482.5L321.1 485.3L321.1 488.1Z" fill-opacity="0.60"/><path d="M317 482.3L317.2 479.3L317.6 476.4L321.7 477L321.4 479.7L321.2 482.5Z" fill-opacity="0.60"/><path d="M317.6 476.4L318.1 473.4L318.7 470.5L322.8 471.5L322.2 474.2L321.7 477Z" fill-opacity="0.60"/><path d="M318.8 470.5L319.5 467.7L320.3 464.8L324.2 466.1L323.4 468.8L322.7 471.5Z" fill-opacity="0.60"/><path d="M320.4 464.8L321.3 462L322.4 459.2L326.1 460.7L325.1 463.4L324.2 466.1Z" fill-opacity="0.60"/><path d="M322.4 459.2L323.6 456.5L324.9 453.7L328.5 455.5L327.2 458.1L326.1 460.7Z" fill-opacity="0.60"/><path d="M324.9 453.8L326.3 451.1L327.8 448.4L331.2 450.4L329.8 452.9L328.5 455.5Z" fill-opacity="0.60"/><path d="M327.8 448.4L329.5 445.8L331.2 443.2L334.4 445.4L332.7 447.9L331.2 450.4Z" fill-opacity="0.60"/><path d="M331.2 443.2L333 440.7L334.9 438.2L337.9 440.5L336.1 443L334.4 445.4Z" fill-opacity="0.60"/><path d="M334.9 438.2L336.9 435.7L339 433.3L341.8 435.8L339.8 438.1L337.9 440.5Z" fill-opacity="0.60"/><path d="M339 433.3L341.2 430.9L343.4 428.6L346.1 431.2L343.9 433.5L341.8 435.8Z" fill-opacity="0.59"/><path d="M343.4 428.6L345.8 426.3L348.2 424L350.7 426.8L348.3 429L346.1 431.2Z" fill-opacity="0.58"/><path d="M348.2 424.1L350.7 421.9L353.3 419.7L355.6 422.5L353.1 424.6L350.7 426.8Z" fill-opacity="0.57"/><path d="M353.3 419.7L356 417.6L358.7 415.5L360.8 418.4L358.2 420.5L355.6 422.5Z" fill-opacity="0.56"/><path d="M358.7 415.6L361.5 413.5L364.4 411.6L366.3 414.5L363.5 416.5L360.8 418.4Z" fill-opacity="0.54"/><path d="M364.4 411.6L367.3 409.7L370.3 407.8L372.1 410.8L369.2 412.6L366.3 414.5Z" fill-opacity="0.52"/><path d="M370.3 407.8L373.4 406L376.5 404.2L378.2 407.3L375.1 409L372.1 410.8Z" fill-opacity="0.51"/><path d="M376.5 404.3L379.7 402.5L382.9 400.9L384.4 403.9L381.3 405.6L378.2 407.2Z" fill-opacity="0.50"/><path d="M382.9 400.9L386.2 399.3L389.5 397.7L391 400.8L387.7 402.3L384.4 403.9Z" fill-opacity="0.49"/><path d="M389.6 397.7L392.9 396.2L396.4 394.7L397.7 397.8L394.3 399.3L390.9 400.8Z" fill-opacity="0.48"/><path d="M396.4 394.8L399.9 393.4L403.4 392L404.6 395.1L401.1 396.4L397.7 397.8Z" fill-opacity="0.47"/><path d="M403.4 392L407 390.7L410.6 389.5L411.6 392.6L408.1 393.8L404.6 395.1Z" fill-opacity="0.46"/><path d="M410.6 389.5L414.3 388.3L417.9 387.1L418.9 390.3L415.2 391.4L411.6 392.6Z" fill-opacity="0.46"/><path d="M417.9 387.2L421.7 386.1L425.4 385L426.3 388.2L422.6 389.2L418.9 390.3Z" fill-opacity="0.46"/><path d="M425.4 385.1L429.2 384.1L433 383.2L433.8 386.3L430 387.2L426.3 388.2Z" fill-opacity="0.46"/><path d="M433 383.2L436.9 382.3L440.8 381.5L441.4 384.6L437.6 385.4L433.8 386.3Z" fill-opacity="0.46"/><path d="M440.8 381.5L444.7 380.7L448.6 380L449.1 383.2L445.3 383.9L441.4 384.6Z" fill-opacity="0.46"/><path d="M448.6 380L452.5 379.4L456.5 378.8L456.9 382L453 382.5L449.1 383.2Z" fill-opacity="0.46"/><path d="M456.5 378.8L460.5 378.3L464.5 377.8L464.8 381L460.9 381.4L456.9 382Z" fill-opacity="0.46"/><path d="M464.5 377.8L468.5 377.4L472.5 377L472.8 380.2L468.8 380.5L464.8 381Z" fill-opacity="0.46"/><path d="M472.5 377L476.6 376.7L480.6 376.5L480.8 379.6L476.8 379.9L472.8 380.2Z" fill-opacity="0.46"/><path d="M480.6 376.5L484.6 376.3L488.7 376.1L488.8 379.3L484.8 379.4L480.8 379.6Z" fill-opacity="0.46"/><path d="M488.7 376.1L492.8 376.1L496.8 376L496.8 379.2L492.8 379.2L488.8 379.3Z" fill-opacity="0.46"/><path d="M496.8 376L500.9 376.1L504.9 376.1L504.9 379.3L500.8 379.2L496.8 379.2Z" fill-opacity="0.46"/><path d="M504.9 376.1L509 376.3L513.1 376.5L512.9 379.6L508.9 379.4L504.9 379.3Z" fill-opacity="0.46"/><path d="M513.1 376.5L517.1 376.7L521.1 377L520.9 380.2L516.9 379.9L512.9 379.6Z" fill-opacity="0.46"/><path d="M521.1 377L525.2 377.4L529.2 377.8L528.8 381L524.9 380.5L520.9 380.2Z" fill-opacity="0.46"/><path d="M529.2 377.8L533.2 378.3L537.2 378.8L536.7 382L532.8 381.4L528.8 381Z" fill-opacity="0.46"/><path d="M537.2 378.8L541.2 379.4L545.1 380L544.6 383.2L540.7 382.5L536.7 382Z" fill-opacity="0.46"/><path d="M545.1 380L549.1 380.7L553 381.5L552.3 384.6L548.5 383.9L544.6 383.2Z" fill-opacity="0.46"/><path d="M553 381.5L556.9 382.3L560.7 383.2L560 386.3L556.2 385.4L552.3 384.6Z" fill-opacity="0.46"/><path d="M560.7 383.2L564.6 384.1L568.4 385.1L567.5 388.2L563.8 387.2L560 386.3Z" fill-opacity="0.44"/><path d="M568.4 385.1L572.1 386.1L575.9 387.2L575 390.2L571.3 389.2L567.6 388.1Z" fill-opacity="0.40"/><path d="M575.9 387.2L579.6 388.3L583.3 389.5L582.3 392.5L578.6 391.3L575 390.2Z" fill-opacity="0.37"/><path d="M583.3 389.5L586.9 390.8L590.5 392.1L589.4 395L585.9 393.7L582.3 392.5Z" fill-opacity="0.33"/><path d="M590.5 392.1L594 393.4L597.6 394.8L596.4 397.7L592.9 396.4L589.4 395Z" fill-opacity="0.30"/><path d="M597.6 394.9L601 396.3L604.4 397.8L603.1 400.7L599.8 399.2L596.4 397.7Z" fill-opacity="0.27"/><path d="M604.4 397.8L607.8 399.4L611.1 401L609.7 403.8L606.5 402.2L603.1 400.7Z" fill-opacity="0.24"/><path d="M611.1 401L614.4 402.7L617.6 404.4L616.1 407.1L612.9 405.4L609.7 403.8Z" fill-opacity="0.22"/><path d="M617.6 404.4L620.7 406.2L623.8 408L622.2 410.6L619.2 408.9L616.1 407.1Z" fill-opacity="0.20"/><path d="M623.8 408L626.8 409.8L629.8 411.8L628.1 414.4L625.2 412.5L622.2 410.6Z" fill-opacity="0.18"/><path d="M629.8 411.7L632.7 413.7L635.5 415.7L633.7 418.3L630.9 416.3L628.1 414.4Z" fill-opacity="0.17"/><path d="M635.5 415.7L638.3 417.8L641 419.9L639 422.4L636.4 420.3L633.7 418.3Z" fill-opacity="0.16"/><path d="M641 419.9L643.6 422L646.1 424.2L644 426.6L641.6 424.5L639 422.4Z" fill-opacity="0.16"/><path d="M646.2 424.2L648.6 426.5L651 428.8L648.7 431L646.4 428.8L644 426.6Z" fill-opacity="0.15"/><path d="M651 428.7L653.3 431.1L655.5 433.5L653.1 435.6L650.9 433.3L648.7 431.1Z" fill-opacity="0.15"/><path d="M655.5 433.4L657.6 435.9L659.7 438.3L657.1 440.4L655.1 438L653.1 435.7Z" fill-opacity="0.15"/><path d="M659.7 438.3L661.6 440.8L663.5 443.3L660.7 445.3L659 442.8L657.1 440.4Z" fill-opacity="0.15"/><path d="M663.5 443.3L665.2 445.9L666.9 448.5L664 450.3L662.4 447.8L660.7 445.3Z" fill-opacity="0.15"/><path d="M666.9 448.5L668.5 451.2L669.9 453.9L666.9 455.4L665.5 452.8L664 450.3Z" fill-opacity="0.15"/><path d="M669.9 453.8L671.3 456.6L672.5 459.3L669.3 460.7L668.1 458L666.9 455.4Z" fill-opacity="0.15"/><path d="M672.5 459.3L673.6 462.1L674.6 464.9L671.3 466L670.4 463.3L669.3 460.7Z" fill-opacity="0.15"/><path d="M674.7 464.9L675.6 467.7L676.3 470.6L672.9 471.4L672.2 468.7L671.3 466Z" fill-opacity="0.15"/></g>
<path d="M645.4 550.9L644.8 551.4L643.4 549.7L644 549.2ZM638.4 556.6L637.6 557.3L636.2 555.5L637.1 554.8ZM635.9 558.5L635.1 559.2L633.7 557.3L634.6 556.7ZM633.1 560.6L632.5 561L631.2 559L631.7 558.6ZM630.5 562.3L629.9 562.7L628.6 560.7L629.2 560.4ZM622.6 567.3L622 567.7L620.8 565.6L621.4 565.2ZM589 583L588 583.3L587.1 580.7L588.1 580.4ZM553 592.9L551.9 593.1L551.4 590.1L552.4 589.9ZM543.7 594.6L542.7 594.7L542.3 591.6L543.2 591.5ZM537.5 595.5L536.6 595.6L536.2 592.5L537.1 592.4ZM497.2 598.1L496.2 598.1L496.2 594.9L497.2 594.9ZM493.8 598L493 598L493.1 594.8L493.9 594.8ZM487.7 597.9L486.8 597.8L486.9 594.6L487.8 594.7ZM468.8 596.5L468.2 596.5L468.5 593.3L469.1 593.4ZM447.2 593.4L446.6 593.3L447.1 590.2L447.8 590.3ZM432 590.2L431.3 590L432.1 587L432.7 587.1ZM419.9 586.9L419.3 586.7L420.2 583.7L420.8 583.9ZM396.7 578.6L395.8 578.2L397 575.4L397.8 575.8ZM385.4 573.4L384.5 573L385.8 570.3L386.7 570.7ZM382.7 572.1L381.7 571.6L383.1 568.9L384.1 569.4ZM369.1 564.3L368.2 563.7L369.8 561.3L370.6 561.8ZM361 558.8L360.4 558.4L362.1 556.1L362.7 556.5ZM358.8 557.2L357.9 556.6L359.7 554.3L360.5 554.9ZM344.5 544.8L343.8 544.1L345.8 542.2L346.5 542.9ZM325.8 519.4L325.5 518.8L327.8 517.6L328.1 518.2ZM320.2 504.8L320 504L322.4 503.4L322.6 504.1ZM318.9 498.5L318.7 497.9L321.1 497.5L321.2 498.1ZM317.9 483L318 482.2L320.2 482.3L320.2 483.2ZM319.1 473.6L319.3 472.8L321.4 473.2L321.2 474ZM323.7 458.7L324.1 457.9L325.9 458.7L325.6 459.5ZM339 434.8L339.4 434.3L340.8 435.5L340.4 436ZM345.3 428.1L345.9 427.6L347.1 428.8L346.5 429.4ZM347.6 425.9L348.2 425.4L349.3 426.7L348.8 427.2ZM352.2 421.9L352.9 421.3L353.9 422.6L353.3 423.2ZM354.6 419.9L355.3 419.4L356.3 420.7L355.7 421.2ZM362 414.4L362.8 413.8L363.7 415.1L362.9 415.7ZM372.4 407.7L373.3 407.2L374.1 408.4L373.2 409ZM380.7 403.1L381.5 402.7L382.2 404L381.3 404.4ZM412.1 390L413.1 389.7L413.5 390.9L412.5 391.2ZM433.4 384.1L434.1 383.9L434.4 385.1L433.7 385.3ZM463.9 378.9L464.7 378.8L464.9 380L464.1 380ZM467.2 378.5L467.8 378.5L467.9 379.6L467.3 379.7ZM470.3 378.2L470.9 378.2L471 379.3L470.4 379.4ZM473.4 378L474 377.9L474.1 379.1L473.5 379.1ZM501.1 377.1L501.9 377.1L501.9 378.2L501.1 378.2ZM504 377.1L505.1 377.1L505 378.3L503.9 378.3ZM519.9 377.9L520.6 378L520.5 379.1L519.8 379.1ZM532.1 379.2L532.9 379.3L532.8 380.4L531.9 380.3ZM550.4 382L551.3 382.2L551.1 383.4L550.2 383.2ZM595.4 395.1L596 395.3L595.6 396.3L595 396.1ZM601 397.4L601.7 397.7L601.3 398.7L600.5 398.4ZM617.5 405.5L618.4 406L617.9 407L617 406.5ZM656.7 436.3L657.2 436.9L656.2 437.7L655.7 437.1ZM667.5 451.6L667.9 452.2L666.7 452.9L666.3 452.3ZM675.4 470.8L675.4 470.8L673.9 471.2L673.9 471.2Z" fill="#b82000"/>
<path d="M677.2 476.9L677.6 479.3L674.7 479.7L674.4 477.3ZM677.8 480L678.1 482.5L675.2 482.7L674.9 480.3ZM678.3 486.3L678.3 488.4L675.4 488.4L675.4 486.4ZM676.9 502.1L676.4 504.2L673.4 503.5L673.8 501.4ZM676.1 505.1L675.4 507.5L672.4 506.6L673 504.4ZM671.8 517.1L670.9 519.1L668 517.7L668.9 515.8ZM670.5 520L669.5 522L666.7 520.5L667.7 518.5ZM667.8 525.7L666.7 527.6L663.9 525.9L665 524ZM662.1 533.2L660.8 535L658.2 532.9L659.4 531.3ZM660.4 535.9L658.9 537.9L656.3 535.7L657.8 533.9ZM658.5 538.4L657.1 540.1L654.5 537.8L655.9 536.2ZM652.1 545.4L650.5 547L648.1 544.5L649.7 542.9ZM647.8 550L646 551.6L643.7 549L645.5 547.4ZM642.7 553.7L641.1 555L638.9 552.2L640.5 551ZM640.3 555.7L638.7 557L636.5 554.1L638.1 552.9ZM638 557.8L636.3 559.1L634.2 556.1L635.8 554.9ZM635.3 559.5L633.4 561L631.3 558L633.2 556.6ZM633 561.6L631 563L628.9 560L630.9 558.6ZM630.3 563.3L628.2 564.7L626.2 561.6L628.3 560.2ZM627.7 565.1L626 566.2L624 563L625.8 561.9ZM625 566.6L623 567.9L621.1 564.6L623.1 563.4ZM622.4 568.3L620.4 569.4L618.5 566.1L620.5 565ZM614 572.6L611.9 573.6L610.2 570.1L612.2 569.1ZM608.6 575.8L606.6 576.8L605 573.2L606.9 572.3ZM597.2 581L595 581.8L593.5 578L595.7 577.2ZM594 581.5L591.7 582.4L590.3 578.6L592.6 577.7ZM591.2 583L589.2 583.7L587.9 579.8L589.8 579.1ZM588.2 583.7L586 584.4L584.7 580.5L586.8 579.8ZM585.3 585.1L583.4 585.8L582.1 581.8L584 581.2ZM582.4 586.3L580.5 586.9L579.2 582.9L581.2 582.3ZM579.4 587.1L577.3 587.7L576.1 583.7L578.2 583.1ZM576.4 587.9L574.1 588.5L573 584.5L575.2 583.8ZM570.4 589.9L568 590.5L567 586.4L569.3 585.8ZM567.4 590.5L565 591.1L564 586.9L566.3 586.3ZM564.4 591.4L561.9 591.9L561 587.7L563.3 587.2ZM561.2 591.7L558.9 592.2L557.9 588L560.3 587.5ZM558.2 592.7L555.9 593.2L555 589L557.3 588.5ZM555.1 593.2L553.1 593.6L552.3 589.3L554.3 588.9ZM552 593.5L549.9 593.9L549.1 589.6L551.2 589.2ZM549 594.2L546.9 594.6L546.1 590.2L548.2 589.9ZM545.9 594.8L543.8 595.1L543.1 590.8L545.2 590.4ZM542.8 595L540.6 595.4L539.9 591L542.1 590.6ZM539.8 596.1L537.6 596.5L537 592L539.2 591.7ZM536.6 596L534.5 596.3L533.9 591.8L536 591.6ZM533.5 596.5L531.2 596.7L530.7 592.3L533 592ZM530.5 597.4L528 597.6L527.5 593.2L530 592.9ZM527.3 597L525.2 597.2L524.8 592.7L526.9 592.5ZM524.2 597.7L521.8 597.9L521.5 593.4L523.8 593.2ZM521.1 597.7L519 597.9L518.7 593.4L520.8 593.2ZM518 598.2L515.9 598.3L515.6 593.8L517.7 593.7ZM514.9 598.6L512.6 598.7L512.4 594.2L514.7 594.1ZM511.8 598.7L509.5 598.8L509.3 594.3L511.6 594.3ZM508.6 598.7L506.6 598.8L506.5 594.3L508.5 594.2ZM505.5 599L503.2 599L503.1 594.5L505.4 594.5ZM502.4 598.9L500.2 598.9L500.1 594.4L502.3 594.4ZM499.3 599L497.2 598.9L497.2 594.4L499.3 594.5ZM496.1 598.5L493.8 598.4L493.9 593.9L496.2 594ZM493 599L490.7 598.9L490.9 594.4L493.1 594.5ZM489.9 598.7L487.7 598.6L487.8 594.1L490 594.2ZM486.8 598.2L484.3 598.1L484.5 593.6L487 593.7ZM483.7 598.3L481.6 598.2L481.9 593.7L483.9 593.8ZM480.5 598.4L478.3 598.2L478.6 593.7L480.8 593.9ZM477.4 597.9L475.3 597.8L475.7 593.3L477.7 593.5ZM474.3 597.6L472 597.4L472.4 592.9L474.7 593.1ZM471.2 597.3L468.7 597.1L469.2 592.6L471.6 592.8ZM468.1 597.1L466 596.8L466.5 592.4L468.6 592.6ZM465 597L462.6 596.7L463.2 592.3L465.5 592.5ZM461.9 596.3L459.6 596L460.2 591.6L462.5 591.9ZM458.8 596L456.5 595.7L457.1 591.2L459.4 591.6ZM455.7 595.2L453.5 594.9L454.2 590.5L456.4 590.8ZM452.6 594.8L450.3 594.4L451 590L453.4 590.4ZM449.5 594.7L447.1 594.3L447.9 589.9L450.3 590.3ZM446.5 593.8L444.1 593.3L444.9 589L447.3 589.4ZM443.4 593.2L441 592.7L441.9 588.4L444.3 588.8ZM440.3 592.9L438.1 592.5L439.1 588.1L441.2 588.6ZM437.2 592.4L435.1 591.9L436.1 587.6L438.2 588ZM434.1 591.7L431.7 591.1L432.8 586.8L435.1 587.4ZM431.1 590.8L429 590.3L430 586L432.2 586.5ZM428.1 590L425.9 589.4L427 585.1L429.2 585.7ZM425.2 588.7L422.9 588.1L424.1 583.9L426.4 584.5ZM422.1 588.4L419.7 587.7L420.9 583.5L423.3 584.2ZM419.2 587.2L416.9 586.5L418.2 582.3L420.4 582.9ZM416.1 586.4L414.1 585.8L415.4 581.6L417.4 582.2ZM413 585.8L411 585.1L412.4 580.9L414.4 581.6ZM410.2 584.5L407.8 583.6L409.3 579.5L411.6 580.3ZM407.3 583.2L405.2 582.4L406.8 578.3L408.8 579.1ZM404.4 582L402.2 581.2L403.7 577.1L405.9 577.9ZM401.5 581L399.3 580.1L401 576.1L403 576.9ZM398.3 580.3L396.3 579.5L398 575.5L400 576.3ZM395.7 578.6L393.7 577.7L395.4 573.8L397.4 574.6ZM392.8 577.3L390.6 576.4L392.4 572.4L394.6 573.4ZM389.8 576.5L387.7 575.5L389.5 571.6L391.6 572.6ZM386.9 575.1L385 574.2L386.9 570.4L388.8 571.3ZM384.1 573.8L382.3 572.9L384.2 569L386 569.9ZM381.4 572.2L379.2 571.1L381.3 567.3L383.3 568.4ZM378.5 570.9L376.3 569.6L378.4 565.9L380.6 567.1ZM375.8 569.2L373.9 568.2L376.1 564.5L377.9 565.5ZM373.3 567.4L371.3 566.2L373.5 562.6L375.4 563.8ZM370.4 566.2L368.6 565.1L370.8 561.5L372.6 562.6ZM368 564L366 562.8L368.3 559.2L370.2 560.5ZM365.4 562.3L363.4 561L365.8 557.5L367.7 558.8ZM362.5 561L360.5 559.6L363 556.2L364.9 557.5ZM359.9 559.2L358.2 557.9L360.7 554.6L362.4 555.8ZM357.7 556.8L356.1 555.6L358.6 552.3L360.2 553.5ZM355 555.2L353.4 553.9L356 550.7L357.6 552ZM352.8 552.9L351.1 551.4L353.8 548.3L355.5 549.7ZM350.1 551.2L348.5 549.8L351.3 546.7L352.8 548.1ZM348.1 548.8L346.4 547.2L349.2 544.3L350.8 545.8ZM345.5 546.9L343.9 545.4L346.8 542.5L348.3 544ZM343.2 544.8L341.7 543.2L344.6 540.4L346.1 541.9ZM341 542.5L339.4 540.8L342.4 538.1L343.9 539.8ZM338.9 540.1L337.4 538.4L340.5 535.8L341.9 537.5ZM337 537.6L335.7 535.9L338.8 533.4L340.1 535ZM334.8 535.3L333.5 533.6L336.7 531.3L337.9 532.9ZM332.9 532.7L331.6 530.9L334.9 528.7L336.1 530.4ZM331.2 530.1L330 528.3L333.3 526.2L334.4 527.9ZM329.6 527.4L328.3 525.3L331.7 523.3L332.9 525.3ZM327.7 524.8L326.6 522.8L329.9 520.9L331 522.8ZM326.1 522L324.9 519.8L328.4 518.1L329.5 520.2ZM324.7 519.2L323.6 516.9L327.1 515.3L328.1 517.5ZM323.4 516.3L322.4 513.9L325.9 512.5L326.9 514.7ZM322.6 513.2L321.8 511.1L325.3 509.8L326.1 511.8ZM321.5 510.2L320.7 508L324.3 506.9L325 509ZM320 507.4L319.3 505L322.9 504L323.5 506.3ZM319.4 504.2L318.8 502L322.4 501.2L322.9 503.3ZM318.8 501.1L318.3 498.6L321.9 497.9L322.4 500.3ZM318.1 498L317.7 495.9L321.3 495.4L321.6 497.4ZM317.8 494.8L317.5 492.3L321.1 492L321.4 494.4ZM317.3 491.7L317.2 489.5L320.8 489.4L320.9 491.4ZM317.3 488.5L317.3 486.2L320.9 486.2L320.9 488.4ZM317.2 485.3L317.2 483L320.8 483.2L320.7 485.4ZM317.5 482.1L317.6 480.1L321.1 480.4L321 482.3ZM317.4 478.9L317.8 476.4L321.2 476.9L320.9 479.3ZM318.4 475.8L318.8 473.6L322.2 474.2L321.8 476.4ZM318.7 472.7L319.2 470.4L322.6 471.1L322.1 473.4ZM319.6 469.7L320.3 467.3L323.5 468.2L322.9 470.5ZM320.5 466.6L321.2 464.3L324.4 465.4L323.7 467.6ZM321.1 463.5L321.8 461.5L324.9 462.7L324.2 464.6ZM322.5 460.6L323.3 458.5L326.4 459.8L325.6 461.8ZM323.3 457.5L324.4 455.3L327.3 456.7L326.4 458.9ZM324.7 454.7L325.8 452.5L328.7 454L327.7 456.1ZM326 451.8L327.1 449.7L329.9 451.3L328.8 453.3ZM328 449.3L329.2 447.3L332 449L330.8 450.9ZM329.7 446.7L330.9 444.8L333.6 446.6L332.4 448.4ZM331 443.7L332.5 441.7L335 443.6L333.7 445.5ZM333.1 441.3L334.4 439.6L336.9 441.5L335.7 443.2ZM334.8 438.7L336.2 437L338.7 439L337.3 440.6ZM336.6 436.1L338.2 434.1L340.6 436.2L339 438.1ZM338.9 433.9L340.5 432L342.8 434.1L341.2 435.9ZM341.2 431.7L342.8 430L345 432.1L343.4 433.8ZM343.2 429.3L344.8 427.7L347 429.9L345.4 431.4ZM345.4 427.1L347.2 425.5L349.3 427.7L347.5 429.3ZM347.6 424.8L349.2 423.4L351.2 425.6L349.6 427ZM350 422.8L351.7 421.3L353.6 423.6L351.9 425ZM352.4 420.7L354.1 419.3L356 421.6L354.2 423ZM355.1 419.1L356.8 417.8L358.6 420.1L356.9 421.4ZM357.5 417.1L359.4 415.7L361.1 418.1L359.3 419.5ZM360 415.3L361.7 414.1L363.4 416.4L361.7 417.6ZM362.5 413.4L364.3 412.2L365.9 414.6L364.2 415.8ZM365 411.4L367 410L368.6 412.4L366.5 413.8ZM367.5 409.6L369.5 408.4L370.9 410.8L369 412ZM370.4 408.3L372.1 407.3L373.6 409.7L371.9 410.7ZM373.2 406.9L375.1 405.8L376.5 408.2L374.6 409.3ZM375.6 404.8L377.5 403.8L378.8 406.2L376.9 407.2ZM378.5 403.7L380.4 402.7L381.7 405.1L379.8 406.1ZM381.2 402.1L383.1 401.1L384.3 403.5L382.5 404.5ZM383.9 400.5L385.9 399.6L387.1 402L385.1 403ZM389.7 398.1L391.9 397.1L393 399.5L390.8 400.5ZM395.3 395.3L397.4 394.4L398.4 396.8L396.3 397.7ZM398.3 394.5L400.2 393.8L401.2 396.2L399.3 397ZM401.2 393.2L403.5 392.4L404.4 394.8L402.1 395.7ZM404.1 392.2L406.1 391.5L407 393.9L405 394.6ZM407.1 391.4L409.1 390.7L410 393.1L408 393.8ZM410 390L411.9 389.4L412.7 391.8L410.8 392.5ZM412.9 389L415.2 388.3L416 390.7L413.7 391.4ZM415.9 388L417.8 387.4L418.6 389.8L416.6 390.4ZM418.9 387.3L421.3 386.6L422 389.1L419.6 389.7ZM424.9 385.5L427.3 384.9L427.9 387.3L425.5 388ZM430.9 384L433.3 383.4L433.8 385.8L431.5 386.4ZM433.9 383.1L436.4 382.6L436.9 385L434.5 385.6ZM437 382.7L439.1 382.2L439.7 384.7L437.6 385.1ZM443.1 381.4L445.3 381L445.7 383.5L443.6 383.9ZM446.2 381.2L448.4 380.8L448.8 383.2L446.7 383.6ZM452.3 379.5L454.6 379.1L455 381.6L452.7 381.9ZM455.4 379.2L457.8 378.8L458.2 381.3L455.7 381.6ZM458.4 378.6L460.7 378.3L461 380.8L458.8 381.1ZM461.6 378.7L463.9 378.4L464.2 380.8L461.9 381.1ZM464.7 378.5L467.2 378.2L467.4 380.7L465 380.9ZM467.8 378L470.3 377.8L470.5 380.2L468 380.5ZM470.9 377.5L473.3 377.3L473.5 379.7L471.1 379.9ZM477.1 377.4L479.1 377.2L479.2 379.7L477.3 379.8ZM483.3 377L485.7 376.9L485.8 379.4L483.4 379.5ZM486.4 376.8L488.7 376.7L488.7 379.2L486.5 379.3ZM489.5 376.2L491.9 376.2L492 378.6L489.6 378.7ZM492.6 376.4L494.8 376.4L494.8 378.9L492.7 378.9ZM498.8 376L501.1 376.1L501.1 378.5L498.8 378.5ZM502 376.6L504 376.6L503.9 379L501.9 379ZM505.1 376.2L507.3 376.3L507.2 378.7L505 378.7ZM508.2 376.4L510.6 376.5L510.5 379L508.1 378.9ZM511.3 376.9L513.4 377.1L513.3 379.5L511.2 379.4ZM514.4 377.1L516.7 377.3L516.5 379.7L514.2 379.6ZM517.5 376.8L519.9 377L519.8 379.4L517.4 379.2ZM520.6 377.2L522.7 377.4L522.5 379.8L520.4 379.6ZM523.7 377.6L526 377.8L525.8 380.3L523.5 380.1ZM526.8 377.8L529.3 378.1L529 380.5L526.6 380.3ZM529.9 378.2L532.2 378.5L531.9 380.9L529.6 380.7ZM533 378.7L535.2 379L534.9 381.4L532.7 381.1ZM536.1 379.1L538.2 379.4L537.9 381.8L535.7 381.5ZM539.1 379.8L541.6 380.2L541.2 382.6L538.8 382.2ZM542.3 379.9L544.4 380.2L544 382.7L541.9 382.3ZM545.4 380.2L547.5 380.5L547 383L544.9 382.6ZM548.4 381.1L550.5 381.5L550 383.9L547.9 383.5ZM554.5 382L556.6 382.5L556.1 384.9L554 384.5ZM557.5 383L559.7 383.5L559.1 385.9L557 385.4ZM563.7 383.9L565.7 384.4L565.1 386.8L563.1 386.3ZM566.6 385.3L568.7 385.8L568.1 388.3L565.9 387.7ZM572.7 386.3L575 387L574.3 389.4L572 388.7ZM575.7 387.4L577.9 388.1L577.2 390.5L575 389.8ZM581.5 389.5L583.8 390.3L583 392.6L580.8 391.9ZM584.5 390.4L586.7 391.1L585.9 393.4L583.7 392.7ZM593.4 393.5L595.7 394.4L594.8 396.6L592.5 395.7ZM599 396.2L601.1 397.1L600.2 399.3L598 398.4ZM601.9 397.2L604 398.2L603 400.4L600.9 399.4ZM613.2 402.5L615.1 403.5L613.9 405.6L612.1 404.7ZM615.9 404.1L617.7 405.2L616.5 407.3L614.7 406.3ZM618.8 405.3L620.7 406.3L619.5 408.4L617.6 407.4ZM621.5 406.8L623.5 408L622.2 410L620.3 408.9ZM631.9 413.9L633.7 415.1L632.2 417.1L630.5 415.9ZM639.5 419.3L641.1 420.6L639.6 422.5L638 421.2ZM642.1 421L643.9 422.5L642.2 424.4L640.5 422.9ZM644.3 423.3L645.8 424.7L644.1 426.5L642.6 425.2ZM646.6 425.4L648.3 426.9L646.6 428.7L644.9 427.2ZM655.4 434.3L656.9 436.1L655 437.7L653.4 436ZM661.9 441.1L663.2 443L661 444.5L659.7 442.7ZM663.7 443.7L665 445.5L662.7 447L661.5 445.2ZM665.3 446.4L666.6 448.5L664.3 449.9L663 447.9ZM666.6 449.3L667.9 451.4L665.5 452.8L664.3 450.7ZM671 457.6L671.9 459.6L669.4 460.7L668.5 458.8ZM673.7 463.3L674.4 465.4L671.8 466.3L671.1 464.3ZM674.8 466.3L675.5 468.4L672.8 469.1L672.2 467.1ZM675.9 469.3L676.3 470.6L673.5 471.3L673.2 470Z" fill="#6c0600"/>
<path d="M623.2 411.9h1.2M674.5 483.7h1.2M527.3 376.6h1.2M381.1 573.2h1.2M391.6 571.2h1.2M506.1 375.8h1.2M332.3 447.2h1.2M657.1 443.3h1.2M529.8 591.9h1.2M521.8 599.4h1.2M358.7 558.4h1.2M649.8 427.5h1.2M567.7 388.9h1.2M335.1 445.8h1.2M511 598.9h1.2M558.6 386.8h1.2M337.7 532.7h1.2M385 575.1h1.2M550.8 385.4h1.2M515.1 598.6h1.2M315.3 491.2h1.2M585.4 584.7h1.2M654.1 432h1.2M371.5 567.3h1.2M620.8 411.6h1.2M323.1 453.8h1.2M570.6 389.5h1.2M336.1 527.8h1.2M529.3 597.7h1.2M321.5 456.4h1.2M478.3 379.4h1.2M536.7 383.4h1.2M408.4 388.7h1.2M653.4 436.1h1.2M376.8 403.1h1.2M567.4 590.3h1.2M580.8 586.5h1.2M328.2 455.9h1.2M443.5 385.5h1.2M647 424.2h1.2M436.7 587.5h1.2M411.2 580.2h1.2M576.5 391.8h1.2M537.5 382.4h1.2M316.1 490.6h1.2M635.1 420.8h1.2M315.6 492.9h1.2M590.6 397h1.2M375.6 404.6h1.2M625.5 566.5h1.2M670.3 519.7h1.2M600.2 580h1.2M320.9 482.7h1.2M377.3 563.7h1.2M328.7 444h1.2M507.9 380.1h1.2M513.8 379.5h1.2M625.2 412.8h1.2M375.3 408.3h1.2M336.3 443h1.2M580.6 393.1h1.2M629.3 564h1.2M525 598.5h1.2M346.8 542.8h1.2M324.7 465.8h1.2M317.7 470.1h1.2M367.5 414.3h1.2M387.5 575.4h1.2M581.9 579.9h1.2M667.9 451.7h1.2M329.8 519.4h1.2M668.9 523h1.2M425.1 383.5h1.2M407.2 394h1.2M533.5 597.2h1.2M324.3 464.7h1.2M326.8 447h1.2M467.5 380.3h1.2M402.2 396.3h1.2M629 409.9h1.2M485.2 375.1h1.2M337.2 442.7h1.2M659.3 438.2h1.2M462.4 598.3h1.2M620.7 569.7h1.2M622.2 568.1h1.2M321.3 487.7h1.2M473.8 592.5h1.2M428.7 585.3h1.2M315.4 489.7h1.2M645.9 429.7h1.2M482.1 379.8h1.2M322.3 455.1h1.2M567.1 388.3h1.2M531 598.3h1.2M645.8 544.6h1.2M329.7 453.8h1.2M480.2 593.4h1.2M469.9 381.4h1.2M417.9 390.6h1.2M366.3 564.2h1.2M615.9 408.6h1.2M319.2 465h1.2M336.2 529.3h1.2M499.7 380.1h1.2M548.6 383.9h1.2M637.9 421.7h1.2M626.2 415h1.2M322.6 471.7h1.2M665.5 528.6h1.2M658.9 444.5h1.2M374.7 569.7h1.2M529.6 592h1.2M574.1 385.6h1.2M445.3 384.4h1.2M390.8 401.6h1.2M493.5 379.1h1.2M471.1 379.9h1.2M452.8 589.5h1.2M355.8 549h1.2M330.8 441.2h1.2M323.6 467h1.2M546.5 383.5h1.2M360.7 419.3h1.2M565.8 591.8h1.2M603.8 579.2h1.2M402 390.9h1.2M332.2 439.2h1.2M530.9 591.5h1.2M321.5 472.9h1.2M673.8 480.2h1.2M482.4 379.9h1.2M349.4 426.9h1.2M461.7 382h1.2M664 521.4h1.2M674.1 510.3h1.2M339.1 542.8h1.2M355.1 549.9h1.2M673.9 482.1h1.2M367.3 565.3h1.2M367.8 565h1.2M321.5 476.8h1.2M429 383.4h1.2M395.3 572.4h1.2M550.2 380.7h1.2M638.6 552.2h1.2M500.2 380.6h1.2M648.9 542.1h1.2M368.9 408.3h1.2M403.3 395.8h1.2M322.5 517.9h1.2M324.1 455.2h1.2M411 585h1.2M345.6 425.5h1.2M498.4 376.2h1.2M352.1 547.2h1.2M318.6 509.6h1.2M671.3 501.8h1.2M631.8 562.8h1.2M332.9 524.7h1.2M623.3 561.4h1.2M421.1 588.5h1.2M338.3 541.8h1.2M315.7 478.7h1.2M344.1 425.5h1.2M333 524h1.2M330.4 518.7h1.2M513.6 598.8h1.2M360.8 561.2h1.2M459.6 590.7h1.2M348.3 550.9h1.2M366.4 565.6h1.2M336.3 530.6h1.2M535.7 377.4h1.2M639.8 557.5h1.2M467.7 376.1h1.2M495.7 379.8h1.2M329.5 453.3h1.2M617.2 572.3h1.2M586.1 391h1.2M439 380.8h1.2M360.7 412.8h1.2M322.9 474.3h1.2M322.6 476h1.2M648.6 426.5h1.2M334.5 444.3h1.2M324.2 506.2h1.2M486.5 379.1h1.2M435.9 385.5h1.2M670.1 454.5h1.2M551.2 380.5h1.2M652.2 537.3h1.2M322.1 458.3h1.2M337.8 433.1h1.2M418.4 391.4h1.2M608.8 576.8h1.2M324.6 507.2h1.2M660.9 527.8h1.2M333.3 438h1.2M327.3 513.9h1.2M563.8 592.2h1.2M676 508.2h1.2M538.3 379.2h1.2M329.1 529.8h1.2M413.8 586.6h1.2M431.7 386.7h1.2M483.1 592.3h1.2M331.6 523.7h1.2M433.1 382.8h1.2M619.2 571.5h1.2M662.9 532.4h1.2M340.1 535.2h1.2M366 415.1h1.2M489.7 599.6h1.2M320.7 492.2h1.2M655.3 535.1h1.2M615.4 407.3h1.2M345.5 433h1.2M650.3 547.8h1.2M322.2 478.9h1.2M559.5 386.7h1.2M327.1 515.9h1.2M318 468h1.2M324.6 521.5h1.2M346.4 432.1h1.2M566.3 387.8h1.2M517.7 380.3h1.2M327.4 515.2h1.2M573.1 386.2h1.2M374.7 569.6h1.2M444.7 588.4h1.2M321.6 478.1h1.2M490.2 380.6h1.2M465.8 591h1.2M405.4 576.6h1.2M672.5 499.9h1.2M326 512.8h1.2M668.6 462.4h1.2M316.8 477.4h1.2M414.4 587.7h1.2M327.5 455.5h1.2M409.7 394.1h1.2M520.4 380.7h1.2M423.5 582.9h1.2M333.3 439.5h1.2M505.9 593.7h1.2M486.9 593.8h1.2M323.1 504.9h1.2M626.6 565.3h1.2M328 516.5h1.2M573.3 386.4h1.2M481.9 598.7h1.2M328.1 528.1h1.2M624.9 408.7h1.2M341.6 428.4h1.2M323.6 468.9h1.2M674.7 511.1h1.2M673.9 491.8h1.2M656.2 533.3h1.2M648.4 550.6h1.2M599.6 579.8h1.2M416.5 587.7h1.2M375.6 409.1h1.2M570.1 584.1h1.2M362.2 562.5h1.2M599.3 581.2h1.2M669.3 465.9h1.2M379.5 566.5h1.2M557.7 382.8h1.2M384 574.5h1.2M438.4 592.7h1.2M490.5 594h1.2M579.8 581.9h1.2M354.2 423.5h1.2M602.9 397.4h1.2M542.1 378.4h1.2M566.7 584.5h1.2M319.7 508.4h1.2M488.4 375.6h1.2M568.8 390h1.2M558.5 586.3h1.2M487 376h1.2M330.1 519.8h1.2M462.6 597.6h1.2M331.5 441.4h1.2M382 401.2h1.2M404.8 391.3h1.2M468.1 377.4h1.2M322.7 496.6h1.2M593.3 582.3h1.2M323.7 452.7h1.2M588.9 578.2h1.2M418.5 587.9h1.2M401.6 576.9h1.2M388.4 569.4h1.2M623.4 562.3h1.2M332 522.2h1.2M349.7 551.1h1.2M322.8 519.8h1.2M459.9 378.3h1.2M668.5 460h1.2M653.8 544.8h1.2M414.1 387.2h1.2M517.3 593.3h1.2M431.8 382.7h1.2M658.7 537.9h1.2M322.4 471.7h1.2M556.7 381.8h1.2M352.4 546.3h1.2M329.4 518.1h1.2M438.4 382.1h1.2M504.3 592.7h1.2M318.4 464.9h1.2M375 409.8h1.2M522.2 597.9h1.2M397.7 393.9h1.2M677.6 497.9h1.2M433.9 593h1.2M672.2 499.6h1.2M488.4 599.5h1.2M518.6 599.6h1.2M324.8 461.6h1.2M379.8 571.7h1.2M603.5 579.1h1.2M642 425.4h1.2M552.8 385.3h1.2M674.1 480.5h1.2M668.6 451.5h1.2M396.3 580.8h1.2M470.4 381.2h1.2M342.5 538.2h1.2" stroke="#ffe020" stroke-width="1.2" stroke-opacity="0.75" fill="none"/>
<path d="M338 539.7h1.2M413.3 586.9h1.2M375.3 570.5h1.2M611.6 575.7h1.2M316.3 492.5h1.2M678.3 481.1h1.2M362 412.5h1.2M654 544.2h1.2M493.7 599.9h1.2M670 523.1h1.2M382.4 573.4h1.2M675.4 505.6h1.2M388.3 577.1h1.2M364.8 414.8h1.2M322.7 469.1h1.2M490.7 378.9h1.2M419 587.5h1.2M383 573.6h1.2M490.8 379.4h1.2M346.5 541.1h1.2M594.4 581.5h1.2M584.9 393.2h1.2M364.8 562.6h1.2M435.4 386.1h1.2M553.9 593.4h1.2M345 431.4h1.2M454.2 378h1.2M458.1 382.1h1.2M322.8 471.3h1.2M659.9 529.3h1.2M332 450.4h1.2M364.6 557.1h1.2M540.6 378.9h1.2M349.4 427.4h1.2M532.4 591.8h1.2M571.7 389.8h1.2M670.1 506.4h1.2M482.6 593.7h1.2M352.5 547.4h1.2M357.7 421.8h1.2M392 577.8h1.2M521.3 381h1.2M330 441.6h1.2M452.4 383h1.2M491.1 593.4h1.2M639.7 423.3h1.2M638.1 551.9h1.2M346.1 549.1h1.2M322 517.4h1.2M668.3 512.4h1.2M570.5 590.6h1.2M337.5 433.8h1.2M644.8 545.7h1.2M425.2 384h1.2M346.7 423.4h1.2M672.6 499.4h1.2M551.3 381.3h1.2M339.2 542.6h1.2M448.7 589.8h1.2M320.8 458.4h1.2M560 587.3h1.2M468.3 380.7h1.2M349.2 427.9h1.2M579.2 387.9h1.2M500.4 593.4h1.2M567.2 383.7h1.2M385 569.5h1.2M532.3 378.2h1.2M477 599.3h1.2M319.3 462.1h1.2M323.3 467.4h1.2M530.7 381h1.2M555.6 382h1.2M452 378h1.2M356.6 422.4h1.2M429.3 383.6h1.2M480.7 376.5h1.2M659.5 446.1h1.2M442.7 380.6h1.2M315.7 496.5h1.2M588.9 579.1h1.2M478 599.7h1.2M581.5 393.5h1.2M370.9 412.8h1.2M344.4 432.8h1.2M396 580.2h1.2M569.7 583.7h1.2M326.5 459.4h1.2M321.5 486.6h1.2M431.6 585.4h1.2M350.3 421.4h1.2M524 591.5h1.2M513.3 379.3h1.2M521.5 381.2h1.2M674.1 483h1.2M527.4 381.8h1.2M361.3 561h1.2M317.4 468.1h1.2M357.1 420.5h1.2M652.4 436.3h1.2M641.8 420.4h1.2M380.3 401.3h1.2M524.4 597.6h1.2M486.6 380.3h1.2M330.2 451.6h1.2M376.4 564.3h1.2M673.2 482h1.2M610.2 399.7h1.2M452.3 383.2h1.2M533.6 377.3h1.2M566.9 585.4h1.2M320.2 460.7h1.2M673.7 493.7h1.2M327.9 527.6h1.2M360.7 413.9h1.2M507.5 379.7h1.2M646 423h1.2M435.5 586.2h1.2M673.3 492.9h1.2M323.7 466.5h1.2M340.1 542.5h1.2M453.8 589.5h1.2M613.3 402.1h1.2M316.3 484.8h1.2M434.3 381.9h1.2M327.7 514.6h1.2M326.1 460.9h1.2M641.9 547.9h1.2M628.8 559.2h1.2M649.6 547.3h1.2M551.4 588.8h1.2M323.7 466.5h1.2M486.9 380.2h1.2M329.3 444.5h1.2M667.4 459.5h1.2M352 553.5h1.2M342.6 428.1h1.2M597.8 394.6h1.2M332.9 534.1h1.2M376.4 408.9h1.2M363.5 556.6h1.2M674.3 485.1h1.2M543.4 384.1h1.2M343.2 428.1h1.2M458.6 377.3h1.2M516.2 376.5h1.2M665.1 445.6h1.2M563 383h1.2M354.7 556h1.2M655.3 440.9h1.2M430 584.2h1.2M497.1 376.4h1.2M382 404.6h1.2M370.6 406.8h1.2M657.2 532.3h1.2M321.9 483.2h1.2M373.3 561.9h1.2M341.3 428.9h1.2M633.3 561.5h1.2M463.6 591.5h1.2M387.8 569.8h1.2M634.8 415.8h1.2M541.2 590.9h1.2M636.5 558.7h1.2M496.2 379.5h1.2M324.2 468.7h1.2M354.1 547.4h1.2M419.2 588.8h1.2M385.4 576.1h1.2M456.3 597.3h1.2M335.7 444.5h1.2M340.3 533.5h1.2M664.1 531.9h1.2M326.1 461.2h1.2M480.8 379.6h1.2M598.5 399.1h1.2M642.3 421.5h1.2M621.9 406.6h1.2M634.9 553.6h1.2M579.7 392.9h1.2M315.3 485.2h1.2M455.4 589.7h1.2M489.6 375.3h1.2" stroke="#40ffc0" stroke-width="1.2" stroke-opacity="0.75" fill="none"/>
<path d="M318.6 465.9h1.2M338.7 439.7h1.2M332 449.3h1.2M329.4 453.3h1.2M366.2 563.8h1.2M406.6 389.3h1.2M594.5 397.7h1.2M605.2 397.4h1.2M315.8 498h1.2M324.6 505.1h1.2M317 473.1h1.2M675 466.9h1.2M352.6 424.1h1.2M492.5 380.5h1.2M536.2 382.3h1.2M639.1 550.4h1.2M540.1 597.3h1.2M415.2 387h1.2M519.3 592.8h1.2M360.6 419.1h1.2M345.4 432.7h1.2M321.2 514.2h1.2M390.7 576.9h1.2M633.2 414.1h1.2M326.6 512.1h1.2M357.7 558.4h1.2M325 466.1h1.2M578.7 586.9h1.2M664.4 532.7h1.2M543.5 589.6h1.2M317 496.4h1.2M635.4 420.1h1.2M641.9 549h1.2M316.3 478.2h1.2M344.4 547.6h1.2M541.6 590.9h1.2M316.9 480.2h1.2M403.7 391.5h1.2M509.6 375.8h1.2M387.8 576.1h1.2M558.9 592.3h1.2M623.6 413.1h1.2M567 585.3h1.2M406.2 578.1h1.2M674.3 513.1h1.2M326.6 448.4h1.2M339.5 532.4h1.2M332.9 533.6h1.2M339.5 541.8h1.2M670.8 465.4h1.2M679.1 487.8h1.2M670.1 509.7h1.2M678 493.3h1.2M332.8 524.9h1.2M590.8 577.2h1.2M439.7 593.4h1.2M390.2 578.3h1.2M317.4 503.2h1.2M380.9 405.5h1.2M334.9 445h1.2M516.9 376.6h1.2M592.3 583.3h1.2M547.7 385.1h1.2M673.7 515.7h1.2M677 475.4h1.2M321.1 490.7h1.2M582.9 394.2h1.2M482.9 593.6h1.2M341.3 435.8h1.2M448.4 383.2h1.2M346.1 424.5h1.2M585.3 394.3h1.2M320.7 460h1.2M409.8 392.9h1.2M345.9 425.1h1.2M366.8 415.1h1.2M401.3 575.4h1.2M606.3 402.1h1.2M524.8 376.5h1.2M326.6 458.1h1.2M452.2 383h1.2M526 382h1.2M340.9 534.7h1.2M354.7 423.6h1.2M602.8 401.6h1.2M510.8 599.7h1.2M483 592.1h1.2M374.8 562.9h1.2M518.3 592.6h1.2M423.7 583.9h1.2M640.9 425.4h1.2M342.6 429.1h1.2M648.8 550.2h1.2M329.4 454.6h1.2M321 480.6h1.2M650.1 433.1h1.2M345 547.5h1.2M364.1 563.9h1.2M416 580.1h1.2M490.1 374.9h1.2M377.9 408.5h1.2M589 578.4h1.2M357.8 559.4h1.2M472.4 380.3h1.2M401.2 396.7h1.2M324.7 451.7h1.2M333 533.7h1.2M426.7 590.4h1.2M347.5 430.6h1.2M435.3 382.1h1.2M534.8 378.4h1.2M671.2 471.6h1.2M370.4 407h1.2M490.3 593.5h1.2M551 380.4h1.2M395.7 394.3h1.2M676.3 504.5h1.2M519.8 377.1h1.2M665.9 448.4h1.2M420.5 385.4h1.2M336.1 537.4h1.2M494.1 379.1h1.2M494.4 379.3h1.2M330.6 450.2h1.2M627.5 415.1h1.2M429.3 591h1.2M678.3 485.5h1.2M417.2 386.4h1.2M512.1 375.6h1.2M329.2 519.6h1.2M494.3 380.3h1.2M399 575.3h1.2M332.3 439.4h1.2M506.6 599.8h1.2M642.8 427.1h1.2M632.5 563.1h1.2M514.8 380.7h1.2M374.7 563.1h1.2M492.1 599.1h1.2M474.2 379.9h1.2M523.6 592.9h1.2M322.9 518h1.2M522.9 592.5h1.2M329.7 452.1h1.2M507.1 376.5h1.2M608.2 571.1h1.2M625.8 566.3h1.2M637.6 423.4h1.2M464.7 377h1.2M341.6 544.8h1.2M591.9 395.9h1.2M426.5 384.4h1.2M347.8 429.7h1.2M518.6 376.7h1.2M596.5 580.7h1.2M599.5 573.5h1.2M561.1 383.8h1.2M510.7 380h1.2M336.4 530.8h1.2M349.4 544.5h1.2M318.4 467.7h1.2M509.1 592.4h1.2M625 408h1.2M540.4 383.6h1.2M456.8 596.5h1.2M598.3 400.3h1.2M345.6 540.5h1.2M342.8 538.5h1.2M387 570.3h1.2M605.2 397.4h1.2M530 597.1h1.2M430.6 584.6h1.2M532.2 382.1h1.2M627.9 565.2h1.2M408.3 389.8h1.2M524.3 381h1.2M370.7 411h1.2M323.6 465.4h1.2M653.6 536.5h1.2M639.7 550.2h1.2M658.3 445h1.2M449.5 384.4h1.2M382 567.3h1.2M318.1 466.5h1.2M661.4 535.4h1.2M551.4 380.5h1.2M594.9 398.1h1.2M501.2 375.6h1.2M399 398.2h1.2M490.4 599.6h1.2M396.5 398.3h1.2M335.2 445.1h1.2M490.3 600h1.2M546.1 589.9h1.2" stroke="#ff5000" stroke-width="1.2" stroke-opacity="0.75" fill="none"/>
<path d="M592.3 582.5h1.2M411.7 392.8h1.2M409.8 579.7h1.2M429.3 584.6h1.2M548.4 384.9h1.2M338.3 439.6h1.2M506.3 379.8h1.2M409.5 578.2h1.2M649.6 549.5h1.2M383.1 567.1h1.2M334 444.8h1.2M432.1 386.4h1.2M395.2 398.6h1.2M353.5 418.9h1.2M331.7 449.4h1.2M421 389.2h1.2M321.3 489.7h1.2M388.3 402.2h1.2M575.1 390.6h1.2M660.6 438.1h1.2M448.7 383h1.2M483.7 375h1.2M668 525.6h1.2M567.5 389h1.2M402.6 583.3h1.2M415.1 392.5h1.2M592.8 576.7h1.2M461.3 597.4h1.2M510.9 599.1h1.2M600.6 573.8h1.2M536 597.6h1.2M585.8 578.5h1.2M624.5 560.4h1.2M585.9 579.7h1.2M666.3 518.6h1.2M606.3 397.8h1.2M380.1 565.1h1.2M335.2 443.5h1.2M321.6 482.1h1.2M343.3 427.4h1.2M620.7 569h1.2M639.5 423.4h1.2M519 592h1.2M514.4 599.9h1.2M419.1 389.8h1.2M609.6 405.1h1.2M533.1 590.4h1.2M544.1 590.2h1.2M538.1 379h1.2M339.1 439.1h1.2M576.2 581.9h1.2M333 447h1.2M509.2 599.2h1.2M339.3 432.7h1.2M324.7 466.9h1.2M476.6 592.6h1.2M320 465h1.2M585 585.4h1.2M554.3 588.3h1.2M498.2 379.9h1.2M584.2 390.3h1.2M422.1 384.4h1.2M330.9 450.8h1.2M388.3 576.8h1.2M535 590.3h1.2M388.4 570.8h1.2M620.7 562.5h1.2M571.1 584.7h1.2M316 493.1h1.2M655 440.6h1.2M521.8 379.9h1.2M668.3 449.2h1.2M380.5 400.7h1.2M370.6 567h1.2M382.6 404.3h1.2M415.8 386.7h1.2M423 385.5h1.2M464.6 376.5h1.2M324.4 466.4h1.2M665.7 519.5h1.2M441 587h1.2M364.7 563.8h1.2M548.3 380.1h1.2M393.9 579.6h1.2M544.9 596.2h1.2M368.3 407.5h1.2M335.3 437.5h1.2M668.3 451h1.2M340.8 430.4h1.2M430.2 591.2h1.2M468.5 377.6h1.2M645 553.3h1.2M367.4 559.1h1.2M667.6 461.1h1.2M424.7 583.3h1.2M475.2 381.1h1.2M331.4 441.5h1.2M317.8 467.8h1.2M481.1 376.5h1.2M380.4 406.9h1.2M614 402.2h1.2M377.9 402.8h1.2M322.6 497.2h1.2M339.4 542.3h1.2M437.2 593.1h1.2M335.6 529.3h1.2M620.8 405.2h1.2M593.8 577.3h1.2M651.7 545.2h1.2M482 599.5h1.2M345 547.6h1.2M636.9 559.2h1.2M575.3 390.4h1.2M357.4 551.3h1.2M369.6 413.3h1.2M325.9 460.2h1.2M369.2 559.6h1.2M479.1 380h1.2M602.5 395.7h1.2M365.2 557.7h1.2M456.8 378.3h1.2M668.5 462.6h1.2M358.7 414.3h1.2M648.7 426.3h1.2M526 381.6h1.2M346 432.4h1.2M629.2 417.2h1.2M580.6 580.2h1.2M322.2 477.2h1.2M477.3 380.1h1.2M330.8 530h1.2M630.2 558.4h1.2M509.6 599.6h1.2M624.7 561.3h1.2M643 553.3h1.2M453.2 378.1h1.2M672.4 478.7h1.2M595.8 394.1h1.2M389.1 396.9h1.2M673.9 462.2h1.2M528.2 377.1h1.2M546.7 589.1h1.2M639.3 418h1.2M316.6 481.4h1.2M529.3 597.7h1.2M663.1 533.5h1.2M678.8 490.1h1.2M591.6 395.8h1.2M645.9 429.2h1.2M463.7 378.1h1.2M445.1 588.9h1.2M443.2 594.4h1.2M363.1 410.9h1.2M316.3 477.8h1.2M618.3 571.6h1.2M570 583.6h1.2M348.8 542.6h1.2M409.3 389.2h1.2M676.7 498.9h1.2M332.6 533.8h1.2M613.7 402.9h1.2M351 425.8h1.2M638.5 557.4h1.2M465.7 378h1.2M634.1 419.4h1.2M350.8 426.2h1.2" stroke="#20b0ff" stroke-width="1.2" stroke-opacity="0.75" fill="none"/>
<path d="M600.5 397h1.3M653.7 434.1h1.3M673.2 469.4h1.3M462.6 380.9h1.3M624.8 409.9h1.3M431.2 384h1.3M658 537.8h1.3M637.3 419.9h1.3M676.3 491.9h1.3M650.3 432.3h1.3M673.2 469.6h1.3M673.3 504.7h1.3M655.3 433.6h1.3M661.5 447.1h1.3M389.2 401.3h1.3M645.3 427.4h1.3M612.4 403.1h1.3M674.3 477.4h1.3M672.2 461.9h1.3M673.4 473.2h1.3M668.3 514.9h1.3M668.7 515.5h1.3M675.1 480.1h1.3M654.2 542.7h1.3M647.3 545.2h1.3M673.3 467.4h1.3M599 397.5h1.3M591.8 396h1.3M671.3 468.4h1.3M651.5 544.7h1.3M653.1 543.5h1.3M399 396.3h1.3M673.3 466.4h1.3M672 468.5h1.3M674.4 480.3h1.3M676.3 482.9h1.3M355.4 420.7h1.3M605 400.4h1.3M487.7 377.3h1.3M433.9 383.9h1.3M612.1 574h1.3M676.6 488.5h1.3M677.6 492.7h1.3M675.5 472.4h1.3M586.2 583.7h1.3M563 387.1h1.3M674.7 492.5h1.3M591.9 392.8h1.3M626.5 413.3h1.3M660.2 534.6h1.3M585 583h1.3M677.5 485.8h1.3M676.8 481.4h1.3M673.1 468.5h1.3M675.3 478.9h1.3M635.8 557.1h1.3M678 487.2h1.3M475.6 379.3h1.3M638.7 420.5h1.3M646.1 428.5h1.3M676.9 499.9h1.3M439.8 381.5h1.3M666.5 451.4h1.3M667.5 452.3h1.3M674.3 502.6h1.3M562.5 383.6h1.3M675.8 501.2h1.3M541.5 381.1h1.3M637.4 554.1h1.3M484.8 377.3h1.3M658.9 439.2h1.3M646.5 546.2h1.3M553.1 384.5h1.3M392.8 396.3h1.3M642 551.8h1.3M650.5 541.5h1.3M374.4 407.4h1.3M651.5 434.2h1.3M661.8 446.8h1.3M590 392.5h1.3M669.8 514.1h1.3M667.9 459.3h1.3M640.1 550.8h1.3M663.1 531.3h1.3M654.9 436.8h1.3M667.8 458.6h1.3M668.9 515.7h1.3M672 462.3h1.3M673.8 474.5h1.3M669.5 518.7h1.3M599.8 574.7h1.3M649.2 544.6h1.3M581.2 582.3h1.3M671.6 464.4h1.3M624.9 409h1.3M669.4 455.3h1.3M374.6 409h1.3M676.3 481.9h1.3M677 476.8h1.3M527.4 380.9h1.3M677.2 490.7h1.3M674.8 485.7h1.3M631.6 414.5h1.3M672.7 501.1h1.3M479.8 376.8h1.3M677.5 486.3h1.3M647.7 430.1h1.3M618 405.2h1.3M377.7 407.2h1.3M643.5 425h1.3M644.2 426.2h1.3M662.1 527.9h1.3M605 576.6h1.3M662 530.2h1.3M667.9 457h1.3M643.9 550.2h1.3M672.1 507.7h1.3M654.3 542.7h1.3M644.7 424h1.3M408.5 392.9h1.3M670.2 511.5h1.3M382.1 401.2h1.3M668.4 460.6h1.3M676.2 480.9h1.3M631.9 414.3h1.3" stroke="#e8a818" stroke-width="1.3" stroke-opacity="0.9" fill="none"/>
<path d="M646.7 546.3h1.3M588.4 579.3h1.3M676.5 486.5h1.3M599.1 396.1h1.3M621.9 564.5h1.3M661.7 530.9h1.3M373.2 406.4h1.3M665.1 526.4h1.3M647.5 427.9h1.3M651.8 432.1h1.3M637.5 419.3h1.3M457.5 380.2h1.3M503.6 379.2h1.3M675.9 476.5h1.3M572.7 386.8h1.3M671 467.5h1.3M585.4 391.2h1.3M461.8 380.5h1.3M668.3 457.2h1.3M662.1 532.3h1.3M671.2 513.9h1.3M390.4 399.1h1.3M637.7 552.3h1.3M588.3 391.5h1.3M522.8 379.8h1.3M639.6 422.5h1.3M649.9 433h1.3M624.1 409.8h1.3M674.8 506.9h1.3M624.8 409.8h1.3M674.2 476.6h1.3M672 508.8h1.3M667.6 524.9h1.3M459.9 380.8h1.3M671.6 509.5h1.3M576.4 587h1.3M664.1 526.6h1.3M671.8 459.1h1.3M638.3 419h1.3M653 434.3h1.3M669.3 457.8h1.3M594.4 396.2h1.3M444.6 380.7h1.3M661 446.3h1.3M666 521.9h1.3M588.3 391.7h1.3M502 376.5h1.3M637.7 556.3h1.3M658.5 533.2h1.3M544.1 381.3h1.3M394.7 396h1.3M557.9 385.8h1.3M620.4 406.3h1.3M675 505.5h1.3M673.3 510.7h1.3M664.5 448.8h1.3M629.5 563.3h1.3M602.7 398.3h1.3M670.8 456.9h1.3M505.8 376.2h1.3M670.8 513h1.3M367.1 413.4h1.3M347.3 427.8h1.3M643.7 423.6h1.3M661.2 442h1.3M643.6 550.3h1.3M658.5 438.6h1.3M586.3 392.3h1.3M655.8 439.3h1.3M677.2 479.6h1.3M651.2 541.9h1.3M515.1 377.9h1.3M630.8 414.5h1.3M669.5 459.3h1.3M640.9 424.7h1.3M674.1 501.9h1.3M658.4 437.5h1.3M673.3 469.9h1.3M672.8 513.2h1.3M654 432.4h1.3M672.8 500.1h1.3M634 417.2h1.3M369.5 409.8h1.3M636.2 556.4h1.3M658.6 440.1h1.3M633.2 415.3h1.3M651.5 546h1.3M648.1 544.2h1.3M539.4 379.5h1.3M642.4 553.6h1.3M434.4 384.3h1.3M527.4 379.8h1.3M419.6 386.8h1.3M433.7 386.3h1.3M665.9 455h1.3M656.9 437.4h1.3M675.7 498.4h1.3M568.1 385.2h1.3M516.8 378.5h1.3M676 473.9h1.3M493.1 377.9h1.3M579.3 390.9h1.3M671.5 459.6h1.3M668.8 454.2h1.3M655.8 537.9h1.3M632.7 416.1h1.3M664.4 523h1.3M664.4 529.5h1.3M607.9 574.9h1.3M671.1 461.5h1.3M665.9 521.9h1.3M666.8 451.9h1.3M672.4 461.3h1.3M660.1 532h1.3" stroke="#40e0c0" stroke-width="1.3" stroke-opacity="0.9" fill="none"/>
<path d="M570.6 386h1.3M564.3 587.2h1.3M628.3 415h1.3M464.1 380h1.3M620 408.2h1.3M677.5 494.6h1.3M640.3 420.5h1.3M561.9 383.7h1.3M675.4 476.3h1.3M677.5 496.4h1.3M507.3 377.3h1.3M650.9 430.1h1.3M609 400.4h1.3M660.5 444.8h1.3M672.3 463h1.3M599 577.4h1.3M633.9 556.3h1.3M413.9 388.7h1.3M677.6 481.2h1.3M650.1 430.2h1.3M354.7 422.4h1.3M671.5 467.6h1.3M670.6 511.1h1.3M655.2 435.5h1.3M608.1 400h1.3M655.7 437.6h1.3M662.3 526.8h1.3M411 391.6h1.3M503.4 376.2h1.3M670 517.1h1.3M648.2 549.3h1.3M648.9 430.3h1.3M658 533.6h1.3M673 463.2h1.3M673.3 512h1.3M663.7 445h1.3M590.5 393.3h1.3M602.9 397.9h1.3M615.8 571.2h1.3M360 416.3h1.3M674.1 497.6h1.3M674.4 469.1h1.3M673.8 495.7h1.3M674.6 493.9h1.3M673.4 503.6h1.3M635.3 559.9h1.3M668.9 453.6h1.3M626.3 565.8h1.3M520.5 378h1.3M666.8 454.2h1.3M631.4 417.3h1.3M671.4 506.4h1.3M597.2 397.6h1.3M669.8 460h1.3M657.3 437.8h1.3M673.7 474.6h1.3M607.1 401.4h1.3M668.8 458.9h1.3M591.3 392.9h1.3M626.3 409.7h1.3M677.8 489.2h1.3M667.8 524.6h1.3M655.6 435.9h1.3M643.9 425.4h1.3M544.7 380.3h1.3M675.1 473.5h1.3M417.1 387.5h1.3M652 431.1h1.3M662.6 445.8h1.3M624.9 409.3h1.3M613.9 570.8h1.3M677.8 493.7h1.3M497 378.6h1.3M659.3 440h1.3M669.9 512.6h1.3M671.8 467.6h1.3M602.9 399.7h1.3M660.5 535h1.3M640.7 553.1h1.3M646.9 427.8h1.3M664.8 523h1.3M561.3 591.3h1.3M674.6 502.2h1.3M624.1 408.5h1.3M524.6 378h1.3M674 480.6h1.3M492.8 376.9h1.3M441.3 384.3h1.3M438.8 384.7h1.3M673.5 512.8h1.3M647.9 430.2h1.3M674.9 477.7h1.3M620.6 566.7h1.3M361.8 413.1h1.3M672.2 463h1.3M645 427.7h1.3M674.5 486.2h1.3M496.2 375.9h1.3M612.3 404.3h1.3M615.4 404.8h1.3M592.7 395.4h1.3M651.4 540.3h1.3M406 390.9h1.3M652.7 434.5h1.3M593.7 396.5h1.3M355.6 418.5h1.3M635.4 555.8h1.3M621.7 408.2h1.3M675.9 473.3h1.3M655.5 535.7h1.3M427 385.4h1.3M664.4 530.4h1.3M619.6 406.8h1.3M674.9 504.9h1.3M585.4 392.5h1.3M625 409.9h1.3M674.4 466h1.3M675.6 484.5h1.3M648.7 547.3h1.3M665.1 447.5h1.3M649.2 428.9h1.3M613.2 573.1h1.3M537.9 381.6h1.3M443.9 382.1h1.3M652.7 541.6h1.3M618.2 405.2h1.3M667.2 451.2h1.3M672.8 467.5h1.3M526 379.2h1.3M615.1 403.7h1.3M670.1 519.8h1.3M618.2 408.2h1.3M656.6 435.4h1.3M672 514.5h1.3M639.9 423.3h1.3M667.4 516.6h1.3M673.7 476.9h1.3M601.9 576.7h1.3M669.6 460.3h1.3M659.5 439.6h1.3M661.8 442.6h1.3M673.5 466.3h1.3M599.9 396.3h1.3M675.3 470.6h1.3M606.1 401.3h1.3M664.2 448.4h1.3M673.7 501.9h1.3M637 417.8h1.3M579.7 390.1h1.3M640.9 424.1h1.3M677.6 488.6h1.3M668.6 460.6h1.3M661.3 442.1h1.3M564.3 386.8h1.3M629.4 413.7h1.3M670.9 507.8h1.3M632.1 561.3h1.3M643.6 426.5h1.3M378.6 405.2h1.3M672.1 466.7h1.3M674.7 469.7h1.3M673.9 482.5h1.3M624.8 409.8h1.3M654.9 540.4h1.3M471.1 377.2h1.3M651.6 432.6h1.3M621.7 408.3h1.3M674.1 499h1.3M672.7 470.7h1.3M654.6 542.5h1.3M531.2 378.7h1.3M605.8 402.2h1.3M636.2 418.8h1.3M664.7 529.1h1.3M410.1 390.4h1.3M677.7 494.1h1.3M599.9 396.8h1.3M673.4 463.1h1.3M675.5 497.1h1.3M406.7 391.2h1.3M673.8 469.6h1.3M642 424.7h1.3M675.6 506h1.3M469.6 378.3h1.3M672.6 466.3h1.3M667.6 455.4h1.3M639.7 420h1.3M613.4 405.1h1.3M670.1 460.9h1.3M629.7 412.1h1.3M646.9 549.8h1.3M595.5 396.4h1.3M386.7 401.2h1.3M668 517.8h1.3M590.2 393.8h1.3M643 424.6h1.3M656.4 439.1h1.3M364.4 413.2h1.3M669.1 457.7h1.3M657.4 436.2h1.3M658.6 532.6h1.3M570.2 584.9h1.3M578 388.1h1.3M666.3 526.4h1.3M661.4 530h1.3M677 482.2h1.3M672.5 503.4h1.3M517.5 379h1.3M401.1 393.6h1.3M476.9 377.7h1.3M674.5 472.6h1.3M673.9 509.6h1.3M442.5 382.7h1.3M675.6 491.6h1.3M397.8 393.8h1.3" stroke="#700000" stroke-width="1.3" stroke-opacity="0.9" fill="none"/>
<path d="M670 512.7h1.3M672.8 512.9h1.3M672.3 509.9h1.3M609.5 403.7h1.3M655.6 541.4h1.3M551.5 383.9h1.3M628.2 411.3h1.3M514.8 379.3h1.3M661.1 442.7h1.3M671.5 468.6h1.3M672.9 470h1.3M641.6 549.8h1.3M613.5 573.2h1.3M667.4 518.6h1.3M619.6 567.6h1.3M615.6 569.3h1.3M672.7 468.8h1.3M607.5 401.3h1.3M671.6 514.7h1.3M669.7 461.4h1.3M670 456.5h1.3M648.5 427.5h1.3M665 526.9h1.3M670 512.9h1.3M665.2 522.7h1.3M496.3 379.1h1.3M675.3 485.1h1.3M640.8 424.6h1.3M637.8 554.3h1.3M654.7 540h1.3M670.9 517.4h1.3M649.1 430.1h1.3M668.4 458.3h1.3M516.3 377.3h1.3M423.9 385.6h1.3M676.4 477h1.3M670.5 463.7h1.3M631.7 414.8h1.3M614.5 404.8h1.3M604.9 398.8h1.3M658.9 443.7h1.3M657.4 439.9h1.3M625.4 411.8h1.3M598 397.1h1.3M429.7 383.6h1.3M673.8 511h1.3M624 410.8h1.3M511.7 379.6h1.3M355.5 417.8h1.3M390.2 398.9h1.3M564.9 384.7h1.3M676.3 474.7h1.3M669.8 454.8h1.3M649.8 543.3h1.3M660.9 440.9h1.3M418.1 389.1h1.3M566.2 587.5h1.3M658.2 437.7h1.3M676 474.6h1.3M499.6 378.8h1.3M667.5 450.5h1.3M668.2 518.9h1.3M676.3 479.6h1.3M599.3 396.2h1.3M617.6 405.9h1.3M671.8 469.1h1.3M677.3 494.9h1.3M608.7 575.5h1.3M614 403.8h1.3M654.8 536.9h1.3M423.6 386.4h1.3M639 556.1h1.3M656.8 536.9h1.3M666.8 525.2h1.3M674.1 469.2h1.3M661.2 442.5h1.3M668.3 519.5h1.3M669.3 513h1.3M419.9 389.8h1.3M625.8 409.9h1.3M551.2 383h1.3M676.4 480h1.3M674.4 479.3h1.3M677.1 486.8h1.3M621.6 567.2h1.3M653.4 436.3h1.3M652.3 432.8h1.3M649 546.1h1.3M422.2 387.2h1.3M616.5 566.4h1.3M525.2 380.2h1.3M669 522.5h1.3M654.1 432.9h1.3M677.1 494.7h1.3M626.9 564.3h1.3M624.9 410.1h1.3M412.5 388.7h1.3M622.5 409.9h1.3M668 516.4h1.3M667.9 523.5h1.3M677.7 489.8h1.3M609.2 404h1.3" stroke="#ffd020" stroke-width="1.3" stroke-opacity="0.9" fill="none"/>
<path d="M663.3 524.8h1.3M616.3 570.3h1.3M595.9 580.6h1.3M662.6 446h1.3M639.9 421.3h1.3M670.6 457.9h1.3M630.8 413.8h1.3M659.8 531.3h1.3M676.8 489.7h1.3M595.8 576.4h1.3M455.1 382.2h1.3M652.6 433.5h1.3M458.1 381.5h1.3M675.6 470.5h1.3M675.1 504.6h1.3M565.3 387.9h1.3M656.7 539.4h1.3M669.2 519.3h1.3M483.9 377.1h1.3M640.1 420h1.3M484.8 377.2h1.3M673.5 498.4h1.3M604.6 398.4h1.3M529.1 379.5h1.3M663.7 446h1.3M675.7 485.4h1.3M392 399.3h1.3M622.2 408.3h1.3M377.7 406h1.3M441.2 384.2h1.3M448.8 381.4h1.3M674.1 481.7h1.3M675.9 490.9h1.3M597.9 395.9h1.3M667.7 455.8h1.3M599.4 395.7h1.3M677.4 487.8h1.3M671 509.8h1.3M538.1 381.1h1.3M571.3 588.8h1.3M674.5 481.3h1.3M497.9 376.7h1.3M676.1 484.2h1.3M616.2 567.1h1.3M379 404.3h1.3M648 428.8h1.3M676.3 493.6h1.3M674.6 495.4h1.3M662.8 532.8h1.3M410.8 392.3h1.3M474.9 377.9h1.3M413.7 390h1.3M675.9 499.3h1.3M670.9 459.7h1.3M472.5 380h1.3M490.3 377.7h1.3M645.1 425.5h1.3M667.8 456.4h1.3M638.7 419h1.3M665.5 452.1h1.3M631.6 560.5h1.3M607.5 572.5h1.3M661.5 443.8h1.3M364.5 413.6h1.3M400.5 394.7h1.3M674.1 482.6h1.3M421 386.3h1.3M573.7 387.6h1.3M670.5 456.2h1.3M639.6 420.2h1.3M597.1 578.6h1.3M673.8 503.9h1.3M637.4 420.2h1.3M671.2 518.5h1.3M643.6 549.3h1.3M391.7 400.2h1.3M596.9 577.2h1.3M614.6 572.7h1.3M670.2 464.3h1.3M619.4 566.3h1.3M655.4 437.3h1.3M675.7 493.8h1.3M507.9 376.7h1.3M360.9 415.6h1.3M591.5 578.8h1.3M646.9 546.9h1.3M638.8 419.9h1.3M661 444.7h1.3M624.9 563.4h1.3M629.8 561.2h1.3M623.3 562.7h1.3M658.7 443.3h1.3M416.3 389.7h1.3M517.3 380h1.3M656.1 435.2h1.3M640.2 551.9h1.3M652.1 430.6h1.3M662.1 446h1.3M639.5 552.5h1.3M626.3 564.5h1.3M654.6 434.5h1.3M597 396.8h1.3M676.7 497.6h1.3M660.8 440.9h1.3M677.9 486.2h1.3M658.1 437h1.3M676.1 476.3h1.3M677 482.2h1.3M642.5 554.4h1.3M391.6 397.6h1.3M627.6 413.5h1.3M513.7 378.4h1.3M609.3 572.9h1.3M669 513.1h1.3M673.2 466.2h1.3M479.3 378.2h1.3M592.8 395.8h1.3M659.3 536.1h1.3M510.8 378.5h1.3M677.3 481.8h1.3M441.6 381.5h1.3M624.7 563.3h1.3M598 397.1h1.3M654.7 433.1h1.3M655.5 536.7h1.3M396 395h1.3M664.1 444.9h1.3M656.6 436.7h1.3M493.5 377.1h1.3M674.8 475h1.3M662.8 531.7h1.3M473.2 379.6h1.3M622.9 564.5h1.3M674.9 476.1h1.3M665.8 453.5h1.3M567.1 387.1h1.3M648.4 430.7h1.3M591.9 580.6h1.3M675.6 504.6h1.3M623.9 564.3h1.3M675.4 470.1h1.3M676.3 502.4h1.3M658.9 440h1.3M594.9 579h1.3M668.9 453.5h1.3M637.7 556.3h1.3M489.3 376.6h1.3M640.7 423.1h1.3M644.8 427.5h1.3M626.6 411h1.3M651.4 544h1.3M646.9 545.5h1.3M611.4 573.4h1.3M562.3 383.7h1.3M646.3 427.2h1.3M638.6 552.4h1.3M658 537h1.3M546.6 590.4h1.3M641.9 421.7h1.3M623.6 410.1h1.3M675.8 503.9h1.3M613.5 573.3h1.3M667.8 455.6h1.3M565.9 588.5h1.3M674.2 493.8h1.3M635.3 416.7h1.3M662.2 444.3h1.3M672.6 503h1.3M667.3 457.7h1.3M583.6 391.5h1.3M488.5 376.8h1.3M676.3 476.3h1.3M397.3 397.4h1.3M606.7 574.2h1.3M573.6 387.7h1.3M647.5 430.5h1.3M601.2 399.9h1.3M573 389.4h1.3M674.1 476h1.3M638.5 422.5h1.3M673 506.1h1.3M673.7 511.3h1.3M630.1 559.7h1.3M603.3 399.3h1.3M504.3 377.6h1.3M646.9 425.5h1.3M648.7 427.3h1.3M677.2 482.8h1.3M639.1 418.8h1.3M674.7 487.5h1.3M631.5 561.8h1.3M479 376.4h1.3M568 585.3h1.3M625.6 409.5h1.3M669.8 519.7h1.3M649.8 541.6h1.3M506.5 379h1.3M524.1 380.1h1.3M468.4 377.5h1.3M672 464h1.3M672.7 500.8h1.3M348.2 427h1.3M599.5 398.7h1.3M674.6 485.2h1.3M438.9 382.3h1.3M516 376.7h1.3M665.6 522.7h1.3M588.8 580.8h1.3M563.8 384.6h1.3M517.6 378.5h1.3M672.5 461.7h1.3M676.4 494.1h1.3M579 389.9h1.3M670.9 458.3h1.3M427.4 384.2h1.3M644.3 551.4h1.3M634.9 554.8h1.3M608.7 402.6h1.3M655 538.8h1.3M640.8 422.8h1.3M656.7 534.5h1.3M443.6 380.7h1.3M632.5 418.1h1.3M654.7 435.4h1.3M671.2 459.9h1.3M594.7 577.6h1.3M623 408.1h1.3M440.8 383.1h1.3M653.8 435.3h1.3M597.5 577.9h1.3M664.8 449.4h1.3M596 577.9h1.3M609.5 402.1h1.3M646.6 425.8h1.3M654.9 535.9h1.3M675.7 504.9h1.3M433.3 382.9h1.3M675.7 501.9h1.3M634.8 555.6h1.3M634.7 557.7h1.3M675.2 469.9h1.3M414.2 391.5h1.3M645.3 426.5h1.3M591.3 392.6h1.3M608.1 575.6h1.3M647.2 429.9h1.3M668.5 457.3h1.3M630.6 412.5h1.3M675 504.1h1.3M673 505.4h1.3M451 381.9h1.3M502.8 377.3h1.3M620.9 408.5h1.3M666.5 524.8h1.3M675.7 472.6h1.3M598.1 580.4h1.3M602.2 400.4h1.3M622.8 565h1.3M595.3 394.8h1.3M619.7 568.2h1.3M670 515.3h1.3M534.3 379.7h1.3M655.6 540.5h1.3M674.8 485.5h1.3M444.2 382.9h1.3M666.1 526.4h1.3M673.3 512.2h1.3M662.6 446.2h1.3M640.6 553.3h1.3M582.5 392.3h1.3M644 423.4h1.3M591.1 393.2h1.3M577.4 585.7h1.3M500.2 376.7h1.3M362.1 413.4h1.3M402.2 394.8h1.3M659.8 443.6h1.3M654.1 437.7h1.3M647.8 430.6h1.3M642.8 423.6h1.3M677.1 494.4h1.3M421.5 389.4h1.3M674.8 499.5h1.3M525.5 378h1.3M635.5 559.5h1.3M617.6 570.6h1.3M460.6 380.8h1.3M648.1 547.9h1.3M391 397h1.3M675.7 470.1h1.3M400.5 393.2h1.3M635.1 555h1.3M635.5 418.1h1.3M573.1 387.2h1.3M666.8 452h1.3M637.6 420.9h1.3M359.1 416.3h1.3M637.7 557.8h1.3M673.1 472.7h1.3M668.9 520.7h1.3M657.8 534.3h1.3M606.4 401.2h1.3M388 401.8h1.3M663.5 531.6h1.3M663.1 527.1h1.3M618.3 569.9h1.3" stroke="#b01000" stroke-width="1.3" stroke-opacity="0.9" fill="none"/>
<path d="M460.3 381.6h1.3M674.4 509.1h1.3M619 407.5h1.3M674.2 495.5h1.3M600.3 576.7h1.3M654.7 433.6h1.3M587.4 584.5h1.3M627.1 560h1.3M657.9 441.5h1.3M666.2 453.8h1.3M543.8 382h1.3M654.9 437.2h1.3M637.5 420.6h1.3M490.8 376.6h1.3M638.8 420.3h1.3M539.1 379.4h1.3M609.4 401.7h1.3M552.9 381.4h1.3M651.1 433.2h1.3M648.3 430.4h1.3M604.5 575.3h1.3M659 439.1h1.3M632 559.2h1.3M442.4 382.7h1.3M622.1 564h1.3M677 481.9h1.3M669.8 462.6h1.3M605.5 401.7h1.3M418.8 389.5h1.3M619.3 566.8h1.3M666.7 449.1h1.3M645.8 550.9h1.3M673.8 498.9h1.3M674.3 465.7h1.3M571.1 586h1.3M673.5 503h1.3M470 377.3h1.3M662.5 448.4h1.3M669.8 456.3h1.3M641.5 421.6h1.3M645.3 424.7h1.3M439 384h1.3M653.5 540.4h1.3M677.3 484h1.3M664.8 449.9h1.3M619.1 406.6h1.3M662.9 447.4h1.3M638.1 419h1.3M530.2 379h1.3M675.2 494.2h1.3M674.5 470.7h1.3M581.4 583.3h1.3M433.4 384.1h1.3M670.9 458.6h1.3M607.6 574.4h1.3M615.7 406.1h1.3M457.6 381.1h1.3M639.2 551.6h1.3M605.9 571.7h1.3M664 450.4h1.3M530.5 381h1.3M640.7 421.4h1.3M638.2 420.5h1.3M662.9 448.2h1.3M669.8 460.7h1.3M428.8 385.8h1.3M665 449.1h1.3M611.1 404.5h1.3M587.2 394.4h1.3M553.4 383.9h1.3M643.8 425.8h1.3M515.1 377.4h1.3M643.8 553.1h1.3M643.9 551.3h1.3M664.4 525.2h1.3M421.1 388.2h1.3M675.1 486h1.3M634.5 556.1h1.3M530 380.7h1.3M665.1 446.5h1.3M605.5 576.9h1.3M652.5 541.9h1.3M629.8 415.7h1.3M527.3 379.6h1.3M568.9 385.6h1.3M577.3 388.2h1.3M675.6 500.2h1.3M617 405.1h1.3M381.8 401h1.3M617.2 407.4h1.3M670.5 457.3h1.3M641 420.5h1.3M623.3 565.8h1.3" stroke="#ff6000" stroke-width="1.3" stroke-opacity="0.9" fill="none"/>
<path d="M647.5 362.8L658.4 362.8L741.9 671.7L724.6 671.7Z" fill="#10b8f0" fill-opacity="0.5" filter="url(#bl2)"/>
<path d="M648.3 362.8L657.5 362.8L740.6 671.7L726 671.7Z" fill="#e8c820" fill-opacity="0.75"/>
<path d="M648.9 362.8L657 362.8L739.7 671.7L726.8 671.7Z" fill="#840000"/>
<path d="M728.6 628.3h1.1M688 525.2h1.1M665.9 393.5h1.1M685.9 474.4h1.1M698 562.2h1.1M720.5 646.3h1.1M666.4 402.1h1.1M692.3 538.9h1.1M668.2 441.2h1.1M671.1 455.5h1.1M712.7 618.3h1.1M715.8 588.1h1.1M737 662.4h1.1M672.6 463.9h1.1M657.1 395.5h1.1M661 415.5h1.1M719 637.8h1.1M693 536.4h1.1M673.5 429.6h1.1M688.7 479.6h1.1M732.9 642.4h1.1M725.7 620.4h1.1M682.2 501h1.1M694.8 502.5h1.1M655.4 388.8h1.1M684.5 507.4h1.1M659.8 375.4h1.1M661.9 418.8h1.1M707.3 596.7h1.1M693.5 499.5h1.1M690 485.3h1.1M690.6 493.4h1.1M696 552.2h1.1M682.2 459.2h1.1M684.3 506.5h1.1M739.4 666.4h1.1M681.7 459.8h1.1M715.4 631.7h1.1M670.9 457.9h1.1M660.9 382.2h1.1M681.5 496.5h1.1M687.9 477.6h1.1M693.9 504.5h1.1M661.3 419h1.1M685.8 472h1.1M668.4 440.9h1.1M653.8 387.2h1.1M666.7 440.6h1.1M709 607.3h1.1M653.4 388.5h1.1M722.7 606.7h1.1M674.9 427.8h1.1M732.1 644.9h1.1M673.9 430.2h1.1M662.7 421.7h1.1M709.6 607.5h1.1M689.7 530h1.1M657.9 366.1h1.1M692.2 499.9h1.1M671.9 420.7h1.1M720.1 649.4h1.1M686.2 469.4h1.1M660 406.5h1.1M723.4 613.3h1.1M666.5 432.4h1.1M688.3 522h1.1M705.7 585.8h1.1M679.6 488.2h1.1M657.6 368.9h1.1M701.5 575.3h1.1M713.6 577.2h1.1M691.5 494.3h1.1M647.5 364.7h1.1M716.2 635.8h1.1M665.9 433.5h1.1M669.6 407.1h1.1M672 422.8h1.1M695 506.1h1.1M705.4 548.9h1.1M698.7 515.1h1.1M667.7 401.4h1.1M682.1 454.2h1.1M722 602.9h1.1M707.8 601.2h1.1M678.1 484.8h1.1M725.1 616.1h1.1M678.6 480.1h1.1M650.3 371h1.1" stroke="#ffe020" stroke-width="1.1" stroke-opacity="0.9" fill="none"/>
<path d="M666.5 434.2h1.1M692.1 533.6h1.1M658.6 366h1.1M734.1 655.3h1.1M685.3 468.3h1.1M657.7 403.5h1.1M658 403.4h1.1M718.6 640.3h1.1M699 568h1.1M678.1 443.1h1.1M701.4 528.1h1.1M724.4 670.4h1.1M686 475.6h1.1M696 555.4h1.1M726.1 670.9h1.1M669.3 446.2h1.1M710.4 563.6h1.1M691 489.7h1.1M682.7 495.5h1.1M725.7 665h1.1M719.2 640.7h1.1M733.1 649.9h1.1M679.3 446.7h1.1M651.1 375.1h1.1M658.1 405.1h1.1M717.2 584.5h1.1M666.1 401.6h1.1M683.9 504.3h1.1M707.7 598.5h1.1M661.9 416.6h1.1M683.9 467.6h1.1M692.8 543.3h1.1M695.5 554.8h1.1M714.5 583.2h1.1M738.6 663.3h1.1M682.5 463.1h1.1M721 655.5h1.1M661.4 382.1h1.1M711.8 564.5h1.1M671.1 412.6h1.1M727.2 630.8h1.1M712.4 573.7h1.1M693.1 541.2h1.1M690.3 528.5h1.1M672.8 426.7h1.1M713.3 624.8h1.1M695.4 508.8h1.1M670.3 452.1h1.1M661.4 415.1h1.1M686.5 510.5h1.1M664 389.4h1.1M686.8 472.7h1.1M672.4 454.8h1.1M691.8 492.5h1.1M688.5 481.4h1.1M709.6 607.1h1.1M689.1 487.3h1.1M654.8 394.1h1.1M703.9 538h1.1M709.5 559.2h1.1M684.1 505.9h1.1M706.4 589.9h1.1M703.8 535.7h1.1M669.2 446.6h1.1M683.4 501.6h1.1M738.3 664.2h1.1M700.8 525.1h1.1M684.8 463.4h1.1M702.8 530.6h1.1M678.1 442.5h1.1M700.3 569.4h1.1M728.2 628.4h1.1M671.6 418.3h1.1M725.3 622.8h1.1M714 621.4h1.1M657.5 366.4h1.1M648.6 368.3h1.1M671.1 458.3h1.1M659.9 412h1.1M710 559.2h1.1M667.1 405.4h1.1M688.7 523.6h1.1M657.1 363.6h1.1M685.8 475.8h1.1" stroke="#40ffc0" stroke-width="1.1" stroke-opacity="0.9" fill="none"/>
<path d="M660.5 381h1.5M674 434h1.5M691.9 518.3h1.5M713.7 610.2h1.5M708.9 574.6h1.5M682.8 478h1.5M679.1 459.9h1.5M698.6 534.8h1.5M689.6 518.5h1.5M702.6 558.6h1.5M728.4 657.2h1.5M687 506.8h1.5M662.3 396.7h1.5M668.1 409.4h1.5M720.6 633.5h1.5M675.9 457h1.5M673 428.1h1.5M705.8 559.2h1.5M702.2 564.3h1.5M681.4 485.7h1.5M695.8 549.5h1.5M659.2 375.2h1.5M707.7 565.7h1.5M677.3 462.7h1.5M699.3 540.3h1.5M681 488.4h1.5M729.5 638.9h1.5M664.2 422.3h1.5M681.1 461.8h1.5M675.1 450.1h1.5M682.9 481.6h1.5M671.8 446.3h1.5M703.3 574.6h1.5M716.6 628.7h1.5M674 437.7h1.5M726.1 664.8h1.5M723.7 634h1.5M719.1 635.3h1.5M680 483.6h1.5M691.7 498.3h1.5M672 437.7h1.5M697.2 525.8h1.5M717 622.9h1.5M728.3 644.9h1.5M705.2 572.9h1.5M652.8 368.3h1.5M728.4 636.3h1.5M716.3 617.9h1.5M698.8 544.3h1.5M708.7 590.5h1.5M714.6 608.8h1.5M727 636.7h1.5M726.3 661.5h1.5M659.7 402.6h1.5M716.1 589.1h1.5M677.7 464h1.5M671.6 437.1h1.5M670.3 436.2h1.5M700.1 543.7h1.5M708.1 573.5h1.5M725.8 625h1.5M714.5 614h1.5M690.2 501.9h1.5M703.7 575h1.5M664.9 405h1.5M668 412.2h1.5M679.2 462.6h1.5M696.6 544.5h1.5M679.1 474.2h1.5M670.1 422.2h1.5M718.2 598.5h1.5M649.6 364.6h1.5M657.2 385.3h1.5M651.3 365.9h1.5M734 669.2h1.5M667 410.4h1.5M720 624.6h1.5M658.9 394.5h1.5M685.7 505.2h1.5M710.1 582.5h1.5M717.2 625h1.5M696.9 536.9h1.5M650.5 363.8h1.5M653 380.4h1.5M732.8 664.4h1.5M718.9 631.7h1.5M706.8 557.7h1.5M664.1 421.4h1.5M667 433.2h1.5M713.9 602.1h1.5M662.3 394.1h1.5M712.8 585.7h1.5M651.7 367h1.5M719.4 640.8h1.5M661.3 414h1.5M679.9 468.3h1.5M674 432.7h1.5M691.9 521.1h1.5M722.3 624.5h1.5M652.5 367.7h1.5M722.1 636.5h1.5M716.6 627.1h1.5M730.4 664.2h1.5M688.7 502.7h1.5M656.8 383.1h1.5M703 556.8h1.5M686.4 512.7h1.5M707.1 564.5h1.5M683.3 498.4h1.5M722.6 653.3h1.5M680.5 457.1h1.5M708.1 597h1.5M726.2 669.1h1.5M703.5 560h1.5M689.8 495.1h1.5M680.6 484.7h1.5M700.7 550h1.5M659 388.7h1.5M725.8 653.5h1.5M680.6 488.9h1.5M722.4 653.2h1.5M712 610.1h1.5M695.4 544.9h1.5M694.5 517.7h1.5M660.4 404.2h1.5M730.6 663.3h1.5M683.6 477.6h1.5M702.3 537.9h1.5M663 408.9h1.5M694.3 514.1h1.5M697.5 530.9h1.5M654.3 380.9h1.5M664.9 420.1h1.5M670.3 445h1.5M709.4 567.6h1.5M660.5 399.2h1.5M656.8 382.7h1.5M671.3 437.8h1.5M671.4 447.4h1.5M698.1 531h1.5M674.6 461.6h1.5M701.9 557.3h1.5M677.4 470.8h1.5M668.8 415.2h1.5M731.3 656.9h1.5M666.6 423.1h1.5M668.3 425.4h1.5M689 497.2h1.5M708.2 573.2h1.5M651.7 371.2h1.5M668.3 435.3h1.5M711.9 606.6h1.5M718.3 627.3h1.5M677.6 452.4h1.5M703.2 574.9h1.5M692.9 533.9h1.5M656.4 376.1h1.5M715.9 589.1h1.5M681.8 462.3h1.5M699.1 526.2h1.5M710.5 577h1.5M671.1 439.4h1.5M698.9 532h1.5M668.2 419.6h1.5M660 397.4h1.5M663.2 403.4h1.5M692.2 526.4h1.5M663.1 410.2h1.5M714.7 585h1.5M661.5 413.9h1.5M696.1 542h1.5M659.5 386.6h1.5M706.7 585.1h1.5M667.9 423.7h1.5M665.3 410.1h1.5M714.2 603.3h1.5M679.8 458.4h1.5M696.2 538h1.5M694.1 521.8h1.5M676.9 472.3h1.5M704.6 571h1.5M663.6 391.4h1.5M728.2 642.1h1.5M677 458.4h1.5M688.9 492.3h1.5M674 450.3h1.5M690.9 505.8h1.5M693.3 528.6h1.5M691 498.5h1.5M664.9 401.1h1.5M660.6 382.6h1.5M692.7 529.1h1.5M700.5 533.4h1.5M673.3 461.1h1.5M679 477.2h1.5M683.6 484.2h1.5M715 620.3h1.5M656.6 381.9h1.5M694 510.9h1.5M654.1 379.1h1.5M687.6 492.3h1.5M654 377.2h1.5M683.4 488.1h1.5M690.9 512.1h1.5M655.9 366.8h1.5M712.1 587.6h1.5M655.2 369.3h1.5" stroke="#b81800" stroke-width="1.5" stroke-opacity="0.9" fill="none"/>
<path d="M739.6 667.6h1.5M701.4 573.8h1.5M715.5 634.7h1.5M706.6 545.4h1.5M673.5 463.1h1.5M703.7 579.1h1.5M657.6 398.6h1.5M660.8 380.8h1.5M691.8 537.7h1.5M682.1 495.2h1.5M678.5 480.9h1.5M701.9 529.6h1.5M690.8 489.3h1.5M698.4 560.9h1.5M667.3 437h1.5M718.5 591.6h1.5M680.7 449.1h1.5M649 371.3h1.5M665.7 400.5h1.5M713.8 571.9h1.5M666.1 432.9h1.5M688.1 520.7h1.5M679.7 487.1h1.5M657.3 369h1.5M647.3 364.3h1.5M684.8 511h1.5M674.9 427.3h1.5M659.8 373.8h1.5M664 391.9h1.5M680 488.6h1.5M681.4 451.7h1.5M657.2 396.4h1.5M689 522.7h1.5M660.8 410.9h1.5M697.9 563h1.5M693.2 543.2h1.5M684.4 462.9h1.5M717 641h1.5M680.2 495.7h1.5M657.9 406.5h1.5M668.8 450.3h1.5M731.2 644.8h1.5M736.7 665h1.5M685.1 465.7h1.5M723.4 610.5h1.5M662.1 381.5h1.5M662.8 386.4h1.5M658.1 404.6h1.5M726 666.5h1.5M669.4 452.1h1.5M666.2 437.8h1.5M668.4 447.4h1.5M677 480h1.5M720.9 653.3h1.5M715.2 585.7h1.5M668.5 408.3h1.5M700.4 571.7h1.5M687.4 515.1h1.5M657.6 403.8h1.5M694.7 500.6h1.5M648.5 364.1h1.5M694.7 503.4h1.5M686.9 476.9h1.5M681.7 498.6h1.5M657.2 403.9h1.5M657.1 398.5h1.5M668.4 411h1.5M728.6 636.9h1.5M696 514.4h1.5M667.6 401.9h1.5M669.6 408.5h1.5M692.1 533.4h1.5M685.3 467.4h1.5M650.9 374.2h1.5M676 472.7h1.5M672.4 458h1.5M680.9 490.1h1.5M677.8 480.7h1.5M720.9 656.2h1.5M674.1 428.5h1.5M680.8 451h1.5M724.1 613.7h1.5" stroke="#20b0ff" stroke-width="1.5" stroke-opacity="0.9" fill="none"/>
<path d="M672 434.9h1.5M673.9 462.9h1.5M694.9 537.1h1.5M657.7 380h1.5M664.6 423.2h1.5M689.7 495.9h1.5M682.1 482.1h1.5M689.6 514.7h1.5M691.7 521.6h1.5M675.7 457.7h1.5M733.2 659.7h1.5M653.9 369.8h1.5M722.6 625.5h1.5M723.4 615.9h1.5M707.6 561.2h1.5M653.5 369h1.5M660.4 404.3h1.5M650.4 367.6h1.5M708.8 575.2h1.5M666.6 408.2h1.5M730 666.5h1.5M675.1 446.3h1.5M677 470.3h1.5M705.6 587.9h1.5M712.7 614.4h1.5M665.1 416.1h1.5M673.5 430.7h1.5M719.6 629.7h1.5M721.3 641.9h1.5M655 380.5h1.5M731.4 647.4h1.5M676.1 444.8h1.5M721 644.1h1.5M702.2 539.1h1.5M682.5 492.9h1.5M701.3 569.9h1.5M682.6 478.1h1.5M652.3 365.5h1.5M664.4 414.9h1.5M655.6 374.1h1.5M723 630h1.5M712.8 585.3h1.5M677 470.9h1.5M671.8 452.9h1.5M730.1 666h1.5M685.8 504.4h1.5M698.9 547h1.5M693.4 520.4h1.5M663.4 416h1.5M719.7 636.4h1.5M692.3 531.1h1.5M732.4 658.3h1.5M666.5 418.9h1.5M655.9 376.4h1.5M673.4 436.9h1.5M670.8 436.4h1.5M715.2 601.6h1.5M681.3 478.2h1.5M672.6 443.7h1.5M715.8 620.8h1.5M690.8 517.2h1.5M719.4 604.1h1.5M672.6 430.9h1.5M723.8 629.8h1.5M730.7 662.6h1.5M672.7 454.5h1.5M691.3 506.8h1.5M721.2 616.4h1.5M669.3 432h1.5M718 617.7h1.5M666.3 427.2h1.5M712.8 586.3h1.5M687.9 515.8h1.5M657.5 385.4h1.5M686.1 504.5h1.5M697.4 544.2h1.5M679.5 482.1h1.5M665.9 416.3h1.5M714.3 586.3h1.5M653.3 366h1.5M689.3 503.6h1.5M671.6 439h1.5M658.6 378.5h1.5M712.4 578.2h1.5M669.5 433.7h1.5M692.2 502.3h1.5M655.3 388.3h1.5M653 377.1h1.5M650.9 369.7h1.5M655.2 386.1h1.5M662.7 402.6h1.5M693.3 539.5h1.5M690.7 519.1h1.5M721.9 620.8h1.5M705.3 559.8h1.5M725.8 635.5h1.5M686.1 511.2h1.5M718.2 602.3h1.5M659.8 385.2h1.5M689.4 489.7h1.5M710.1 578.1h1.5M658.3 377.5h1.5M707.4 582h1.5M656.7 388.6h1.5M666.1 417.2h1.5M664.4 403.6h1.5M692.3 519.4h1.5M653.7 370.4h1.5M701 544h1.5M694.1 528.3h1.5M692.1 508.9h1.5M662.2 413.1h1.5M681.7 489.9h1.5M666.7 432.6h1.5M678.9 461.6h1.5M719 626.8h1.5M670.8 430.6h1.5M686.1 491.6h1.5M723.2 654.6h1.5M718.2 599.5h1.5M694.8 511.9h1.5M712.9 595.5h1.5M673.7 454.4h1.5M682.9 489.4h1.5M701.2 533.8h1.5M671 451h1.5M672.2 453.2h1.5M698.2 529.3h1.5M655 365.4h1.5M687.7 501.8h1.5M718 613.3h1.5M727.4 637.8h1.5M706 561.3h1.5M698.2 552h1.5M666.1 420.7h1.5M665.3 408.8h1.5M675.1 456.3h1.5M652.2 366.3h1.5M654.2 378.6h1.5M661.2 394h1.5M651.2 364.5h1.5M675.3 445.8h1.5M716.2 627.5h1.5M716.3 626.5h1.5M693.2 513.2h1.5M669.6 434.1h1.5M689.2 521.2h1.5M668.3 430.4h1.5M715.2 625.9h1.5M707 578.4h1.5M665.5 417.8h1.5M654.8 380.1h1.5M656.7 395.3h1.5M657.8 391.4h1.5M668.6 432.2h1.5M671.5 437.2h1.5M680.1 480.9h1.5M662.8 398.4h1.5M671 421.2h1.5M703.3 541.5h1.5M713.2 596.3h1.5M657.4 387.3h1.5M664.7 402.4h1.5M705.9 564.8h1.5M695.9 529.8h1.5M696.1 533.5h1.5M654.4 383.9h1.5M670 416.1h1.5M721.5 650.1h1.5M730.2 670.8h1.5M689.8 504.7h1.5M685.8 491.1h1.5M679.3 470h1.5M690.1 515.4h1.5M674.3 436.6h1.5M683.8 485.5h1.5M670.7 419.8h1.5M651.7 363.3h1.5M718.3 603.1h1.5M663.6 395h1.5M674.3 451.4h1.5M689.4 498.4h1.5M671.4 437.9h1.5M657.4 388.8h1.5M681.9 473.8h1.5M677.1 441.9h1.5M663.1 407.6h1.5M669.8 437.4h1.5M678.5 449.1h1.5M674.5 442h1.5M724.7 639.1h1.5M691.6 496.9h1.5M691 494h1.5M696.9 543.3h1.5M660.7 405.6h1.5M683.1 467.6h1.5M710.5 582.5h1.5M655.6 371.6h1.5M699.7 541.9h1.5M680.3 475.6h1.5M679.9 476.2h1.5M670.7 440.4h1.5M695.2 533.3h1.5M688.8 496.4h1.5M653.9 373.8h1.5M673.2 433.8h1.5M674.8 451.9h1.5M699.8 538h1.5M679.9 457.9h1.5M699.3 557.8h1.5M684.3 479.5h1.5M690.9 502.5h1.5M692.9 518.5h1.5M653.9 380h1.5M709 594.5h1.5M660.1 383.3h1.5M663.9 396.2h1.5M715.8 588.9h1.5M657.6 383.4h1.5M698.4 536.8h1.5M664.3 416.6h1.5M702.7 569.3h1.5M656.8 392.7h1.5M721.5 628.6h1.5M681.9 470h1.5M678 470.7h1.5M672.4 428.6h1.5M667.7 415.3h1.5M657 388.8h1.5M711.6 608h1.5M700.6 532.9h1.5M701 559.9h1.5M659.9 393.3h1.5M703.9 559.9h1.5M654.2 377.3h1.5M666.7 422.2h1.5M680 484.2h1.5M684.8 488h1.5M698.3 522.6h1.5M698.8 530.9h1.5M705 580.3h1.5M678.4 452.7h1.5M721.2 616.1h1.5M661.2 397.8h1.5M708.3 572h1.5M729.9 665.3h1.5M711 592.6h1.5M700.5 529.8h1.5M704.2 580.2h1.5M723.4 653.1h1.5M678.1 460.2h1.5M666.1 408h1.5M706.9 577.7h1.5M657.5 388.4h1.5M700.4 539.6h1.5M668.6 413.3h1.5M661.2 391h1.5M675.5 453h1.5M694.1 526.3h1.5M688.8 487.6h1.5M707.7 580h1.5M682.3 472.7h1.5M673.6 439.8h1.5M669.6 424.6h1.5M706.6 572.9h1.5M697.7 530h1.5M701 532.8h1.5M689.5 519.8h1.5M651.6 375.1h1.5M695.5 529.2h1.5M668.2 410.6h1.5M705 579.4h1.5M671.7 426.2h1.5M673.1 436.2h1.5M665.4 426h1.5M673.2 444.9h1.5M670.5 418.3h1.5M697.5 545.4h1.5M692.2 520.5h1.5M651.5 364.5h1.5M691.6 513h1.5M658.4 388h1.5M676.9 451.5h1.5M664.7 417h1.5M681.8 462.9h1.5M702.6 541.3h1.5M663.4 392.9h1.5M709.8 580.2h1.5M660.9 409.6h1.5M676.3 451.9h1.5M702.8 555.6h1.5M696.3 539.1h1.5M651.4 368.2h1.5M655.9 374.2h1.5M698.2 551.4h1.5M662.7 410.3h1.5M695.9 513.2h1.5M723 621h1.5M673.6 440.6h1.5M707.4 595.5h1.5M669.7 422h1.5M652 368h1.5M677.8 444.9h1.5M667.8 437.5h1.5M650.9 364.6h1.5M658.5 382h1.5M718.8 636.6h1.5M711.7 592.3h1.5M701.1 532.7h1.5M656.7 373.4h1.5M702.9 567.5h1.5M658.5 389.1h1.5M732.1 652.9h1.5M655.4 385.8h1.5M678.3 453.4h1.5M683.5 493.2h1.5M715 624.5h1.5M665.9 430.9h1.5M702.9 553.1h1.5M716.4 617h1.5M686.8 485.4h1.5M711.4 608.4h1.5M662 410.7h1.5M686.4 504.7h1.5M672.9 456.9h1.5M695.2 533.7h1.5M725.2 638.4h1.5M650.8 369.6h1.5M730.3 667.5h1.5M678 457.4h1.5M701.9 565.3h1.5M715.7 607.2h1.5M674.9 439.9h1.5M671.6 439.3h1.5M656.3 372.6h1.5M665.1 417.9h1.5M664.3 405.1h1.5M656.1 369.1h1.5M684.8 474.6h1.5M654.5 372.5h1.5M656.4 380.2h1.5M661.6 401.3h1.5M666.1 419.5h1.5M731.8 658.9h1.5M661.4 402.4h1.5M653.4 373.1h1.5M715.3 591.3h1.5M656.9 378.9h1.5M657.1 384.7h1.5M655.3 379.4h1.5M677.5 453.2h1.5M658.1 395.8h1.5M714.2 608h1.5M720.3 625.2h1.5M715.5 620.4h1.5M696 546.6h1.5M650.6 369.8h1.5M657.9 387.4h1.5M658.8 375.1h1.5M655.5 369.4h1.5M688.7 517.6h1.5M677.7 459.1h1.5M677.2 453.5h1.5M673.3 438.6h1.5M712.8 592.5h1.5M672.3 445.3h1.5M696 533.7h1.5M675.1 466.4h1.5M669.4 439.2h1.5M658.7 382.9h1.5M660.9 401.2h1.5M665 419.8h1.5M670.6 449.5h1.5M656.1 365.6h1.5M705.4 556.4h1.5M712.3 600.6h1.5M677.3 474.8h1.5M663.9 405.2h1.5M673.5 432.4h1.5M675.6 462.3h1.5M673.8 433.9h1.5M677.6 476.3h1.5M683.2 485.2h1.5M706.9 581.9h1.5M693.7 527.8h1.5M718.3 611.1h1.5M658.7 396.5h1.5M655.6 384.2h1.5M711.4 584.2h1.5M705.5 550.7h1.5M716.1 606.3h1.5M667.9 410.9h1.5M654.1 362.8h1.5M699.7 562.9h1.5M686 476.2h1.5M691.4 496.9h1.5M671.3 432.9h1.5M720.8 617.1h1.5M670.9 422h1.5M703 555.9h1.5" stroke="#4c0000" stroke-width="1.5" stroke-opacity="0.9" fill="none"/>
<path d="M685.2 513.3h1.5M723.3 662.4h1.5M675.3 471.8h1.5M695.3 550.8h1.5M699.2 520.8h1.5M721.8 602.9h1.5M688.3 518.2h1.5M663.1 390.5h1.5M712.2 617.1h1.5M701.7 531.2h1.5M674.9 471.7h1.5M670.3 454.4h1.5M717.8 643.6h1.5M670.5 453.1h1.5M678.1 445.9h1.5M672.1 463.4h1.5M664.1 427.1h1.5M718.5 646.3h1.5M708.9 561.7h1.5M650.1 375.3h1.5M704.1 538.6h1.5M683 461.7h1.5M704.8 547h1.5M699.6 572.4h1.5M653.4 383.5h1.5M722.1 610.4h1.5M683.4 506.6h1.5M661.7 385.1h1.5M670.5 412.4h1.5M726 623.4h1.5M700.6 572.6h1.5M659.3 411.7h1.5M736.9 657.8h1.5M714.8 584.1h1.5M666.8 438.4h1.5M721.3 648.7h1.5M674.5 427.2h1.5M691.5 533h1.5M735.8 656.1h1.5M664.9 426.4h1.5M726.5 627.6h1.5M684.8 513.7h1.5M652 377.7h1.5M689.1 528.5h1.5M677.9 439.9h1.5M678.3 487.2h1.5M667.4 407.5h1.5M657.3 404.3h1.5M731.8 646h1.5M664.1 431.4h1.5M691.7 540.4h1.5M720 597.6h1.5M658 399.3h1.5M715.1 579.5h1.5M661.7 377.9h1.5M676 472.1h1.5M655.8 395.6h1.5M671.7 417.3h1.5M662.8 384.5h1.5M729.7 631.7h1.5M688.4 483.5h1.5M712.2 614.2h1.5M706.5 545.7h1.5M684.9 466.9h1.5M659.7 406.9h1.5M697.1 558.3h1.5M662.1 382.1h1.5M659.6 372.9h1.5M693.1 504.1h1.5M698.9 562.3h1.5M656.7 397.8h1.5M660.1 375.4h1.5M666.7 398.8h1.5M696.1 549h1.5M652.3 380.8h1.5M668.5 441.7h1.5M660.2 410.9h1.5M699.3 519.8h1.5M696.5 508.5h1.5M650.8 370.5h1.5M672 424.4h1.5M681.6 499.3h1.5M686.2 472h1.5M684.5 465.2h1.5M665.6 435.7h1.5M677 440.8h1.5M661.2 383.7h1.5M703.4 585.4h1.5M726.2 622.6h1.5M671.7 419.6h1.5M732.5 644.2h1.5M715.5 626.5h1.5M678.7 448.6h1.5M714.9 578.9h1.5M666.4 436.3h1.5M650.7 374.8h1.5M721.4 601.5h1.5M726.1 626.1h1.5M663.5 386.8h1.5M651.4 375.2h1.5M735.6 663.9h1.5M678.9 487.1h1.5M724.3 620.6h1.5M672.3 455.5h1.5M700.6 566.9h1.5M659.8 411.2h1.5M649.6 370.9h1.5M667.3 402.8h1.5M734.9 653.4h1.5M716.1 589.5h1.5M656.5 393.3h1.5M740.2 671.3h1.5M679.3 447.6h1.5M652.8 381.4h1.5M704.7 542.3h1.5M673.5 429.8h1.5M649.9 370.1h1.5M699.9 522.2h1.5M664 388.9h1.5M675.5 436.2h1.5M700.9 568.1h1.5M689.2 484.1h1.5M666.3 397.2h1.5M699 560.3h1.5M708.6 605.5h1.5M674.1 431.4h1.5M704.3 588.5h1.5M690.5 535.6h1.5M688.2 522.2h1.5M676.5 435.1h1.5M701.9 579.1h1.5M703.4 584.1h1.5M692.2 493.2h1.5M726.1 626.1h1.5M655.7 398.1h1.5M732.6 643.4h1.5M675.7 438.2h1.5M650.7 374.6h1.5M648.7 366.7h1.5M684 463.1h1.5M680.1 489.9h1.5M664.1 429h1.5M715 580.2h1.5M705.1 590h1.5M724.7 666.3h1.5M667.7 444.6h1.5M713.2 573.3h1.5M698.8 564.8h1.5M708.7 598.6h1.5M661.5 415.8h1.5M715.6 585.9h1.5M653.9 390.3h1.5M721 653.3h1.5M733.5 646.1h1.5M663.5 424.7h1.5M672.5 464.9h1.5M688.2 525.3h1.5M655 388.8h1.5M661 377.8h1.5M665.6 399.3h1.5M669.1 405.8h1.5M695.8 508.8h1.5M703.3 540h1.5M669.5 407.7h1.5M657.6 363.8h1.5M699.1 566h1.5M700.2 521.4h1.5M691.3 538.8h1.5M691.2 490h1.5M675 432.5h1.5M694.1 542h1.5M722.8 612.8h1.5M650 372.3h1.5M656.7 365.7h1.5M696 513.1h1.5M656.1 391.7h1.5M714.6 575.8h1.5M665.6 400.3h1.5M667 435.2h1.5M697.6 562.7h1.5M649.8 372h1.5M675.4 432.9h1.5M678.8 449.6h1.5M672.4 463.3h1.5M713.2 620.9h1.5M665.7 433.9h1.5M690 486.1h1.5M735 656.9h1.5M708.5 557.4h1.5M656.8 365h1.5M712.3 568.6h1.5M663.8 389.8h1.5M676.8 473.5h1.5M730.9 646.3h1.5M648.7 367h1.5M732.4 646.1h1.5M691.1 489h1.5M710.6 616.5h1.5M690.5 485.9h1.5M697.1 515h1.5M698.1 513.5h1.5M696.5 507.9h1.5M687.6 479.4h1.5M675 467.5h1.5M727.4 632.8h1.5M669.8 452.5h1.5M739.2 668.6h1.5M706.4 552.5h1.5M718.2 597.3h1.5M716.1 587.8h1.5M724.5 669.6h1.5M697.9 521.4h1.5M691.2 538.9h1.5M683.7 460h1.5M728.8 636.2h1.5M709.3 558.1h1.5M738.2 668.8h1.5M658.8 404.6h1.5M723.3 660.6h1.5M677.2 438.7h1.5M669.9 414.9h1.5M682 503.1h1.5M699.1 523.2h1.5M723.7 662.1h1.5M661.5 385.2h1.5M714.4 579.6h1.5M698.4 560.3h1.5M707.3 554.2h1.5M688.7 486.2h1.5M697.8 518.6h1.5M707.7 553.3h1.5M656.9 398.3h1.5M648.4 365.1h1.5M658.1 372.3h1.5M649 364.7h1.5M698.4 518.9h1.5M695.3 552.6h1.5M697.9 519.4h1.5M688.8 523.2h1.5M652.4 379.5h1.5M723.4 661.8h1.5M704.5 541.3h1.5M686.9 514.9h1.5M686.1 513.6h1.5M684.5 509.7h1.5M678.4 487.5h1.5M709.9 557.5h1.5M722.9 660.1h1.5M706.8 547.2h1.5M677.6 443.2h1.5M692.9 496.7h1.5M662.3 417.8h1.5M705.1 585h1.5M649.8 367.1h1.5M681.7 453.6h1.5M661 416.6h1.5M719.5 594.4h1.5M661.5 379.8h1.5M674.8 465.3h1.5M670.3 448.7h1.5M675.5 432.6h1.5M712 571.8h1.5M716.1 637h1.5M708.8 561.1h1.5M688.1 518.9h1.5M712.2 571h1.5M716.1 632h1.5M649.5 369.7h1.5M663.1 422.4h1.5M680.3 452.1h1.5M674.8 468.7h1.5M669.1 450.6h1.5M711.3 618.9h1.5M710.1 564.2h1.5M684.9 510.9h1.5M686.7 479.3h1.5M660.8 418.6h1.5M652.1 379.1h1.5M670.1 416.3h1.5M660.6 380.8h1.5M659.8 412.1h1.5M654.1 384.7h1.5M679.6 448.1h1.5M695.1 552.5h1.5M652.6 385.2h1.5M699.3 571.4h1.5M658.6 402.9h1.5M676.5 480.5h1.5M717.4 593.2h1.5M720.2 646.5h1.5M711.7 611h1.5M647.9 365.5h1.5M659.2 411.8h1.5M723.8 664.1h1.5M713.2 622.2h1.5M702.8 578.7h1.5M696.5 509.1h1.5M722.9 611.5h1.5M666 399.5h1.5M703.7 535.8h1.5M655.5 393.3h1.5M700.6 524h1.5M669.8 449.6h1.5M694.9 551.1h1.5M718.1 643h1.5M667.9 441.1h1.5M698.1 566.9h1.5M659.2 376.1h1.5M733.4 653h1.5M676.8 477.9h1.5M703.3 532.7h1.5M693.8 504.4h1.5M675.2 473.5h1.5M660 373.3h1.5M673.7 464.8h1.5M690.3 489.3h1.5M693.5 500.9h1.5M666.6 437.8h1.5M662 382.2h1.5M671.1 420.8h1.5M731.2 641.6h1.5M723.8 615.4h1.5M715.8 587.8h1.5M680.4 453.6h1.5M701.4 571.1h1.5M722.5 608.2h1.5M700.8 530.6h1.5M724 665.1h1.5M685.7 517.6h1.5M712.7 620.8h1.5M691.5 489.2h1.5M729.6 634.4h1.5M680.2 495h1.5M688.6 524.9h1.5M707.8 598.6h1.5M682.6 457.2h1.5M677 443.2h1.5M721.8 602.3h1.5M685.8 516.3h1.5M658 370.1h1.5M701.9 532.5h1.5M685.4 507.5h1.5M656.6 393.8h1.5M697.9 522h1.5M720.8 603.6h1.5M707.6 550.7h1.5M702.4 580.8h1.5M665.6 436.8h1.5M689.9 524.4h1.5" stroke="#0000a8" stroke-width="1.5" stroke-opacity="0.9" fill="none"/>
<path d="M655.3 365h1.1M696.2 514.8h1.1M656.1 366.9h1.1M674.6 434.7h1.1M693.2 534.5h1.1M687 513.3h1.1M664.1 418.7h1.1M671.4 426.6h1.1M726 657.4h1.1M712.9 612.1h1.1M720.5 617.5h1.1M672.9 430.5h1.1M720.8 613.5h1.1M663 405.5h1.1M672 438.1h1.1M727.5 671.6h1.1M702.6 548.7h1.1M712.1 574.8h1.1M668.8 410.2h1.1M660.5 408.9h1.1M686.9 487.3h1.1M662.2 401.3h1.1M655 385.8h1.1M661.7 383.5h1.1M684.7 473.2h1.1M657 384h1.1M671 450.7h1.1M709.9 567.2h1.1M719.5 623.6h1.1M681.1 469.8h1.1M691.9 501.5h1.1M671.3 425.1h1.1M671.2 423h1.1M684.3 488.2h1.1M671.9 440.4h1.1M712 577.1h1.1M653.8 372.2h1.1M664.3 401.9h1.1M670.7 440.3h1.1M690.4 509.9h1.1M686.6 490.3h1.1M715.1 604h1.1M705.3 579.1h1.1M665.1 405.7h1.1M668.2 438.9h1.1M663.3 396.5h1.1M694.1 513.6h1.1M670.8 423.4h1.1M728.4 661.1h1.1M725.3 653.1h1.1M727.5 657.4h1.1M665.6 426.7h1.1M681.4 459.9h1.1M685.8 500.5h1.1M692.7 527.8h1.1M654.8 383.3h1.1M699.7 539.6h1.1M711.8 598.3h1.1M691.1 515.9h1.1M655.2 377h1.1M668.6 441.9h1.1M685.7 499.5h1.1M681.5 464.4h1.1M681.8 461h1.1M678.8 448.4h1.1M709 585.7h1.1M671.3 433.5h1.1M654.8 363.1h1.1M679.8 454.3h1.1M692.5 517.6h1.1M683.8 471.1h1.1M721.5 609.8h1.1M721.2 645.7h1.1M727.3 654.8h1.1M665.8 420h1.1M698.9 527.9h1.1M713.6 617h1.1M733.3 669.4h1.1M691.7 506.1h1.1M653.8 364.8h1.1M713.5 585.8h1.1M726.1 634.3h1.1M706.5 576.6h1.1M728.6 652.9h1.1M671 449.2h1.1M665.7 426.5h1.1M675.3 456.9h1.1M689.5 521.4h1.1M675.7 439.6h1.1M707.2 580.8h1.1" stroke="#ffa020" stroke-width="1.1" stroke-opacity="0.9" fill="none"/>
<ellipse cx="652.9" cy="364.4" rx="10.5" ry="2.8" fill="#20c8f0" fill-opacity="0.8" filter="url(#bl2)"/>
<ellipse cx="652.9" cy="363.9" rx="8.6" ry="2.1" fill="#f0e020"/>
<ellipse cx="652.9" cy="363.1" rx="7.4" ry="1.6" fill="#f04800"/>
<ellipse cx="652.9" cy="362.9" rx="5" ry="0.9" fill="#b01000"/>
<path d="M312.5 459.6L284.7 581.4" stroke="#1040d8" stroke-opacity="0.38" stroke-width="6" filter="url(#bl1)"/>
<path d="M312.5 459.6L284.7 581.4" stroke="#20a0f0" stroke-opacity="0.55" stroke-width="3.6" stroke-dasharray="1 1.7"/>
<path d="M310.6 469.3L286.3 574.9" stroke="#c0d040" stroke-opacity="0.75" stroke-width="2" stroke-dasharray="1 4"/>
<path d="M279 551.8 L300 551.8 L302 558.8 L281 558.8 Z" fill="#00ee00"/><path d="M281 558.8 L302 558.8 L304 563.6 L283 563.6Z" fill="#00a848" fill-opacity="0.9"/>
<path d="M718 610 L740.5 610 L737 617 L714 617 Z" fill="#f000f0"/><path d="M714 617 L737 617 L736.5 619 L714.5 619Z" fill="#a000c0"/>
<g fill="none" stroke="#e0e0e0" stroke-width="1"><path d="M780 682L784.1 692.4L778.9 698.4"/><path d="M778 697.2L780.6 699.4L777.6 700.2Z" fill="#e0e0e0" stroke-width="0.6"/></g>
<g fill="none" stroke="#9090c8" stroke-width="0.9" stroke-opacity="0.55"><path d="M768 644L771 652L765 664M762 656L772 660M764 652L773 656M770 648L766 660M755 657L762 658"/></g>
<linearGradient id="cb" x1="0" y1="318" x2="0" y2="657" gradientUnits="userSpaceOnUse">
<stop offset="0" stop-color="#800000"/><stop offset="0.1" stop-color="#800000"/><stop offset="0.22" stop-color="#e60000"/><stop offset="0.27" stop-color="#f82000"/><stop offset="0.36" stop-color="#ff8000"/>
<stop offset="0.46" stop-color="#fff000"/><stop offset="0.507" stop-color="#c8f040"/><stop offset="0.58" stop-color="#80ff80"/><stop offset="0.665" stop-color="#18ffe0"/><stop offset="0.767" stop-color="#1090f0"/>
<stop offset="0.832" stop-color="#1050f0"/><stop offset="0.892" stop-color="#0808f8"/><stop offset="0.97" stop-color="#0000b8"/><stop offset="1" stop-color="#00008c"/></linearGradient>
<rect x="882" y="318" width="28" height="339" fill="url(#cb)"/>
<g fill="#ff0000" stroke="#000" stroke-width="0.3" font-family="'Liberation Sans',sans-serif">
<text x="872" y="283" font-size="19.5" textLength="47.5" lengthAdjust="spacingAndGlyphs">0.292</text>
<text x="859.5" y="675.8" font-size="19.5" textLength="56" lengthAdjust="spacingAndGlyphs">2.1x10</text>
<text x="916.5" y="660.5" font-size="10.8" textLength="15.5" lengthAdjust="spacingAndGlyphs" stroke-width="0.2">-17</text>
<g transform="translate(930.2 607.5) rotate(-90)" font-size="19.5">
<text x="0" y="0" textLength="48.4" lengthAdjust="spacingAndGlyphs">Power</text>
<text x="53.7" y="0" textLength="59.5" lengthAdjust="spacingAndGlyphs">density</text>
<text x="128" y="0" textLength="73.5" lengthAdjust="spacingAndGlyphs">[W/m^2]</text>
</g>
</g>
</svg>

<!-- slider -->
<div class="abs" style="left:35px;top:807px;width:866px;height:5px;box-sizing:border-box;border:1px solid #2b6cb0;border-radius:3px;background:linear-gradient(#4aa5e8,#3992da);"></div>
<div class="abs" style="left:41px;top:819px;width:858px;height:3px;background:repeating-linear-gradient(90deg,#b4b4b4 0,#b4b4b4 1px,transparent 1px,transparent 3.44px);"></div>
<div class="abs" style="left:41px;top:818px;width:1px;height:5px;background:#b4b4b4;"></div>
<div class="abs" style="left:900px;top:818px;width:1px;height:5px;background:#b4b4b4;"></div>
<div class="abs" style="left:894px;top:804px;width:13px;height:12px;box-sizing:border-box;border:1px solid #b0b0b0;border-radius:3.5px;background:linear-gradient(#fff,#f4f4f4);box-shadow:0 1px 1px rgba(0,0,0,0.12);"></div>
<div class="tb" style="left:914px;top:807px;">1249</div>

<!-- list buttons -->
<svg style="left:0;top:845px" width="200" height="32" viewBox="0 845 200 32">
<defs>
<linearGradient id="bl" x1="0" y1="0" x2="0" y2="1"><stop offset="0" stop-color="#9fbde6"/><stop offset="1" stop-color="#6b93cf"/></linearGradient>
<linearGradient id="gr" x1="0" y1="0" x2="0" y2="1"><stop offset="0" stop-color="#7fd02a"/><stop offset="1" stop-color="#4aa00e"/></linearGradient>
</defs>
<ellipse cx="49" cy="871.5" rx="8" ry="1.5" fill="#000" opacity="0.08"/>
<path d="M46.4 853 H51.8 V859.4 H58.6 V864.8 H51.8 V871 H46.4 V864.8 H39.6 V859.4 H46.4 Z" fill="url(#bl)" stroke="#5d86c6" stroke-width="1"/>
<rect x="79.5" y="859.7" width="21.2" height="5.6" fill="url(#bl)" stroke="#5d86c6" stroke-width="1"/>
<ellipse cx="131" cy="871.2" rx="9" ry="1.8" fill="#000" opacity="0.12"/>
<path d="M124.7 849.5 H136.7 V858.3 H142.2 L130.7 871.3 L119.2 858.3 H124.7 Z" fill="url(#gr)" stroke="#3f8d0e" stroke-width="1" stroke-linejoin="round"/>
<ellipse cx="171.7" cy="871.6" rx="9" ry="1.6" fill="#000" opacity="0.12"/>
<path d="M171.7 849.3 L183 863.2 H177.5 V871.3 H165.8 V863.2 H160.3 Z" fill="url(#gr)" stroke="#3f8d0e" stroke-width="1" stroke-linejoin="round"/>
</svg>

<!-- table -->
<div class="abs" style="left:25px;top:892px;width:932px;height:135px;box-sizing:border-box;border:1px solid #b8b8b8;background:#fff;"></div>
<div class="abs" style="left:26px;top:893px;width:930px;height:21px;background:#efefef;"></div>
<div class="abs" style="left:26px;top:893px;width:514px;height:21px;box-sizing:border-box;background:linear-gradient(#f7f7f7,#e9e9e9);border-bottom:1px solid #c4c4c4;"></div>
<div class="abs" style="left:439px;top:893px;width:1px;height:21px;background:#c4c4c4;"></div>
<div class="abs" style="left:539px;top:893px;width:1px;height:21px;background:#d4d4d4;"></div>
<div class="abs" style="left:26px;top:914px;width:14px;height:112px;background:#efefef;"></div>
<div class="abs" style="left:26px;top:914px;width:14px;height:29px;box-sizing:border-box;background:linear-gradient(#f7f7f7,#e9e9e9);border-bottom:1px solid #c4c4c4;border-right:1px solid #c4c4c4;"></div>
<div class="lbl" style="left:239.5px;top:896px;font-weight:bold;">File to plot</div>
<div class="lbl" style="left:490px;top:896px;font-weight:bold;">Plot type</div>
<div class="tb" style="left:28px;top:922px;font-weight:bold;">1</div>
<div class="abs" style="left:40px;top:914px;width:400px;height:29px;box-sizing:border-box;border:1px solid #a6a6a6;border-top-color:#9a9a9a;border-radius:2px;background:linear-gradient(#fbfbfb,#e8e8e8);"></div>
<div class="abs" style="left:440px;top:914px;width:100px;height:29px;box-sizing:border-box;border:1px solid #a6a6a6;border-top-color:#9a9a9a;border-radius:2px;background:linear-gradient(#fbfbfb,#e8e8e8);"></div>
<div class="tb" style="left:45px;top:921px;">power_density.csv</div>
<div class="tb" style="left:445px;top:921px;">Wireframe</div>
<svg style="left:420px;top:924px" width="120" height="10" viewBox="420 924 120 10"><path d="M424 927 H431 L427.5 930.5 Z" fill="#555"/><path d="M523.8 927 H530.8 L527.3 930.5 Z" fill="#555"/></svg>

<!-- status -->
<div class="tb" style="left:22px;top:1046px;">/home/rod/oghma/oghma8.0/ring/snapshots</div>
<svg style="left:950px;top:1048px" width="16" height="16" viewBox="950 1048 16 16" fill="#a8a8a8">
<rect x="963" y="1052" width="1" height="1"/>
<rect x="960" y="1055" width="1" height="1"/><rect x="963" y="1055" width="1" height="1"/>
<rect x="957" y="1058" width="1" height="1"/><rect x="960" y="1058" width="1" height="1"/><rect x="963" y="1058" width="1" height="1"/>
<rect x="954" y="1061" width="1" height="1"/><rect x="957" y="1061" width="1" height="1"/><rect x="960" y="1061" width="1" height="1"/><rect x="963" y="1061" width="1" height="1"/>
</svg>
</body>
</html>
